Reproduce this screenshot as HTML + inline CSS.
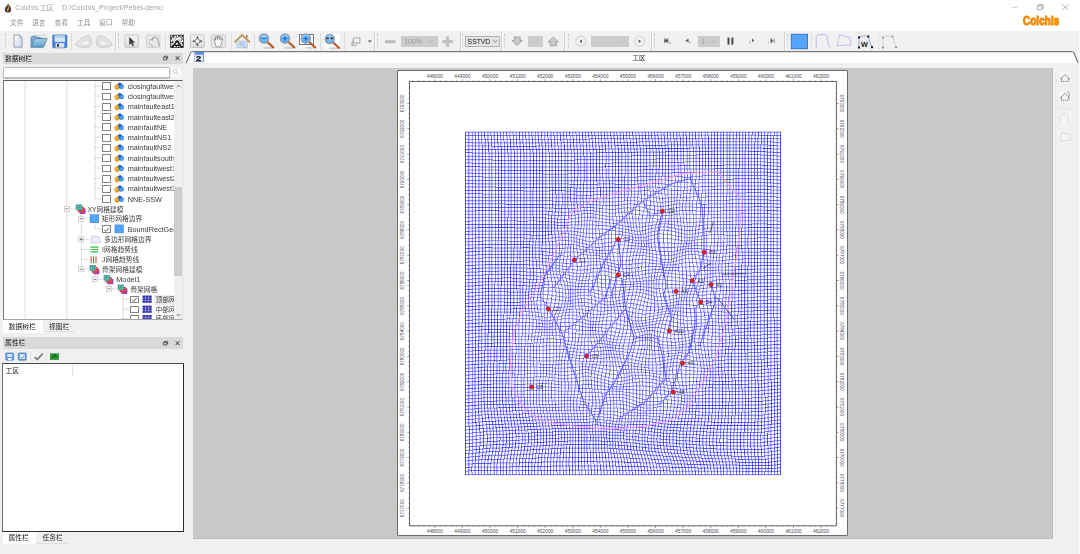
<!DOCTYPE html>
<html lang="zh"><head><meta charset="utf-8"><title>Colchis:工区</title>
<style>
*{box-sizing:border-box;margin:0;padding:0}
html,body{width:1080px;height:554px;overflow:hidden;background:#f0f0f0}
body{font-family:"Liberation Sans","Noto Sans CJK SC",sans-serif;font-size:6.75px;color:#333;position:relative}
.a{position:absolute}
.t{position:absolute;white-space:nowrap;line-height:10px;height:10px;transform:scaleY(.93);transform-origin:0 50%}
#titlebar{left:0;top:0;width:1080px;height:31px;background:#fff}
#toolbar{left:2.5px;top:31px;width:1077.5px;height:20px;background:#f1f1f1}
.sep{position:absolute;top:32.5px;width:1px;height:17px;background:#d4d4d4}
.hd{position:absolute;top:34px;width:1px;height:14px;border-left:1px dotted #c4c4c4}
.cb{position:absolute;top:35.5px;height:11.2px;background:#cccccc}
.ph{position:absolute;left:2.7px;width:180.8px;background:#d9d9d9}
.row{position:absolute;left:0;height:10.15px;width:170px}
.ck{position:absolute;width:9px;height:7.8px;border:.75px solid #848484;background:#fff}
.ex{position:absolute;width:5px;height:5px;border:.6px solid #9a9a9a;background:#fff}
.ex:before{content:"";position:absolute;left:.8px;right:.8px;top:1.6px;height:.6px;background:#444}
.ex.p:after{content:"";position:absolute;top:.8px;bottom:.8px;left:1.6px;width:.6px;background:#444}
</style></head><body>
<!--TITLE-->
<div class="a" id="titlebar"></div>
<svg class="a" style="left:4px;top:3px" width="8" height="10" viewBox="0 0 8 10"><path d="M4 .3C4.6 2.2 7.2 3.8 7.2 6.4A3.2 3.2 0 0 1 .8 6.4C.8 4.8 2 4 2.6 2.6C3.2 3.4 3.6 2 4 .3Z" fill="#4a4440"/><path d="M4.9 2.6C4.6 4.4 5.4 5.2 4.6 6.6C4 7.6 3.8 8.4 3.4 9C2.6 7.8 3 6.6 3.6 5.6C4.2 4.6 4.4 3.8 4.900 2.6Z" fill="#f09a3a"/></svg>
<div class="t" style="left:15.3px;top:3.4px;color:#a4a4a4;font-size:6.9px">Colchis:工区</div>
<div class="t" style="left:62px;top:3.4px;color:#a4a4a4;font-size:7.25px">D:/Colchis_Project/Petrel-demo</div>
<div class="t" style="left:10px;top:17.5px;color:#8e8e8e">文件</div>
<div class="t" style="left:32px;top:17.5px;color:#8e8e8e">语言</div>
<div class="t" style="left:54.5px;top:17.5px;color:#8e8e8e">查看</div>
<div class="t" style="left:77px;top:17.5px;color:#8e8e8e">工具</div>
<div class="t" style="left:99px;top:17.5px;color:#8e8e8e">窗口</div>
<div class="t" style="left:121.5px;top:17.5px;color:#8e8e8e">帮助</div>
<svg class="a" style="left:1005px;top:0" width="75" height="14" viewBox="0 0 75 14"><path d="M6.5 7.3h6" stroke="#c4c4c4" stroke-width=".8" fill="none"/><path d="M32.3 5.9h4.6v3.8h-4.6zM33.6 5.9v-1.3h4.6v3.8h-1.3" stroke="#8a8a8a" stroke-width=".7" fill="none"/><path d="M57.3 4.7l6 5.2M63.3 4.7l-6 5.2" stroke="#a0a0a0" stroke-width=".8" fill="none"/></svg>
<div class="a" id="logo" style="left:1022.6px;top:14.3px;height:15px;line-height:15px;font-weight:bold;font-size:12.4px;color:#f08c0a;-webkit-text-stroke:1.15px #f08c0a;transform-origin:0 50%;transform:scaleX(.79);white-space:nowrap;letter-spacing:.2px">Colchis</div>
<!--TOOLBAR-->
<div class="a" id="toolbar"></div>
<div class="sep" style="left:71px;background:#dcdcdc"></div><div class="sep" style="left:164.8px;background:#dcdcdc"></div><div class="sep" style="left:230.6px;background:#dcdcdc"></div><div class="sep" style="left:254.4px;background:#dcdcdc"></div><div class="sep" style="left:320px;background:#dcdcdc"></div><div class="sep" style="left:344.4px;background:#dcdcdc"></div><div class="sep" style="left:115.2px;top:31px;height:20px;background:#d2d2d2"></div><div class="sep" style="left:116.2px;top:31px;height:20px;background:#fafafa"></div><div class="sep" style="left:374.4px;top:31px;height:20px;background:#d2d2d2"></div><div class="sep" style="left:375.4px;top:31px;height:20px;background:#fafafa"></div><div class="sep" style="left:459.7px;top:31px;height:20px;background:#d2d2d2"></div><div class="sep" style="left:460.7px;top:31px;height:20px;background:#fafafa"></div><div class="sep" style="left:501.4px;top:31px;height:20px;background:#d2d2d2"></div><div class="sep" style="left:502.4px;top:31px;height:20px;background:#fafafa"></div><div class="sep" style="left:564.4px;top:31px;height:20px;background:#d2d2d2"></div><div class="sep" style="left:565.4px;top:31px;height:20px;background:#fafafa"></div><div class="sep" style="left:650.6px;top:31px;height:20px;background:#d2d2d2"></div><div class="sep" style="left:651.6px;top:31px;height:20px;background:#fafafa"></div><div class="sep" style="left:783.7px;top:31px;height:20px;background:#d2d2d2"></div><div class="sep" style="left:784.7px;top:31px;height:20px;background:#fafafa"></div><div class="hd" style="left:4.5px"></div><div class="hd" style="left:117.6px"></div><div class="hd" style="left:377.3px"></div><div class="hd" style="left:462.2px"></div><div class="hd" style="left:504.4px"></div><div class="hd" style="left:567.8px"></div><div class="hd" style="left:653.9px"></div><div class="hd" style="left:786.7px"></div><div class="sep" style="left:811.3px;background:#e2e2e2"></div><div class="sep" style="left:877.8px;background:#e2e2e2"></div><svg class="a" style="left:0;top:31px" width="1080" height="20" viewBox="0 31 1080 20"><defs><linearGradient id="gp" x1="0" y1="0" x2="1" y2="1"><stop offset="0" stop-color="#fff"/><stop offset="1" stop-color="#c6d4f4"/></linearGradient><linearGradient id="gf" x1="0" y1="0" x2="0" y2="1"><stop offset="0" stop-color="#a9d3ee"/><stop offset="1" stop-color="#5d9ccd"/></linearGradient><radialGradient id="gl" cx=".5" cy=".4" r=".6"><stop offset="0" stop-color="#bfe4ff"/><stop offset="1" stop-color="#3f9df0"/></radialGradient><linearGradient id="gb" x1="0" y1="0" x2="0" y2="1"><stop offset="0" stop-color="#f4f4f4"/><stop offset="1" stop-color="#dcdcdc"/></linearGradient></defs><path d="M14 35h5.6l2.4 2.4v9.8h-8z" fill="url(#gp)" stroke="#8d8d96" stroke-width=".8"/><path d="M19.6 35v2.4h2.4" fill="none" stroke="#8d8d96" stroke-width=".6"/><path d="M31 47.3V37.6l1.2-1.4h4l1 1.2h7.4v2" fill="#7fb0d8" stroke="#4c6f8f" stroke-width=".7"/><path d="M31 47.3l3.6-8.6h12.6l-3.8 8.6z" fill="url(#gf)" stroke="#4c6f8f" stroke-width=".7"/><path d="M36 36.3l8.6-1.6.6 3.6" fill="#fff" stroke="#8aa" stroke-width=".5"/><rect x="52.800" y="35" width="14" height="12.800" rx="1" fill="#4585e4" stroke="#2f5cae" stroke-width=".7"/><rect x="54.600" y="35.500" width="10.400" height="6.400" fill="#d6e6ee"/><rect x="54.600" y="35.500" width="10.400" height="2.200" fill="#b6d3e6"/><rect x="55.600" y="43.200" width="8.600" height="4.400" fill="#dde1e8"/><rect x="57" y="44" width="2" height="2.800" fill="#3a3f4a"/><path d="M75.500 45C78 40 84 35.500 89 35.800C92.500 38 92.500 44 90 46.500C85 48 79 47.500 75.500 45Z" fill="#e2e2e2" stroke="#c2c2c2" stroke-width=".8"/><path d="M80 44.200C82.500 41.700 86 40.200 88.500 40.700C89.500 42 89 44 88 45C85 45.600 82 45.200 80 44.200Z" fill="#f1f1f1" stroke="#cfcfcf" stroke-width=".5"/><path d="M112.500 45C110 40 104 35.500 99 35.800C95.500 38 95.500 44 98 46.500C103 48 109 47.500 112.500 45Z" fill="#e2e2e2" stroke="#c2c2c2" stroke-width=".8"/><path d="M108 44.200C105.500 41.700 102 40.200 99.500 40.700C98.500 42 99 44 100 45C103 45.600 106 45.200 108 44.200Z" fill="#f1f1f1" stroke="#cfcfcf" stroke-width=".5"/><rect x="125" y="35" width="13.4" height="12.4" rx="1" fill="url(#gb)" stroke="#b4b4b4" stroke-width=".7"/><path d="M129.200 36.8v8.200l2-1.800 1.500 3 1.300-.6-1.500-2.900h2.600z" fill="#3c3c3c"/><rect x="146.500" y="35" width="13.4" height="12.4" rx="1" fill="#e9e9e9" stroke="#c4c4c4" stroke-width=".7"/><path d="M149.500 40.500c1-1.600 2.400-1 2.800 0l.6-2.800 1.200.2.400-1 1.200.6 1 .2c1.600 2.600 2 5.600 2.600 8.600" fill="none" stroke="#777" stroke-width=".7"/><path d="M149 42.500c.8 1.600 2.400 3.400 4.400 4.400" fill="none" stroke="#888" stroke-width=".7"/><rect x="170.200" y="34.800" width="13.600" height="13" fill="#333"/><path d="M171.0 35.60h1.2v1.28h-1.2zM171.0 39.44h1.2v1.28h-1.2zM171.0 40.72h1.2v1.28h-1.2zM171.0 43.28h1.2v1.28h-1.2zM171.0 44.56h1.2v1.28h-1.2zM172.2 36.88h1.2v1.28h-1.2zM172.2 38.16h1.2v1.28h-1.2zM172.2 39.44h1.2v1.28h-1.2zM172.2 43.28h1.2v1.28h-1.2zM173.4 38.16h1.2v1.28h-1.2zM173.4 39.44h1.2v1.28h-1.2zM173.4 40.72h1.2v1.28h-1.2zM173.4 42.00h1.2v1.28h-1.2zM173.4 43.28h1.2v1.28h-1.2zM173.4 44.56h1.2v1.28h-1.2zM173.4 45.84h1.2v1.28h-1.2zM174.6 35.60h1.2v1.28h-1.2zM174.6 36.88h1.2v1.28h-1.2zM174.6 39.44h1.2v1.28h-1.2zM174.6 42.00h1.2v1.28h-1.2zM174.6 44.56h1.2v1.28h-1.2zM174.6 45.84h1.2v1.28h-1.2zM175.8 40.72h1.2v1.28h-1.2zM175.8 42.00h1.2v1.28h-1.2zM175.8 43.28h1.2v1.28h-1.2zM175.8 44.56h1.2v1.28h-1.2zM177.0 35.60h1.2v1.28h-1.2zM177.0 38.16h1.2v1.28h-1.2zM177.0 42.00h1.2v1.28h-1.2zM177.0 43.28h1.2v1.28h-1.2zM177.0 45.84h1.2v1.28h-1.2zM178.2 36.88h1.2v1.28h-1.2zM178.2 38.16h1.2v1.28h-1.2zM178.2 42.00h1.2v1.28h-1.2zM178.2 43.28h1.2v1.28h-1.2zM178.2 44.56h1.2v1.28h-1.2zM179.4 36.88h1.2v1.28h-1.2zM179.4 38.16h1.2v1.28h-1.2zM179.4 39.44h1.2v1.28h-1.2zM179.4 40.72h1.2v1.28h-1.2zM179.4 43.28h1.2v1.28h-1.2zM179.4 45.84h1.2v1.28h-1.2zM180.6 35.60h1.2v1.28h-1.2zM180.6 38.16h1.2v1.28h-1.2zM180.6 40.72h1.2v1.28h-1.2zM180.6 42.00h1.2v1.28h-1.2zM180.6 43.28h1.2v1.28h-1.2zM180.6 44.56h1.2v1.28h-1.2zM181.8 36.88h1.2v1.28h-1.2zM181.8 39.44h1.2v1.28h-1.2zM181.8 40.72h1.2v1.28h-1.2zM181.8 44.56h1.2v1.28h-1.2z" fill="#f2f2f2"/><path d="M174 36.600l6 5M180 36.600l-6 5M177 35.600v7M173.600 39h6.800" stroke="#f4f4f4" stroke-width=".9" fill="none"/><path d="M172 47.600l5-6.600 5 6.600M174.600 45.400h4.800" stroke="#111" stroke-width="1.300" fill="none"/><rect x="190.500" y="35" width="13.8" height="12.400" rx="1" fill="url(#gb)" stroke="#b4b4b4" stroke-width=".7"/><circle cx="197.400" cy="41.200" r="2.300" fill="#f8f8f8" stroke="#555" stroke-width=".7"/><path d="M197.400 36.200l1.400 2h-2.800zM197.400 46.200l1.400-2h-2.800zM192.400 41.200l2-1.400v2.800zM202.400 41.200l-2-1.400v2.800z" fill="#333"/><rect x="211.200" y="35" width="14.600" height="12.400" rx="1" fill="#e6e6e6" stroke="#c0c0c0" stroke-width=".7"/><path d="M215 42.500l-1.200-3.400 1-.4 1 1.800-.4-3.800 1.200-.2.800 3 .2-3.600h1.200l.4 3.600.8-3 1.100.3-.3 3.500 1.200-1.600.9.600-1.600 3.600-.6 3.800h-4.600z" fill="#fff" stroke="#666" stroke-width=".6"/><path d="M236.800 41h10.600v6.800h-10.600z" fill="#cfe0fc" stroke="#9ab" stroke-width=".4"/><path d="M234.200 41.600l8-7.600 8 7.600-1 .9-7-6.300-7 6.300z" fill="#d3a066" stroke="#a87a48" stroke-width=".5"/><rect x="246" y="35" width="1.500" height="3" fill="#b5793a"/><path d="M239.200 43h5.400M239.200 45h5.400" stroke="#8aa0c8" stroke-width=".6"/><path d="M243.500 46.500l3 2" stroke="#889" stroke-width=".6"/><ellipse cx="268" cy="47.7" rx="5" ry="1" fill="#cfcfcf"/><path d="M267.4 41.9l6 5.600" stroke="#b4561c" stroke-width="2" stroke-linecap="round"/><circle cx="264" cy="38.5" r="4.700" fill="url(#gl)" stroke="#9b9b9b" stroke-width="1.100"/><path d="M261.4 38.5h5.200" stroke="#1f6fd0" stroke-width="1.400"/><ellipse cx="289" cy="47.7" rx="5" ry="1" fill="#cfcfcf"/><path d="M288.4 41.9l6 5.600" stroke="#b4561c" stroke-width="2" stroke-linecap="round"/><circle cx="285" cy="38.5" r="4.700" fill="url(#gl)" stroke="#9b9b9b" stroke-width="1.100"/><path d="M282.4 38.5h5.200M285 35.9v5.200" stroke="#1f6fd0" stroke-width="1.400"/><rect x="299.200" y="33.800" width="15.400" height="14.600" fill="#fff"/><rect x="299.600" y="34.600" width="14" height="10" fill="none" stroke="#555" stroke-width=".8"/><ellipse cx="309.8" cy="47.7" rx="5" ry="1" fill="#cfcfcf"/><path d="M309.2 41.9l6 5.600" stroke="#b4561c" stroke-width="2" stroke-linecap="round"/><circle cx="305.8" cy="38.5" r="4.700" fill="url(#gl)" stroke="#9b9b9b" stroke-width="1.100"/><path d="M303.2 38.5h5.200M305.8 35.9v5.200" stroke="#1f6fd0" stroke-width="1.400"/><rect x="324" y="33.600" width="16" height="15" fill="#fff"/><ellipse cx="333.7" cy="48.2" rx="5" ry="1" fill="#cfcfcf"/><path d="M333.09999999999997 42.4l6 5.600" stroke="#b4561c" stroke-width="2" stroke-linecap="round"/><circle cx="329.7" cy="39" r="4.700" fill="url(#gl)" stroke="#9b9b9b" stroke-width="1.100"/><path d="M326.3 38.4h6.800" stroke="#222" stroke-width="1.500"/><path d="M328.7 38.4h2" stroke="#ddd" stroke-width="1"/><path d="M353.400 38h6.600v5h-6.600zM352 44.600l1.400-1.600M352 45.600h4l1.400-2.600M352 45.600v-3.600l1.400-1" fill="none" stroke="#8a8a8a" stroke-width=".7"/><path d="M367.800 40.400h4l-2 2z" fill="#555"/><rect x="385" y="40.300" width="10.600" height="3" rx=".8" fill="#b9b9b9"/><path d="M445.800 36.400h3.400v3.600h3.600v3.200h-3.600v3.600h-3.400v-3.600h-3.600v-3.200h3.600z" fill="#c2c2c2"/><path d="M514.200 37h6v3.600h2.200l-5.200 4.800-5.200-4.800h2.200z" fill="#c9c9c9" stroke="#8c8c8c" stroke-width=".7"/><path d="M550.300 45.800h6v-3.800h2.200l-5.200-4.800-5.200 4.800h2.200z" fill="#c9c9c9" stroke="#8c8c8c" stroke-width=".7"/><circle cx="580.800" cy="41.300" r="5" fill="#f2f2f2" stroke="#c2c2c2" stroke-width=".8"/><path d="M582 39.500v3.600l-2.600-1.800z" fill="#555"/><circle cx="639.700" cy="41.300" r="5" fill="#f2f2f2" stroke="#c2c2c2" stroke-width=".8"/><path d="M638.600 39.500v3.600l2.600-1.800z" fill="#555"/><path d="M664.600 38.200v5M668 38.200v5M664.600 40.700l1.700-1.500v3zM668 40.700l-1.700-1.500v3z" stroke="#555" stroke-width=".7" fill="#555"/><path d="M669.400 42.400l1.200.2-.6 1.600" stroke="#777" stroke-width=".5" fill="none"/><path d="M688.600 38.400v4.400l-3.400-2.200z" fill="#666"/><path d="M690.600 41.800c-1 .2-1.200 1.600 0 1.800" stroke="#777" stroke-width=".6" fill="none"/><rect x="727.500" y="37.600" width="2" height="7" fill="#484848"/><rect x="731.400" y="37.600" width="2" height="7" fill="#484848"/><path d="M752 38.200v4.400l2.300-2.200z" fill="#666"/><path d="M750.400 41c-1.400.4-1.400 2 0 2.400" stroke="#777" stroke-width=".6" fill="none"/><path d="M770.800 38.600v4.400l2.500-2.200zM774.400 38.400v4.800" fill="#666" stroke="#666" stroke-width=".6"/><path d="M769 42c-.8.300-.8 1.400 0 1.700" stroke="#888" stroke-width=".5" fill="none"/><rect x="791.200" y="34.200" width="16.400" height="14.600" fill="#55a5fc" stroke="#2a67b6" stroke-width=".8"/><path d="M816.200 48v-10.500c0-1.600 1.200-2.200 3-2.600l5.400-.6c1.600 0 2 1 2.400 2.600l1.600 8.400c.4 1.400 1 2.200 2 2.600" fill="none" stroke="#a9a9f0" stroke-width=".8"/><path d="M839.400 34.900l10.600 2.900 1 6.900-13.800 1.100z" fill="none" stroke="#b4b4f2" stroke-width=".8"/><path d="M859 47.500v-10c3-1.600 6.600-2.400 9.400-1 1 4 2 8 3.600 10.600" fill="none" stroke="#8f8fe8" stroke-width=".8"/><rect x="858.0" y="36.4" width="2" height="2" fill="#111"/><rect x="867.3" y="35.5" width="2" height="2" fill="#111"/><rect x="858.0" y="46.5" width="2" height="2" fill="#111"/><rect x="871.0" y="46.2" width="2" height="2" fill="#111"/><rect x="882.1" y="36.7" width="1.800" height="1.800" fill="#7a7a7a"/><rect x="891.6" y="35.7" width="1.800" height="1.800" fill="#7a7a7a"/><rect x="882.1" y="46.6" width="1.800" height="1.800" fill="#7a7a7a"/><rect x="895.1" y="46.3" width="1.800" height="1.800" fill="#7a7a7a"/><path d="M883 47.500v-10c3-1.800 7-2 9.500-1l3.500 10.700" fill="none" stroke="#bdbdbd" stroke-width=".6"/><text x="861" y="47.300" font-family="Liberation Sans,sans-serif" font-weight="bold" font-size="8.800" fill="#2a2a2a">w</text></svg><div class="cb" style="left:401.400px;width:36.500px"></div><div class="t" style="left:404px;top:36.800px;color:#9a9a9a;font-size:7px">100%</div><div class="cb" style="left:465.300px;width:35px;background:#e3e3e3;border:.7px solid #b4b4b4"></div><div class="t" style="left:467.600px;top:36.900px;color:#111;font-size:6.800px">SSTVD</div><div class="cb" style="left:527.800px;width:15.200px"></div><div class="cb" style="left:591.300px;width:38px"></div><div class="cb" style="left:698.300px;width:21.700px"></div><div class="t" style="left:701px;top:36.800px;color:#a0a0a0;font-size:7px">1</div><svg class="a" style="left:0;top:31px" width="1080" height="20" viewBox="0 31 1080 20"><path d="M428.8 40.3l2 2 2-2" fill="none" stroke="#aaa" stroke-width=".7"/><path d="M493.3 40.3l2 2 2-2" fill="none" stroke="#444" stroke-width=".7"/><path d="M534.5 40.3l2 2 2-2" fill="none" stroke="#b4b4b4" stroke-width=".7"/><path d="M621.3 40.3l2 2 2-2" fill="none" stroke="#b4b4b4" stroke-width=".7"/><path d="M712 40.3l2 2 2-2" fill="none" stroke="#b0b0b0" stroke-width=".7"/></svg>
<!--TABBAR-->
<div class="a" style="left:186px;top:51px;width:894px;height:12px;background:#fff"></div>
<svg class="a" style="left:182.3px;top:50px" width="897" height="14" viewBox="0 0 897 14"><path d="M0 0h10l-6 14h-4z" fill="#f0f0f0"/><path d="M890 0h7v14h-1z" fill="#f0f0f0"/><path d="M4.2 13.2L8.4 3.2Q9 1.7 10.6 1.7H890.6Q891.6 1.7 892 2.8L896 13" stroke="#5a5a5a" stroke-width="1" fill="none"/></svg>
<div class="a" style="left:194.2px;top:52px;width:9.8px;height:10.1px;background:linear-gradient(#4d84e6,#6a99ea 26%,#dfe7f6 34%,#eef2fa);border-right:.8px solid #6f9be8;border-bottom:.8px solid #86a9ea;border-left:.5px solid #a9c1ef"></div>
<div class="t" style="left:196.2px;top:53.6px;font-weight:bold;font-size:7.8px;color:#111;-webkit-text-stroke:.3px #111;transform:scaleX(1.2);transform-origin:0 0">2</div>
<div class="t" style="left:632.5px;top:52.8px;font-size:6.6px;color:#222">工区</div>
<!--CANVAS-->
<div class="a" style="left:192.8px;top:68px;width:859.8px;height:471.2px;background:#c8c8c8;border-right:1px solid #bbbdc3;border-bottom:1px solid #bbbdc3"></div>
<div class="a" style="left:1079px;top:31px;width:1px;height:523px;background:#fafafa"></div>
<div class="ph" style="top:52.600px;height:11px"></div><div class="t" style="left:5px;top:53.700px;color:#111">数据树栏</div><svg class="a" style="left:160px;top:52px" width="24" height="12" viewBox="160 52 24 12"><path d="M163.400 57.200h3.200v2.600h-3.200zM164.400 57.200v-1h3.200v2.600h-1" fill="none" stroke="#333" stroke-width=".7"/><path d="M175.700 56.200l3.600 3.800M179.300 56.200l-3.600 3.800" stroke="#222" stroke-width=".9"/></svg><div class="a" style="left:3.200px;top:66.500px;width:167px;height:11.600px;background:#fff;border:.8px solid #b9b9b9;border-radius:1.500px;box-shadow:0 .6px 0 #9a9a9a"></div><div class="a" style="left:171.300px;top:67.500px;width:9.400px;height:9.400px;background:#fbfbfb"></div><svg class="a" style="left:172px;top:68px" width="8" height="8" viewBox="0 0 8 8"><circle cx="3.300" cy="3.300" r="1.900" fill="none" stroke="#b4bcc8" stroke-width=".7"/><path d="M4.700 4.700l1.800 1.800" stroke="#b4bcc8" stroke-width=".8"/></svg><div class="a" id="tree" style="left:2.600px;top:80.4px;width:180.700px;height:239.9px;background:#fff;border:.8px solid #7a7a7a;border-top-color:#5c5c5c;border-bottom-color:#a8a8a8;border-right-color:#e4e4e4;overflow:hidden"><svg class="a" style="left:0;top:0" width="180" height="240" viewBox="3.4000000000000004 81.2 180 240"><path d="M24.500 81v240M66.200 81v240" stroke="#9c9c9c" stroke-width=".6" stroke-dasharray=".9 .7" fill="none"/><path d="M94.400 81v118.1" stroke="#9c9c9c" stroke-width=".6" stroke-dasharray=".9 .7" fill="none"/><path d="M94.400 86.10h6.600" stroke="#9c9c9c" stroke-width=".6" stroke-dasharray=".9 .7" fill="none"/><path d="M94.400 96.37h6.600" stroke="#9c9c9c" stroke-width=".6" stroke-dasharray=".9 .7" fill="none"/><path d="M94.400 106.64h6.600" stroke="#9c9c9c" stroke-width=".6" stroke-dasharray=".9 .7" fill="none"/><path d="M94.400 116.91h6.600" stroke="#9c9c9c" stroke-width=".6" stroke-dasharray=".9 .7" fill="none"/><path d="M94.400 127.18h6.600" stroke="#9c9c9c" stroke-width=".6" stroke-dasharray=".9 .7" fill="none"/><path d="M94.400 137.45h6.600" stroke="#9c9c9c" stroke-width=".6" stroke-dasharray=".9 .7" fill="none"/><path d="M94.400 147.72h6.600" stroke="#9c9c9c" stroke-width=".6" stroke-dasharray=".9 .7" fill="none"/><path d="M94.400 157.99h6.600" stroke="#9c9c9c" stroke-width=".6" stroke-dasharray=".9 .7" fill="none"/><path d="M94.400 168.26h6.600" stroke="#9c9c9c" stroke-width=".6" stroke-dasharray=".9 .7" fill="none"/><path d="M94.400 178.53h6.600" stroke="#9c9c9c" stroke-width=".6" stroke-dasharray=".9 .7" fill="none"/><path d="M94.400 188.80h6.600" stroke="#9c9c9c" stroke-width=".6" stroke-dasharray=".9 .7" fill="none"/><path d="M94.400 199.07h6.600" stroke="#9c9c9c" stroke-width=".6" stroke-dasharray=".9 .7" fill="none"/><path d="M69 209.10h6" stroke="#9c9c9c" stroke-width=".6" stroke-dasharray=".9 .7" fill="none"/><path d="M80.700 213.10V269.50" stroke="#9c9c9c" stroke-width=".6" stroke-dasharray=".9 .7" fill="none"/><path d="M83.600 218.90h5" stroke="#9c9c9c" stroke-width=".6" stroke-dasharray=".9 .7" fill="none"/><path d="M83.600 239.50h5" stroke="#9c9c9c" stroke-width=".6" stroke-dasharray=".9 .7" fill="none"/><path d="M83.600 249.70h5" stroke="#9c9c9c" stroke-width=".6" stroke-dasharray=".9 .7" fill="none"/><path d="M83.600 259.90h5" stroke="#9c9c9c" stroke-width=".6" stroke-dasharray=".9 .7" fill="none"/><path d="M83.600 269.50h5" stroke="#9c9c9c" stroke-width=".6" stroke-dasharray=".9 .7" fill="none"/><path d="M80.700 249.70h3M80.700 259.90h3" stroke="#9c9c9c" stroke-width=".6" stroke-dasharray=".9 .7" fill="none"/><path d="M94.400 222.90V229.10h6.600" stroke="#9c9c9c" stroke-width=".6" stroke-dasharray=".9 .7" fill="none"/><path d="M94.400 273.50V279.50M97.400 279.50h5" stroke="#9c9c9c" stroke-width=".6" stroke-dasharray=".9 .7" fill="none"/><path d="M108.400 283.50V289.10M111.400 289.10h5" stroke="#9c9c9c" stroke-width=".6" stroke-dasharray=".9 .7" fill="none"/><path d="M122.400 293.10V321M122.400 299.40h6.600M122.400 309.40h6.600M122.400 318.90h6.600" stroke="#9c9c9c" stroke-width=".6" stroke-dasharray=".9 .7" fill="none"/><path d="M118.00 83.10L118.70 82.20L119.40 83.10Z" fill="#b8661e"/><path d="M113.80 86.20L116.60 83.80L119.20 85.80L118.60 89.20L116.00 90.20L114.20 88.80Z" fill="#e89a10"/><path d="M114.60 86.50L116.60 84.80L117.20 87.50L115.40 88.50Z" fill="#f2b63c"/><path d="M117.20 84.20L119.60 83.00L123.20 85.40L123.00 88.60L120.40 89.30L118.60 88.40Z" fill="#2b80f0"/><path d="M117.20 84.20L119.60 83.00L121.20 84.10L118.80 85.50Z" fill="#1c52c4"/><path d="M119.80 86.30L122.20 85.70L122.20 88.10L120.20 88.50Z" fill="#58a8ff"/><path d="M118.00 93.37L118.70 92.47L119.40 93.37Z" fill="#b8661e"/><path d="M113.80 96.47L116.60 94.07L119.20 96.07L118.60 99.47L116.00 100.47L114.20 99.07Z" fill="#e89a10"/><path d="M114.60 96.77L116.60 95.07L117.20 97.77L115.40 98.77Z" fill="#f2b63c"/><path d="M117.20 94.47L119.60 93.27L123.20 95.67L123.00 98.87L120.40 99.57L118.60 98.67Z" fill="#2b80f0"/><path d="M117.20 94.47L119.60 93.27L121.20 94.37L118.80 95.77Z" fill="#1c52c4"/><path d="M119.80 96.57L122.20 95.97L122.20 98.37L120.20 98.77Z" fill="#58a8ff"/><path d="M118.00 103.64L118.70 102.74L119.40 103.64Z" fill="#b8661e"/><path d="M113.80 106.74L116.60 104.34L119.20 106.34L118.60 109.74L116.00 110.74L114.20 109.34Z" fill="#e89a10"/><path d="M114.60 107.04L116.60 105.34L117.20 108.04L115.40 109.04Z" fill="#f2b63c"/><path d="M117.20 104.74L119.60 103.54L123.20 105.94L123.00 109.14L120.40 109.84L118.60 108.94Z" fill="#2b80f0"/><path d="M117.20 104.74L119.60 103.54L121.20 104.64L118.80 106.04Z" fill="#1c52c4"/><path d="M119.80 106.84L122.20 106.24L122.20 108.64L120.20 109.04Z" fill="#58a8ff"/><path d="M118.00 113.91L118.70 113.01L119.40 113.91Z" fill="#b8661e"/><path d="M113.80 117.01L116.60 114.61L119.20 116.61L118.60 120.01L116.00 121.01L114.20 119.61Z" fill="#e89a10"/><path d="M114.60 117.31L116.60 115.61L117.20 118.31L115.40 119.31Z" fill="#f2b63c"/><path d="M117.20 115.01L119.60 113.81L123.20 116.21L123.00 119.41L120.40 120.11L118.60 119.21Z" fill="#2b80f0"/><path d="M117.20 115.01L119.60 113.81L121.20 114.91L118.80 116.31Z" fill="#1c52c4"/><path d="M119.80 117.11L122.20 116.51L122.20 118.91L120.20 119.31Z" fill="#58a8ff"/><path d="M118.00 124.18L118.70 123.28L119.40 124.18Z" fill="#b8661e"/><path d="M113.80 127.28L116.60 124.88L119.20 126.88L118.60 130.28L116.00 131.28L114.20 129.88Z" fill="#e89a10"/><path d="M114.60 127.58L116.60 125.88L117.20 128.58L115.40 129.58Z" fill="#f2b63c"/><path d="M117.20 125.28L119.60 124.08L123.20 126.48L123.00 129.68L120.40 130.38L118.60 129.48Z" fill="#2b80f0"/><path d="M117.20 125.28L119.60 124.08L121.20 125.18L118.80 126.58Z" fill="#1c52c4"/><path d="M119.80 127.38L122.20 126.78L122.20 129.18L120.20 129.58Z" fill="#58a8ff"/><path d="M118.00 134.45L118.70 133.55L119.40 134.45Z" fill="#b8661e"/><path d="M113.80 137.55L116.60 135.15L119.20 137.15L118.60 140.55L116.00 141.55L114.20 140.15Z" fill="#e89a10"/><path d="M114.60 137.85L116.60 136.15L117.20 138.85L115.40 139.85Z" fill="#f2b63c"/><path d="M117.20 135.55L119.60 134.35L123.20 136.75L123.00 139.95L120.40 140.65L118.60 139.75Z" fill="#2b80f0"/><path d="M117.20 135.55L119.60 134.35L121.20 135.45L118.80 136.85Z" fill="#1c52c4"/><path d="M119.80 137.65L122.20 137.05L122.20 139.45L120.20 139.85Z" fill="#58a8ff"/><path d="M118.00 144.72L118.70 143.82L119.40 144.72Z" fill="#b8661e"/><path d="M113.80 147.82L116.60 145.42L119.20 147.42L118.60 150.82L116.00 151.82L114.20 150.42Z" fill="#e89a10"/><path d="M114.60 148.12L116.60 146.42L117.20 149.12L115.40 150.12Z" fill="#f2b63c"/><path d="M117.20 145.82L119.60 144.62L123.20 147.02L123.00 150.22L120.40 150.92L118.60 150.02Z" fill="#2b80f0"/><path d="M117.20 145.82L119.60 144.62L121.20 145.72L118.80 147.12Z" fill="#1c52c4"/><path d="M119.80 147.92L122.20 147.32L122.20 149.72L120.20 150.12Z" fill="#58a8ff"/><path d="M118.00 154.99L118.70 154.09L119.40 154.99Z" fill="#b8661e"/><path d="M113.80 158.09L116.60 155.69L119.20 157.69L118.60 161.09L116.00 162.09L114.20 160.69Z" fill="#e89a10"/><path d="M114.60 158.39L116.60 156.69L117.20 159.39L115.40 160.39Z" fill="#f2b63c"/><path d="M117.20 156.09L119.60 154.89L123.20 157.29L123.00 160.49L120.40 161.19L118.60 160.29Z" fill="#2b80f0"/><path d="M117.20 156.09L119.60 154.89L121.20 155.99L118.80 157.39Z" fill="#1c52c4"/><path d="M119.80 158.19L122.20 157.59L122.20 159.99L120.20 160.39Z" fill="#58a8ff"/><path d="M118.00 165.26L118.70 164.36L119.40 165.26Z" fill="#b8661e"/><path d="M113.80 168.36L116.60 165.96L119.20 167.96L118.60 171.36L116.00 172.36L114.20 170.96Z" fill="#e89a10"/><path d="M114.60 168.66L116.60 166.96L117.20 169.66L115.40 170.66Z" fill="#f2b63c"/><path d="M117.20 166.36L119.60 165.16L123.20 167.56L123.00 170.76L120.40 171.46L118.60 170.56Z" fill="#2b80f0"/><path d="M117.20 166.36L119.60 165.16L121.20 166.26L118.80 167.66Z" fill="#1c52c4"/><path d="M119.80 168.46L122.20 167.86L122.20 170.26L120.20 170.66Z" fill="#58a8ff"/><path d="M118.00 175.53L118.70 174.63L119.40 175.53Z" fill="#b8661e"/><path d="M113.80 178.63L116.60 176.23L119.20 178.23L118.60 181.63L116.00 182.63L114.20 181.23Z" fill="#e89a10"/><path d="M114.60 178.93L116.60 177.23L117.20 179.93L115.40 180.93Z" fill="#f2b63c"/><path d="M117.20 176.63L119.60 175.43L123.20 177.83L123.00 181.03L120.40 181.73L118.60 180.83Z" fill="#2b80f0"/><path d="M117.20 176.63L119.60 175.43L121.20 176.53L118.80 177.93Z" fill="#1c52c4"/><path d="M119.80 178.73L122.20 178.13L122.20 180.53L120.20 180.93Z" fill="#58a8ff"/><path d="M118.00 185.80L118.70 184.90L119.40 185.80Z" fill="#b8661e"/><path d="M113.80 188.90L116.60 186.50L119.20 188.50L118.60 191.90L116.00 192.90L114.20 191.50Z" fill="#e89a10"/><path d="M114.60 189.20L116.60 187.50L117.20 190.20L115.40 191.20Z" fill="#f2b63c"/><path d="M117.20 186.90L119.60 185.70L123.20 188.10L123.00 191.30L120.40 192.00L118.60 191.10Z" fill="#2b80f0"/><path d="M117.20 186.90L119.60 185.70L121.20 186.80L118.80 188.20Z" fill="#1c52c4"/><path d="M119.80 189.00L122.20 188.40L122.20 190.80L120.20 191.20Z" fill="#58a8ff"/><path d="M118.00 196.07L118.70 195.17L119.40 196.07Z" fill="#b8661e"/><path d="M113.80 199.17L116.60 196.77L119.20 198.77L118.60 202.17L116.00 203.17L114.20 201.77Z" fill="#e89a10"/><path d="M114.60 199.47L116.60 197.77L117.20 200.47L115.40 201.47Z" fill="#f2b63c"/><path d="M117.20 197.17L119.60 195.97L123.20 198.37L123.00 201.57L120.40 202.27L118.60 201.37Z" fill="#2b80f0"/><path d="M117.20 197.17L119.60 195.97L121.20 197.07L118.80 198.47Z" fill="#1c52c4"/><path d="M119.80 199.27L122.20 198.67L122.20 201.07L120.20 201.47Z" fill="#58a8ff"/><rect x="78.80" y="208.50" width="6.200" height="5.600" rx=".8" fill="#a63fb4"/><rect x="77.20" y="206.90" width="6.200" height="5.600" rx=".8" fill="#e04848"/><rect x="75.20" y="204.70" width="6.400" height="5.800" rx=".8" fill="#3f9a94"/><path d="M75.20 206.70h6.400M75.20 208.60h6.400M77.30 204.70v5.800M79.50 204.70v5.800" stroke="#8fd0cc" stroke-width=".4"/><rect x="92.60" y="268.90" width="6.200" height="5.600" rx=".8" fill="#a63fb4"/><rect x="91.00" y="267.30" width="6.200" height="5.600" rx=".8" fill="#e04848"/><rect x="89.00" y="265.10" width="6.400" height="5.800" rx=".8" fill="#3f9a94"/><path d="M89.00 267.10h6.400M89.00 269.00h6.400M91.10 265.10v5.800M93.30 265.10v5.800" stroke="#8fd0cc" stroke-width=".4"/><rect x="106.60" y="278.90" width="6.200" height="5.600" rx=".8" fill="#a63fb4"/><rect x="105.00" y="277.30" width="6.200" height="5.600" rx=".8" fill="#e04848"/><rect x="103.00" y="275.10" width="6.400" height="5.800" rx=".8" fill="#3f9a94"/><path d="M103.00 277.10h6.400M103.00 279.00h6.400M105.10 275.10v5.800M107.30 275.10v5.800" stroke="#8fd0cc" stroke-width=".4"/><rect x="120.60" y="288.50" width="6.200" height="5.600" rx=".8" fill="#a63fb4"/><rect x="119.00" y="286.90" width="6.200" height="5.600" rx=".8" fill="#e04848"/><rect x="117.00" y="284.70" width="6.400" height="5.800" rx=".8" fill="#3f9a94"/><path d="M117.00 286.70h6.400M117.00 288.60h6.400M119.10 284.70v5.800M121.30 284.70v5.800" stroke="#8fd0cc" stroke-width=".4"/><rect x="89.400" y="214.90" width="8.800" height="8" fill="#55a5fc" stroke="#3b78c8" stroke-width=".5"/><rect x="114.300" y="225.10" width="8.600" height="8" fill="#55a5fc" stroke="#3b78c8" stroke-width=".5"/><path d="M91.400 235.90l7.600 1.600.9 5.400-10 .4z" fill="#ededf6" stroke="#b9b9ee" stroke-width=".6"/><path d="M89.800 247.30h8M89.800 249.70h8M89.800 252.10h8" stroke="#32c040" stroke-width="1.100"/><path d="M90.600 256.50v6.800M93 256.50v6.800M95.400 256.50v6.800" stroke="#d84a4a" stroke-width="1.100"/><rect x="142" y="295.80" width="9" height="7.200" fill="#2a2aa8"/><path d="M142 298.20h9M142 300.60h9M145 295.80v7.200M148 295.80v7.200" stroke="#c8c8f4" stroke-width=".5"/><rect x="142" y="305.80" width="9" height="7.200" fill="#2a2aa8"/><path d="M142 308.20h9M142 310.60h9M145 305.80v7.200M148 305.80v7.200" stroke="#c8c8f4" stroke-width=".5"/><rect x="142" y="315.30" width="9" height="7.200" fill="#2a2aa8"/><path d="M142 317.70h9M142 320.10h9M145 315.30v7.200M148 315.30v7.200" stroke="#c8c8f4" stroke-width=".5"/><rect x="63.80" y="206.60" width="5" height="5" fill="#fff" stroke="#b4b4b4" stroke-width=".6"/><path d="M64.90 209.10h2.800" stroke="#3a3a3a" stroke-width=".7"/><rect x="78.10" y="216.40" width="5" height="5" fill="#fff" stroke="#b4b4b4" stroke-width=".6"/><path d="M79.20 218.90h2.800" stroke="#3a3a3a" stroke-width=".7"/><rect x="78.10" y="237.00" width="5" height="5" fill="#fff" stroke="#b4b4b4" stroke-width=".6"/><path d="M79.20 239.50h2.800" stroke="#3a3a3a" stroke-width=".7"/><path d="M80.60 238.10v2.800" stroke="#3a3a3a" stroke-width=".7"/><rect x="78.10" y="267.00" width="5" height="5" fill="#fff" stroke="#b4b4b4" stroke-width=".6"/><path d="M79.20 269.50h2.800" stroke="#3a3a3a" stroke-width=".7"/><rect x="91.90" y="277.00" width="5" height="5" fill="#fff" stroke="#b4b4b4" stroke-width=".6"/><path d="M93.00 279.50h2.800" stroke="#3a3a3a" stroke-width=".7"/><rect x="105.90" y="286.60" width="5" height="5" fill="#fff" stroke="#b4b4b4" stroke-width=".6"/><path d="M107.00 289.10h2.800" stroke="#3a3a3a" stroke-width=".7"/></svg><div class="a" style="left:150.4px;top:213.20px;width:20px;height:10.200px;background:#ededed"></div><div class="ck" style="left:98.00px;top:1.00px"></div><div class="ck" style="left:98.00px;top:11.27px"></div><div class="ck" style="left:98.00px;top:21.54px"></div><div class="ck" style="left:98.00px;top:31.81px"></div><div class="ck" style="left:98.00px;top:42.08px"></div><div class="ck" style="left:98.00px;top:52.35px"></div><div class="ck" style="left:98.00px;top:62.62px"></div><div class="ck" style="left:98.00px;top:72.89px"></div><div class="ck" style="left:98.00px;top:83.16px"></div><div class="ck" style="left:98.00px;top:93.43px"></div><div class="ck" style="left:98.00px;top:103.70px"></div><div class="ck" style="left:98.00px;top:113.97px"></div><div class="ck" style="left:98.00px;top:144.00px"></div><svg class="a" style="left:98.00px;top:143.50px" width="9" height="9" viewBox="0 0 9 9"><path d="M2.200 4.800l1.600 1.600 3-3.600" fill="none" stroke="#333" stroke-width=".8"/></svg><div class="ck" style="left:126.20px;top:214.30px"></div><svg class="a" style="left:126.20px;top:213.80px" width="9" height="9" viewBox="0 0 9 9"><path d="M2.200 4.800l1.600 1.600 3-3.600" fill="none" stroke="#333" stroke-width=".8"/></svg><div class="ck" style="left:126.20px;top:224.30px"></div><div class="ck" style="left:126.20px;top:233.80px"></div><div class="t tt" style="left:124.10px;top:0.30px;font-size:7.25px;color:#3a3a3a">closingfaultwest1</div><div class="t tt" style="left:124.10px;top:10.57px;font-size:7.25px;color:#3a3a3a">closingfaultwest2</div><div class="t tt" style="left:124.10px;top:20.84px;font-size:7.25px;color:#3a3a3a">mainfaulteast1</div><div class="t tt" style="left:124.10px;top:31.11px;font-size:7.25px;color:#3a3a3a">mainfaulteast2</div><div class="t tt" style="left:124.10px;top:41.38px;font-size:7.25px;color:#3a3a3a">mainfaultNE</div><div class="t tt" style="left:124.10px;top:51.65px;font-size:7.25px;color:#3a3a3a">mainfaultNS1</div><div class="t tt" style="left:124.10px;top:61.92px;font-size:7.25px;color:#3a3a3a">mainfaultNS2</div><div class="t tt" style="left:124.10px;top:72.19px;font-size:7.25px;color:#3a3a3a">mainfaultsouth</div><div class="t tt" style="left:124.10px;top:82.46px;font-size:7.25px;color:#3a3a3a">mainfaultwest1</div><div class="t tt" style="left:124.10px;top:92.73px;font-size:7.25px;color:#3a3a3a">mainfaultwest2</div><div class="t tt" style="left:124.10px;top:103.00px;font-size:7.25px;color:#3a3a3a">mainfaultwest3</div><div class="t tt" style="left:124.10px;top:113.27px;font-size:7.25px;color:#3a3a3a">NNE-SSW</div><div class="t tt" style="left:84.00px;top:123.30px;color:#3a3a3a">XY网格建模</div><div class="t tt" style="left:98.20px;top:133.10px;color:#3a3a3a">矩形网格边界</div><div class="t tt" style="left:124.10px;top:143.30px;font-size:7.25px;color:#3a3a3a">BoundRectGeo</div><div class="t tt" style="left:100.60px;top:153.70px;color:#3a3a3a">多边形网格边界</div><div class="t tt" style="left:98.50px;top:163.90px;color:#3a3a3a">I网格趋势线</div><div class="t tt" style="left:98.50px;top:174.10px;color:#3a3a3a">J网格趋势线</div><div class="t tt" style="left:98.50px;top:183.70px;color:#3a3a3a">骨架网格建模</div><div class="t tt" style="left:112.60px;top:193.70px;font-size:7.4px;color:#3a3a3a">Model1</div><div class="t tt" style="left:126.60px;top:203.30px;color:#3a3a3a">骨架网格</div><div class="t tt" style="left:151.90px;top:213.60px;color:#3a3a3a">顶部网格</div><div class="t tt" style="left:151.90px;top:223.60px;color:#3a3a3a">中部网格</div><div class="t tt" style="left:151.90px;top:233.10px;color:#3a3a3a">底部网格</div><div class="a" style="left:170.2px;top:0;width:9.200px;height:240px;background:#f0f0f0"></div><div class="a" style="left:170.4px;top:105.60000000000001px;width:8.400px;height:88.600px;background:#cdcdcd"></div><svg class="a" style="left:170.2px;top:0" width="9.200" height="240" viewBox="0 81.2 9.200 240"><path d="M2.700 87.200l1.900-1.900 1.900 1.900" fill="none" stroke="#505050" stroke-width=".8"/><path d="M2.700 314.400l1.900 1.900 1.900-1.900" fill="none" stroke="#505050" stroke-width=".8"/></svg></div><div class="a" style="left:2.800px;top:320.300px;width:40.600px;height:12.800px;background:#fff"></div><div class="a" style="left:43.400px;top:331.200px;width:31.800px;height:.8px;background:#dedede"></div><div class="t" style="left:8.700px;top:322px;color:#111">数据树栏</div><div class="t" style="left:49px;top:321.500px;color:#222">视图栏</div><div class="ph" style="top:336.500px;height:12.400px"></div><div class="t" style="left:5px;top:338.200px;color:#111">属性栏</div><svg class="a" style="left:160px;top:337px" width="24" height="12" viewBox="160 337 24 12"><path d="M163.400 342.400h3.200v2.600h-3.200zM164.400 342.400v-1h3.200v2.600h-1" fill="none" stroke="#333" stroke-width=".7"/><path d="M175.700 341.200l3.600 3.800M179.300 341.200l-3.600 3.800" stroke="#222" stroke-width=".9"/></svg><svg class="a" style="left:0;top:350px" width="70" height="13" viewBox="0 350 70 13"><rect x="5.800" y="353" width="7.800" height="7.200" rx=".6" fill="#5b9ae8" stroke="#3466b0" stroke-width=".6"/><rect x="7.200" y="354" width="5" height="2.800" fill="#dbe8f6"/><rect x="7.800" y="358" width="3.800" height="2.200" fill="#eef"/><rect x="18.400" y="353" width="7.800" height="7.200" rx=".6" fill="#5b9ae8" stroke="#3466b0" stroke-width=".6"/><rect x="19.800" y="354.200" width="5" height="4.800" fill="#eef4fb"/><path d="M20.600 357l1.400 1.400 2.400-3" stroke="#2c8a3a" stroke-width=".8" fill="none"/><path d="M30.800 352.500v8.500M46.200 352.500v8.500" stroke="#d9d9d9" stroke-width=".7"/><path d="M34.600 357l2.600 2.600 5.600-6" stroke="#7c7c7c" stroke-width="1.700" fill="none"/><rect x="50" y="353.300" width="9" height="6.600" fill="#2f9a3a"/><path d="M51.500 358.500l1.500-3 1 2 1-3.400 1 3.400 1.400-2" stroke="#0c5a18" stroke-width=".7" fill="none"/></svg><div class="a" style="left:2.400px;top:363.300px;width:181.300px;height:168.600px;background:#fff;border:.9px solid #6e6e6e;border-right-color:#2a2a2a;border-bottom-color:#2a2a2a;border-top-color:#4a4a4a"></div><div class="a" style="left:72px;top:364.200px;width:.7px;height:12.200px;background:#e2e2e2"></div><div class="t" style="left:5.500px;top:365.600px;color:#111">工区</div><div class="a" style="left:3px;top:532.200px;width:32.600px;height:11.400px;background:#fff"></div><div class="a" style="left:35.600px;top:542.600px;width:33px;height:.8px;background:#dedede"></div><div class="t" style="left:8.600px;top:533.400px;color:#111">属性栏</div><div class="t" style="left:42.600px;top:533px;color:#222">任务栏</div>
<div class="a" style="left:397px;top:70px;width:451.400px;height:466.400px;background:#fff;border:1px solid #6c6c6c;border-radius:1px"></div><svg class="a" style="left:390px;top:64px" width="470" height="480" viewBox="390 64 470 480"><path d="M412.73 81.4v-1M412.73 525.8v1M418.25 81.4v-1M418.25 525.8v1M423.76 81.4v-1M423.76 525.8v1M429.28 81.4v-1M429.28 525.8v1M434.80 81.4v-2.2M434.80 525.8v2.2M440.32 81.4v-1M440.32 525.8v1M445.84 81.4v-1M445.84 525.8v1M451.35 81.4v-1M451.35 525.8v1M456.87 81.4v-1M456.87 525.8v1M462.39 81.4v-2.2M462.39 525.8v2.2M467.91 81.4v-1M467.91 525.8v1M473.43 81.4v-1M473.43 525.8v1M478.94 81.4v-1M478.94 525.8v1M484.46 81.4v-1M484.46 525.8v1M489.98 81.4v-2.2M489.98 525.8v2.2M495.50 81.4v-1M495.50 525.8v1M501.02 81.4v-1M501.02 525.8v1M506.53 81.4v-1M506.53 525.8v1M512.05 81.4v-1M512.05 525.8v1M517.57 81.4v-2.2M517.57 525.8v2.2M523.09 81.4v-1M523.09 525.8v1M528.61 81.4v-1M528.61 525.8v1M534.12 81.4v-1M534.12 525.8v1M539.64 81.4v-1M539.64 525.8v1M545.16 81.4v-2.2M545.16 525.8v2.2M550.68 81.4v-1M550.68 525.8v1M556.20 81.4v-1M556.20 525.8v1M561.71 81.4v-1M561.71 525.8v1M567.23 81.4v-1M567.23 525.8v1M572.75 81.4v-2.2M572.75 525.8v2.2M578.27 81.4v-1M578.27 525.8v1M583.79 81.4v-1M583.79 525.8v1M589.30 81.4v-1M589.30 525.8v1M594.82 81.4v-1M594.82 525.8v1M600.34 81.4v-2.2M600.34 525.8v2.2M605.86 81.4v-1M605.86 525.8v1M611.38 81.4v-1M611.38 525.8v1M616.89 81.4v-1M616.89 525.8v1M622.41 81.4v-1M622.41 525.8v1M627.93 81.4v-2.2M627.93 525.8v2.2M633.45 81.4v-1M633.45 525.8v1M638.97 81.4v-1M638.97 525.8v1M644.48 81.4v-1M644.48 525.8v1M650.00 81.4v-1M650.00 525.8v1M655.52 81.4v-2.2M655.52 525.8v2.2M661.04 81.4v-1M661.04 525.8v1M666.56 81.4v-1M666.56 525.8v1M672.07 81.4v-1M672.07 525.8v1M677.59 81.4v-1M677.59 525.8v1M683.11 81.4v-2.2M683.11 525.8v2.2M688.63 81.4v-1M688.63 525.8v1M694.15 81.4v-1M694.15 525.8v1M699.66 81.4v-1M699.66 525.8v1M705.18 81.4v-1M705.18 525.8v1M710.70 81.4v-2.2M710.70 525.8v2.2M716.22 81.4v-1M716.22 525.8v1M721.74 81.4v-1M721.74 525.8v1M727.25 81.4v-1M727.25 525.8v1M732.77 81.4v-1M732.77 525.8v1M738.29 81.4v-2.2M738.29 525.8v2.2M743.81 81.4v-1M743.81 525.8v1M749.33 81.4v-1M749.33 525.8v1M754.84 81.4v-1M754.84 525.8v1M760.36 81.4v-1M760.36 525.8v1M765.88 81.4v-2.2M765.88 525.8v2.2M771.40 81.4v-1M771.40 525.8v1M776.92 81.4v-1M776.92 525.8v1M782.43 81.4v-1M782.43 525.8v1M787.95 81.4v-1M787.95 525.8v1M793.47 81.4v-2.2M793.47 525.8v2.2M798.99 81.4v-1M798.99 525.8v1M804.51 81.4v-1M804.51 525.8v1M810.02 81.4v-1M810.02 525.8v1M815.54 81.4v-1M815.54 525.8v1M821.06 81.4v-2.2M821.06 525.8v2.2M826.58 81.4v-1M826.58 525.8v1M832.10 81.4v-1M832.10 525.8v1M409.5 83.16h-1M836.3 83.16h1M409.5 88.22h-1M836.3 88.22h1M409.5 93.28h-1M836.3 93.28h1M409.5 98.34h-1M836.3 98.34h1M409.5 103.40h-2.2M836.3 103.40h2.2M409.5 108.46h-1M836.3 108.46h1M409.5 113.52h-1M836.3 113.52h1M409.5 118.58h-1M836.3 118.58h1M409.5 123.64h-1M836.3 123.64h1M409.5 128.70h-2.2M836.3 128.70h2.2M409.5 133.76h-1M836.3 133.76h1M409.5 138.82h-1M836.3 138.82h1M409.5 143.88h-1M836.3 143.88h1M409.5 148.94h-1M836.3 148.94h1M409.5 154.00h-2.2M836.3 154.00h2.2M409.5 159.06h-1M836.3 159.06h1M409.5 164.12h-1M836.3 164.12h1M409.5 169.18h-1M836.3 169.18h1M409.5 174.24h-1M836.3 174.24h1M409.5 179.30h-2.2M836.3 179.30h2.2M409.5 184.36h-1M836.3 184.36h1M409.5 189.42h-1M836.3 189.42h1M409.5 194.48h-1M836.3 194.48h1M409.5 199.54h-1M836.3 199.54h1M409.5 204.60h-2.2M836.3 204.60h2.2M409.5 209.66h-1M836.3 209.66h1M409.5 214.72h-1M836.3 214.72h1M409.5 219.78h-1M836.3 219.78h1M409.5 224.84h-1M836.3 224.84h1M409.5 229.90h-2.2M836.3 229.90h2.2M409.5 234.96h-1M836.3 234.96h1M409.5 240.02h-1M836.3 240.02h1M409.5 245.08h-1M836.3 245.08h1M409.5 250.14h-1M836.3 250.14h1M409.5 255.20h-2.2M836.3 255.20h2.2M409.5 260.26h-1M836.3 260.26h1M409.5 265.32h-1M836.3 265.32h1M409.5 270.38h-1M836.3 270.38h1M409.5 275.44h-1M836.3 275.44h1M409.5 280.50h-2.2M836.3 280.50h2.2M409.5 285.56h-1M836.3 285.56h1M409.5 290.62h-1M836.3 290.62h1M409.5 295.68h-1M836.3 295.68h1M409.5 300.74h-1M836.3 300.74h1M409.5 305.80h-2.2M836.3 305.80h2.2M409.5 310.86h-1M836.3 310.86h1M409.5 315.92h-1M836.3 315.92h1M409.5 320.98h-1M836.3 320.98h1M409.5 326.04h-1M836.3 326.04h1M409.5 331.10h-2.2M836.3 331.10h2.2M409.5 336.16h-1M836.3 336.16h1M409.5 341.22h-1M836.3 341.22h1M409.5 346.28h-1M836.3 346.28h1M409.5 351.34h-1M836.3 351.34h1M409.5 356.40h-2.2M836.3 356.40h2.2M409.5 361.46h-1M836.3 361.46h1M409.5 366.52h-1M836.3 366.52h1M409.5 371.58h-1M836.3 371.58h1M409.5 376.64h-1M836.3 376.64h1M409.5 381.70h-2.2M836.3 381.70h2.2M409.5 386.76h-1M836.3 386.76h1M409.5 391.82h-1M836.3 391.82h1M409.5 396.88h-1M836.3 396.88h1M409.5 401.94h-1M836.3 401.94h1M409.5 407.00h-2.2M836.3 407.00h2.2M409.5 412.06h-1M836.3 412.06h1M409.5 417.12h-1M836.3 417.12h1M409.5 422.18h-1M836.3 422.18h1M409.5 427.24h-1M836.3 427.24h1M409.5 432.30h-2.2M836.3 432.30h2.2M409.5 437.36h-1M836.3 437.36h1M409.5 442.42h-1M836.3 442.42h1M409.5 447.48h-1M836.3 447.48h1M409.5 452.54h-1M836.3 452.54h1M409.5 457.60h-2.2M836.3 457.60h2.2M409.5 462.66h-1M836.3 462.66h1M409.5 467.72h-1M836.3 467.72h1M409.5 472.78h-1M836.3 472.78h1M409.5 477.84h-1M836.3 477.84h1M409.5 482.90h-2.2M836.3 482.90h2.2M409.5 487.96h-1M836.3 487.96h1M409.5 493.02h-1M836.3 493.02h1M409.5 498.08h-1M836.3 498.08h1M409.5 503.14h-1M836.3 503.14h1M409.5 508.20h-2.2M836.3 508.20h2.2M409.5 513.26h-1M836.3 513.26h1M409.5 518.32h-1M836.3 518.32h1M409.5 523.38h-1M836.3 523.38h1" stroke="#5a5a5a" stroke-width=".6" fill="none"/><rect x="409.5" y="81.4" width="426.79999999999995" height="444.4" fill="none" stroke="#4a4a4a" stroke-width=".85"/><g font-family="Liberation Sans,sans-serif" font-size="4.850" fill="#4a4a55" text-anchor="middle"><text x="434.8" y="78.100">448000</text><text x="434.8" y="533">448000</text><text x="462.4" y="78.100">449000</text><text x="462.4" y="533">449000</text><text x="490.0" y="78.100">450000</text><text x="490.0" y="533">450000</text><text x="517.6" y="78.100">451000</text><text x="517.6" y="533">451000</text><text x="545.2" y="78.100">452000</text><text x="545.2" y="533">452000</text><text x="572.8" y="78.100">453000</text><text x="572.8" y="533">453000</text><text x="600.3" y="78.100">454000</text><text x="600.3" y="533">454000</text><text x="627.9" y="78.100">455000</text><text x="627.9" y="533">455000</text><text x="655.5" y="78.100">456000</text><text x="655.5" y="533">456000</text><text x="683.1" y="78.100">457000</text><text x="683.1" y="533">457000</text><text x="710.7" y="78.100">458000</text><text x="710.7" y="533">458000</text><text x="738.3" y="78.100">459000</text><text x="738.3" y="533">459000</text><text x="765.9" y="78.100">460000</text><text x="765.9" y="533">460000</text><text x="793.5" y="78.100">461000</text><text x="793.5" y="533">461000</text><text x="821.1" y="78.100">462000</text><text x="821.1" y="533">462000</text><text font-size="4.600" transform="translate(404.400 103.4) rotate(-90)">6793000</text><text font-size="4.600" transform="translate(840.200 103.4) rotate(90)">6793000</text><text font-size="4.600" transform="translate(404.400 128.7) rotate(-90)">6792000</text><text font-size="4.600" transform="translate(840.200 128.7) rotate(90)">6792000</text><text font-size="4.600" transform="translate(404.400 154.0) rotate(-90)">6791000</text><text font-size="4.600" transform="translate(840.200 154.0) rotate(90)">6791000</text><text font-size="4.600" transform="translate(404.400 179.3) rotate(-90)">6790000</text><text font-size="4.600" transform="translate(840.200 179.3) rotate(90)">6790000</text><text font-size="4.600" transform="translate(404.400 204.6) rotate(-90)">6789000</text><text font-size="4.600" transform="translate(840.200 204.6) rotate(90)">6789000</text><text font-size="4.600" transform="translate(404.400 229.9) rotate(-90)">6788000</text><text font-size="4.600" transform="translate(840.200 229.9) rotate(90)">6788000</text><text font-size="4.600" transform="translate(404.400 255.2) rotate(-90)">6787000</text><text font-size="4.600" transform="translate(840.200 255.2) rotate(90)">6787000</text><text font-size="4.600" transform="translate(404.400 280.5) rotate(-90)">6786000</text><text font-size="4.600" transform="translate(840.200 280.5) rotate(90)">6786000</text><text font-size="4.600" transform="translate(404.400 305.8) rotate(-90)">6785000</text><text font-size="4.600" transform="translate(840.200 305.8) rotate(90)">6785000</text><text font-size="4.600" transform="translate(404.400 331.1) rotate(-90)">6784000</text><text font-size="4.600" transform="translate(840.200 331.1) rotate(90)">6784000</text><text font-size="4.600" transform="translate(404.400 356.4) rotate(-90)">6783000</text><text font-size="4.600" transform="translate(840.200 356.4) rotate(90)">6783000</text><text font-size="4.600" transform="translate(404.400 381.7) rotate(-90)">6782000</text><text font-size="4.600" transform="translate(840.200 381.7) rotate(90)">6782000</text><text font-size="4.600" transform="translate(404.400 407.0) rotate(-90)">6781000</text><text font-size="4.600" transform="translate(840.200 407.0) rotate(90)">6781000</text><text font-size="4.600" transform="translate(404.400 432.3) rotate(-90)">6780000</text><text font-size="4.600" transform="translate(840.200 432.3) rotate(90)">6780000</text><text font-size="4.600" transform="translate(404.400 457.6) rotate(-90)">6779000</text><text font-size="4.600" transform="translate(840.200 457.6) rotate(90)">6779000</text><text font-size="4.600" transform="translate(404.400 482.9) rotate(-90)">6778000</text><text font-size="4.600" transform="translate(840.200 482.9) rotate(90)">6778000</text><text font-size="4.600" transform="translate(404.400 508.2) rotate(-90)">6777000</text><text font-size="4.600" transform="translate(840.200 508.2) rotate(90)">6777000</text></g><rect x="465.7" y="132.2" width="314.8" height="342.3" fill="#fff"/><path d="M657.56 134.5h102.94M590.06 139.5h189.56M638.44 142.5h135M465.19 155.5h14.06M590.62 155.5h40.5M660.38 154.5h37.12M761.62 154.5h7.31M776.81 155.5h3.94M465.19 160.5h27.56M574.88 160.5h43.31M656.44 159.5h33.19M689.62 157.5h74.25M763.88 159.5h7.31M779.62 160.5h1.12M684 162.5h82.69M482.62 176.5h155.81M653.62 175.5h22.5M682.88 176.5h7.88M693 175.5h9M768.38 175.5h8.44M513.56 181.5h124.31M647.44 180.5h19.12M670.5 181.5h11.81M684 180.5h1.69M690.75 180.5h7.88M734.06 179.5h28.69M771.19 180.5h7.88M482.62 193.5h85.5M576.56 194.5h16.88M607.5 193.5h10.69M628.31 193.5h14.06M646.88 194.5h4.5M653.62 193.5h1.12M663.19 193.5h19.69M698.06 193.5h1.69M465.19 196.5h50.06M515.25 198.5h54.56M569.81 197.5h42.75M612.56 198.5h19.12M631.69 196.5h3.94M635.62 198.5h4.5M640.12 197.5h4.5M644.62 199.5h.56M645.19 197.5h2.25M647.44 198.5h1.69M649.12 196.5h5.62M654.75 198.5h3.38M658.12 197.5h9M667.12 198.5h9M676.12 196.5h16.31M697.5 196.5h8.44M736.88 195.5h29.25M775.69 196.5h5.06M465.19 201.5h88.31M623.25 201.5h13.5M644.06 201.5h2.25M647.44 201.5h2.25M673.88 201.5h6.19M700.31 201.5h6.75M729.56 200.5h39.38M778.5 201.5h2.25M465.19 213.5h77.62M549 214.5h5.06M572.06 214.5h3.38M579.38 213.5h3.38M592.88 213.5h3.38M599.06 214.5h2.81M605.25 215.5h5.06M623.81 215.5h1.69M626.62 214.5h.56M627.75 213.5h1.12M632.81 213.5h3.38M641.25 214.5h7.31M653.62 214.5h3.94M659.81 215.5h2.25M669.38 214.5h3.38M678.38 213.5h14.62M719.44 213.5h20.25M770.06 213.5h10.69M465.19 218.5h18.56M483.75 216.5h6.75M490.5 218.5h55.12M551.25 219.5h5.62M569.25 219.5h4.5M577.69 218.5h3.94M581.62 216.5h12.38M594 218.5h3.38M600.75 219.5h3.38M608.62 220.5h5.62M621 220.5h1.12M622.69 219.5h1.12M631.69 219.5h16.31M654.19 219.5h2.25M660.38 219.5h6.75M711 218.5h25.31M736.31 216.5h37.69M774 218.5h6.75M471.38 221.5h46.69M527.62 221.5h10.12M581.62 221.5h11.25M733.5 221.5h25.31M761.62 221.5h16.31M632.25 233.5h2.81M642.38 233.5h2.25M684 233.5h9.56M480.94 233.5h32.62M530.44 234.5h16.31M553.5 233.5h7.31M568.12 233.5h4.5M575.44 234.5h2.25M579.94 235.5h2.25M585.56 236.5h3.94M589.5 238.5h5.62M596.81 238.5h2.25M599.06 236.5h1.12M600.75 235.5h.56M602.44 234.5h1.69M606.94 233.5h7.31M622.69 234.5h2.81M628.31 235.5h2.25M632.81 236.5h2.25M635.06 238.5h9.56M644.62 236.5h2.25M648.56 235.5h1.12M651.94 234.5h3.38M657.56 233.5h1.12M662.06 233.5h6.19M671.62 234.5h2.81M676.69 235.5h2.25M681.75 236.5h2.81M684.56 238.5h7.31M691.88 236.5h3.38M698.06 235.5h3.38M704.25 234.5h5.06M725.06 234.5h15.19M474.75 238.5h49.5M538.31 239.5h3.94M551.25 238.5h5.62M556.88 236.5h14.62M571.5 238.5h2.81M576.56 239.5h1.69M580.5 240.5h2.25M585 241.5h2.25M595.12 241.5h1.12M597.38 240.5h2.25M603.56 239.5h5.06M617.06 239.5h2.25M626.06 239.5h2.81M631.12 240.5h2.81M637.31 241.5h8.44M648.56 240.5h1.69M653.06 239.5h2.81M668.25 239.5h4.5M676.12 240.5h3.38M682.88 241.5h7.88M694.69 240.5h3.94M703.12 239.5h6.19M729 239.5h1.69M757.69 238.5h10.69M483.19 241.5h24.75M556.31 241.5h6.75M568.69 241.5h3.94M652.5 253.5h3.94M660.38 254.5h.56M671.62 254.5h2.25M676.12 253.5h1.69M465.19 254.5h11.25M519.75 253.5h17.44M543.38 254.5h5.62M552.94 255.5h2.81M558.56 255.5h1.12M563.62 255.5h5.62M570.94 255.5h7.88M579.38 254.5h1.69M586.69 254.5h6.19M600.19 255.5h2.81M608.62 255.5h2.25M626.62 255.5h5.62M645.75 255.5h3.38M651.94 256.5h3.38M655.31 258.5h2.81M660.38 259.5h.56M671.06 259.5h2.25M675 258.5h1.69M676.69 256.5h1.69M680.06 255.5h1.69M684 254.5h2.81M697.5 254.5h3.38M703.69 255.5h2.81M709.31 256.5h13.5M727.88 255.5h5.06M751.5 254.5h29.25M465.19 259.5h7.31M482.62 258.5h57.94M546.19 259.5h3.94M552.38 260.5h3.94M563.06 260.5h7.31M574.88 260.5h.56M576 259.5h.56M598.5 259.5h3.38M604.69 260.5h1.12M608.62 260.5h2.81M615.38 261.5h11.25M631.69 260.5h4.5M647.44 260.5h3.94M655.31 261.5h3.94M675.56 261.5h2.25M679.5 260.5h2.25M684 259.5h3.38M697.5 259.5h3.38M704.25 260.5h2.81M709.88 261.5h11.25M726.75 260.5h5.62M742.5 259.5h38.25M523.12 261.5h7.88M617.06 273.5h2.81M621 274.5h1.69M636.19 274.5h3.94M642.94 273.5h3.38M674.44 273.5h5.06M686.25 274.5h4.5M695.25 274.5h1.69M698.62 273.5h1.69M705.94 273.5h3.94M474.75 274.5h9M519.75 274.5h6.19M535.5 275.5h6.19M544.5 274.5h.56M546.75 273.5h10.69M560.25 274.5h3.38M567 274.5h1.69M571.5 275.5h3.38M574.88 277.5h14.62M589.5 275.5h7.31M597.94 274.5h7.31M608.06 275.5h1.69M609.75 277.5h1.69M611.44 276.5h6.75M618.19 278.5h1.12M621 279.5h1.12M626.06 279.5h11.81M642.38 278.5h3.38M645.75 276.5h3.38M649.12 277.5h3.94M653.06 275.5h7.88M663.75 275.5h1.12M664.88 277.5h7.31M672.19 276.5h3.94M676.12 278.5h4.5M685.12 279.5h2.81M690.75 280.5h.56M693.56 279.5h1.69M698.06 279.5h4.5M705.38 278.5h3.38M708.75 276.5h3.38M712.12 277.5h6.19M718.31 275.5h10.12M728.44 277.5h21.38M749.81 275.5h15.75M471.94 279.5h8.44M502.31 278.5h9.56M520.88 279.5h6.19M546.19 278.5h12.38M560.81 278.5h1.12M561.94 276.5h1.69M563.62 278.5h2.25M568.12 279.5h2.25M573.75 280.5h4.5M587.81 280.5h2.81M593.44 280.5h2.81M597.38 279.5h2.25M605.81 280.5h5.62M655.31 280.5h10.12M716.06 280.5h18M747 280.5h14.06M658.12 292.5h5.62M465.19 292.5h3.94M563.06 292.5h12.38M593.44 292.5h2.25M597.94 293.5h2.25M603 294.5h6.75M611.44 294.5h1.12M617.06 293.5h3.94M623.25 292.5h2.25M641.81 292.5h2.25M646.31 293.5h1.69M649.69 294.5h1.69M653.06 295.5h2.81M655.88 297.5h11.81M667.69 295.5h2.81M673.88 294.5h3.38M681.19 293.5h15.75M697.5 294.5h8.44M720.56 293.5h21.38M761.06 292.5h19.69M465.19 297.5h.56M465.75 295.5h9M482.62 294.5h28.69M523.12 294.5h6.19M538.88 293.5h6.19M549 294.5h3.94M556.88 295.5h3.38M560.25 297.5h4.5M570.38 297.5h3.38M573.75 295.5h3.38M585.56 294.5h5.62M592.88 295.5h1.12M594 297.5h1.69M597.38 298.5h2.25M601.31 299.5h1.69M608.06 298.5h10.12M621 297.5h2.25M623.25 295.5h2.81M637.88 295.5h2.81M640.69 297.5h2.25M644.62 298.5h1.69M648 299.5h2.25M651.94 300.5h2.81M668.25 300.5h2.25M673.31 299.5h2.25M678.38 298.5h3.94M690.75 298.5h4.5M696.94 298.5h1.69M712.69 298.5h2.25M722.25 298.5h15.75M756 297.5h24.75M465.19 300.5h6.75M479.81 299.5h45M529.88 298.5h5.06M541.12 298.5h1.12M542.81 299.5h9M555.19 300.5h3.38M572.62 300.5h2.81M579.38 299.5h7.31M591.19 300.5h2.25M621.56 300.5h2.81M635.06 300.5h2.81M767.25 300.5h13.5M634.5 312.5h2.81M642.38 313.5h3.94M652.5 312.5h3.94M469.12 312.5h8.44M540.56 312.5h10.69M551.81 313.5h4.5M559.12 312.5h4.5M580.5 312.5h2.25M585.56 313.5h.56M586.69 312.5h3.38M592.31 313.5h2.81M600.75 313.5h5.62M610.88 312.5h5.62M621.56 312.5h3.38M627.19 314.5h1.12M628.88 315.5h2.25M631.12 317.5h3.38M639.56 318.5h2.81M648 317.5h3.38M651.38 315.5h2.81M657 314.5h2.81M662.06 313.5h2.81M668.25 312.5h1.12M671.06 313.5h1.69M677.25 314.5h2.81M682.88 315.5h4.5M687.38 317.5h8.44M695.81 315.5h7.31M709.88 314.5h1.69M714.94 314.5h25.31M750.38 313.5h14.62M466.31 317.5h9M475.31 315.5h7.88M512.44 314.5h17.44M535.5 315.5h4.5M540 317.5h3.94M549 317.5h4.5M556.31 317.5h2.81M559.12 315.5h2.81M567 314.5h7.88M577.69 315.5h2.25M579.94 317.5h3.94M583.88 315.5h2.81M586.69 317.5h1.69M590.06 318.5h13.5M608.62 317.5h4.5M618.19 317.5h1.69M619.88 315.5h2.25M622.12 317.5h2.25M626.62 318.5h1.12M628.31 319.5h.56M629.44 320.5h1.12M646.88 320.5h2.81M652.5 319.5h2.25M657.56 318.5h2.81M663.75 317.5h7.31M671.62 318.5h2.81M676.12 319.5h2.25M681.19 320.5h3.38M696.38 320.5h7.31M708.75 319.5h.56M715.5 319.5h20.81M747 318.5h15.19M472.5 320.5h7.88M505.69 319.5h25.31M536.06 320.5h4.5M551.81 320.5h7.31M561.94 319.5h6.19M569.25 319.5h5.06M581.06 319.5h1.69M584.44 320.5h1.69M616.5 320.5h2.81M620.44 332.5h15.19M663.75 332.5h5.62M671.06 333.5h2.25M684.56 333.5h3.94M692.44 332.5h.56M718.31 332.5h5.06M465.19 333.5h4.5M478.12 332.5h9.56M507.38 332.5h26.44M561.38 332.5h1.12M568.69 332.5h2.81M577.69 333.5h21.94M605.81 333.5h1.12M609.19 334.5h1.69M614.25 335.5h4.5M618.75 337.5h10.12M628.88 335.5h6.75M635.62 337.5h2.25M637.88 335.5h2.25M642.38 334.5h1.69M646.88 333.5h3.38M652.5 334.5h1.69M655.88 335.5h1.69M657.56 337.5h3.94M664.88 338.5h2.81M672.19 339.5h7.31M683.44 338.5h2.81M689.62 337.5h2.25M691.88 335.5h.56M693.56 334.5h5.06M703.12 334.5h2.81M710.44 335.5h20.81M740.25 334.5h21.38M770.62 333.5h10.12M465.19 338.5h1.69M475.88 337.5h7.31M483.19 335.5h57.38M560.81 335.5h2.25M563.06 337.5h1.12M572.06 338.5h18.56M595.69 338.5h6.75M605.25 338.5h2.25M609.19 339.5h2.81M615.38 340.5h18M634.5 339.5h1.12M636.19 338.5h18.56M656.44 339.5h1.12M658.12 340.5h.56M690.19 340.5h1.69M691.88 339.5h2.25M695.25 339.5h10.69M711 340.5h18M738 339.5h21.38M767.81 338.5h12.94M480.94 340.5h54.56M545.06 339.5h9.56M563.62 340.5h.56M600.75 340.5h1.12M644.62 340.5h3.94M583.31 352.5h5.62M635.06 352.5h5.06M645.19 353.5h20.81M671.06 352.5h6.75M682.31 352.5h6.75M691.31 352.5h2.81M699.19 353.5h11.81M720 352.5h28.12M470.25 353.5h9M498.94 352.5h28.69M550.69 352.5h16.88M568.69 353.5h.56M573.75 354.5h5.62M579.38 356.5h8.44M587.81 354.5h11.81M603.56 353.5h7.31M612 353.5h7.31M622.69 354.5h2.81M625.5 356.5h2.25M627.75 354.5h1.69M629.44 356.5h2.81M632.25 355.5h2.25M634.5 357.5h2.81M641.25 358.5h3.94M657 358.5h4.5M665.44 357.5h3.38M668.81 355.5h3.94M672.75 356.5h8.44M681.19 355.5h4.5M685.69 356.5h3.38M689.06 355.5h2.25M691.31 357.5h1.69M696.94 358.5h15.19M717.75 357.5h24.19M741.94 355.5h17.44M759.38 356.5h6.75M766.12 354.5h7.88M466.88 358.5h9.56M484.31 357.5h29.25M513.56 355.5h7.88M521.44 357.5h9M553.5 357.5h15.19M569.25 358.5h6.75M584.44 358.5h4.5M592.88 359.5h3.94M605.25 358.5h15.19M623.25 359.5h6.75M632.25 360.5h2.25M666 360.5h2.81M672.19 359.5h6.75M685.12 359.5h1.12M688.5 360.5h2.25M725.06 360.5h30.94M764.44 359.5h6.75M506.81 360.5h19.12M600.19 371.5h2.25M604.69 372.5h2.25M609.75 373.5h2.81M615.94 374.5h1.69M618.75 373.5h1.69M626.06 372.5h2.81M631.69 371.5h12.38M649.12 372.5h3.94M657.56 373.5h7.88M676.12 373.5h1.12M682.31 373.5h14.62M720 373.5h18.56M758.25 372.5h7.31M771.19 371.5h7.88M465.19 374.5h5.06M478.69 373.5h16.31M514.12 373.5h11.81M549 373.5h4.5M558 374.5h11.81M573.75 373.5h3.94M580.5 372.5h3.94M588.38 372.5h3.94M594.56 373.5h2.25M598.5 374.5h2.25M600.75 376.5h1.69M602.44 375.5h2.25M604.69 377.5h2.25M609.19 378.5h1.69M613.12 379.5h3.94M617.62 378.5h6.75M626.62 377.5h1.69M628.31 375.5h2.25M630.56 376.5h3.38M633.94 374.5h13.5M647.44 376.5h3.94M651.38 375.5h3.38M654.75 377.5h2.81M659.81 378.5h1.69M664.31 379.5h1.12M672.75 379.5h1.12M676.69 378.5h59.06M754.31 377.5h10.12M764.44 375.5h5.62M770.06 376.5h6.19M776.25 374.5h4.5M465.19 379.5h2.25M475.88 378.5h7.31M534.94 377.5h12.94M552.38 378.5h3.94M560.81 379.5h9M573.75 378.5h5.06M581.06 377.5h3.94M585 375.5h3.94M588.94 377.5h3.38M595.12 378.5h2.25M599.06 379.5h2.25M632.81 379.5h3.94M646.31 379.5h4.5M774.56 379.5h6.19M678.94 391.5h16.88M465.19 391.5h7.88M580.5 391.5h1.69M600.75 392.5h4.5M606.94 391.5h1.12M623.25 391.5h4.5M631.12 392.5h2.81M637.31 393.5h3.94M644.62 394.5h6.19M651.94 393.5h1.12M660.38 393.5h4.5M668.81 393.5h1.12M674.44 393.5h2.25M680.62 394.5h6.19M686.81 396.5h7.31M694.12 394.5h9.56M756 393.5h8.44M768.94 392.5h5.06M779.62 391.5h1.12M465.19 396.5h5.06M470.25 394.5h7.88M486 393.5h87.75M581.62 396.5h.56M591.75 397.5h5.62M604.12 396.5h1.12M605.25 394.5h.56M606.38 393.5h15.19M624.94 394.5h2.81M627.75 396.5h2.25M632.25 397.5h1.69M636.19 398.5h2.25M640.69 399.5h1.69M646.88 399.5h1.69M649.12 398.5h3.94M653.62 398.5h11.81M666 397.5h1.12M670.5 397.5h2.81M676.69 398.5h4.5M685.69 399.5h16.88M751.5 398.5h12.38M767.81 397.5h4.5M777.94 396.5h2.81M467.44 399.5h7.88M482.06 398.5h34.88M534.94 398.5h21.94M573.75 398.5h7.31M582.19 399.5h1.12M603.56 399.5h1.12M605.81 398.5h3.38M621.56 398.5h3.38M627.19 399.5h1.69M700.31 411.5h50.06M472.5 411.5h6.19M618.19 411.5h2.25M622.69 412.5h5.06M628.88 411.5h4.5M636.75 412.5h14.06M662.62 413.5h10.12M695.25 414.5h15.75M711 416.5h24.75M735.75 414.5h27.56M767.25 413.5h3.94M775.12 412.5h5.06M470.25 416.5h6.19M476.44 414.5h5.62M497.25 413.5h24.75M583.88 412.5h6.75M592.31 413.5h6.75M603.56 413.5h5.06M613.69 414.5h2.25M615.94 416.5h2.81M622.69 416.5h1.69M624.38 414.5h6.19M630.56 416.5h18M655.31 417.5h5.62M666 418.5h12.38M704.25 419.5h57.94M766.12 418.5h3.94M774 417.5h4.5M474.19 419.5h6.19M485.44 418.5h21.94M528.75 417.5h50.06M588.94 416.5h3.94M593.44 417.5h.56M594.56 417.5h4.5M600.75 417.5h3.38M608.62 418.5h3.94M626.06 419.5h13.5M644.62 419.5h7.31M589.5 419.5h5.06M706.5 431.5h25.31M758.81 431.5h6.19M465.19 432.5h6.75M477.56 431.5h5.06M652.5 431.5h4.5M662.06 432.5h6.19M677.81 433.5h11.25M700.31 434.5h15.75M716.06 436.5h47.81M763.88 434.5h3.94M771.75 433.5h3.94M780.19 432.5h.56M465.19 437.5h4.5M475.88 436.5h5.06M480.94 434.5h4.5M495.56 433.5h12.94M520.31 432.5h11.25M542.25 431.5h10.69M607.5 431.5h7.88M624.38 432.5h8.44M639.56 433.5h5.62M650.25 434.5h5.06M655.31 436.5h6.19M668.81 437.5h8.44M685.69 438.5h9.56M708.19 439.5h19.69M762.19 439.5h4.5M770.62 438.5h3.94M779.06 437.5h1.69M479.25 439.5h4.5M489.38 438.5h13.5M514.12 437.5h10.69M534.94 436.5h10.12M545.06 434.5h10.69M572.06 433.5h12.94M608.62 434.5h9.56M618.19 436.5h7.88M632.25 437.5h5.62M642.94 438.5h5.06M653.62 439.5h6.75M539.44 439.5h9.56M559.69 438.5h47.25M618.19 439.5h7.31M708.75 451.5h15.19M765.56 451.5h3.94M471.94 452.5h5.06M482.06 451.5h3.94M656.44 451.5h7.31M670.5 452.5h7.31M685.12 453.5h8.44M693.56 455.5h9.56M703.12 454.5h11.81M714.94 456.5h17.44M764.44 456.5h3.94M768.38 454.5h3.94M772.31 455.5h3.94M776.25 453.5h3.94M469.69 457.5h6.19M480.38 456.5h11.81M492.19 454.5h15.19M507.38 455.5h12.94M520.31 453.5h12.38M545.06 452.5h14.06M610.88 452.5h11.25M631.69 453.5h7.88M639.56 455.5h7.31M646.88 454.5h7.88M654.75 456.5h8.44M671.62 457.5h9M689.62 458.5h11.25M714.38 459.5h20.81M767.25 459.5h3.94M775.12 458.5h3.94M502.31 459.5h18M536.62 458.5h17.44M614.81 458.5h14.06M640.12 459.5h10.69M465.19 470.5h3.38M668.81 470.5h73.12M777.94 470.5h2.81M465.19 475.5h315.56M471.5 131.83v292.39M473.5 424.22v29.24M471.5 453.46v12.82M471.5 472.44v2.56M480.5 131.83v1.54M482.5 133.37v11.29M482.5 323.17v44.63M480.5 367.79v40.52M482.5 408.32v8.21M482.5 458.08v5.64M480.5 463.72v11.29M489.5 428.84v18.98M491.5 131.83v3.59M491.5 348.81v29.75M489.5 378.57v24.11M491.5 402.68v8.72M491.5 462.18v12.82M498.5 424.22v4.62M500.5 428.84v8.21M500.5 439.61v8.21M498.5 447.82v4.1M500.5 361.13v47.19M507.5 152.86v64.12M507.5 421.14v4.1M509.5 425.25v4.1M509.5 447.3v4.1M507.5 451.41v2.56M509.5 369.85v34.37M516.5 145.68v116.96M516.5 289.82v16.41M516.5 419.09v3.08M518.5 422.17v3.59M518.5 449.87v3.08M516.5 452.95v3.59M518.5 374.98v21.03M525.5 138.5v8.21M527.5 146.71v100.03M525.5 246.74v20.52M527.5 267.25v12.82M525.5 280.08v10.77M525.5 311.88v11.29M525.5 417.04v3.59M527.5 420.63v3.08M527.5 451.92v3.08M525.5 455v4.1M534.5 131.83v8.21M536.5 140.04v8.21M536.5 240.07v19.49M536.5 282.64v3.08M534.5 285.72v2.56M534.5 310.86v4.1M536.5 314.96v4.1M536.5 329.32v4.1M534.5 333.43v3.08M534.5 414.99v3.59M536.5 418.58v3.08M536.5 452.95v4.1M534.5 457.05v6.67M534.5 473.98v1.03M543.5 274.95v2.05M543.5 131.83v1.54M545.5 133.37v8.21M545.5 275.46v2.05M543.5 277.51v8.21M543.5 302.14v2.56M545.5 304.7v1.54M543.5 306.24v11.8M545.5 318.04v14.36M543.5 332.4v5.13M543.5 413.45v3.59M545.5 417.04v3.59M545.5 454.49v5.64M543.5 460.13v14.88M552.5 287.26v.51M554.5 131.83v3.59M554.5 263.15v.51M552.5 263.66v1.03M552.5 270.84v2.56M554.5 273.41v3.08M554.5 307.26v1.54M552.5 308.8v1.54M552.5 316.5v4.62M552.5 335.99v9.23M554.5 345.22v6.16M552.5 351.38v12.82M552.5 411.91v4.62M554.5 416.53v3.59M554.5 456.54v18.47M561.5 192.87v13.85M561.5 235.96v14.36M561.5 286.75v2.56M563.5 289.31v12.31M561.5 301.62v2.56M563.5 263.15v8.21M563.5 275.46v1.54M561.5 277v.51M563.5 277.51v2.05M563.5 311.37v1.54M561.5 312.91v2.56M561.5 333.43v2.05M563.5 335.48v1.54M563.5 351.89v2.56M561.5 354.46v4.1M561.5 411.91v5.64M563.5 417.55v4.1M563.5 460.13v8.72M570.5 149.79v37.45M570.5 201.08v12.31M572.5 213.39v14.36M570.5 227.76v17.44M572.5 328.81v.51M572.5 340.61v4.1M570.5 344.71v2.05M570.5 363.69v7.18M572.5 370.87v14.36M570.5 385.24v10.26M570.5 412.42v5.64M572.5 418.06v4.1M572.5 357.54v7.18M579.5 143.63v7.18M581.5 150.81v33.86M579.5 184.67v21.03M581.5 205.7v5.13M581.5 227.24v5.13M579.5 232.37v5.13M579.5 247.76v3.08M581.5 250.84v3.59M579.5 254.43v5.13M581.5 259.56v3.08M581.5 267.25v6.16M579.5 273.41v3.59M579.5 314.96v3.59M581.5 288.29v9.75M581.5 345.74v4.62M579.5 350.35v4.1M579.5 390.36v1.54M581.5 391.9v2.05M581.5 397.55v4.62M579.5 402.16v3.59M579.5 410.88v6.67M581.5 417.55v5.64M588.5 137.99v7.18M590.5 145.17v6.67M590.5 198.52v5.13M590.5 219.55v10.77M588.5 230.32v10.26M590.5 240.58v5.64M588.5 246.22v4.62M590.5 250.84v2.05M590.5 272.9v3.08M588.5 275.97v3.08M590.5 361.64v2.56M588.5 364.2v2.56M588.5 388.31v13.85M588.5 409.34v1.03M590.5 410.37v23.08M590.5 441.15v8.72M597.5 132.34v6.67M599.5 139.01v6.67M599.5 220.57v9.75M599.5 238.01v1.03M597.5 239.04v3.59M599.5 242.63v4.62M599.5 272.9v1.54M597.5 274.44v2.56M597.5 286.23v8.72M599.5 294.95v6.16M599.5 301.62v1.03M597.5 302.65v1.54M597.5 350.87v6.67M599.5 322.65v4.62M597.5 327.27v4.62M599.5 331.89v3.08M599.5 368.82v2.56M597.5 371.39v3.08M597.5 389.85v6.16M599.5 396.01v3.08M599.5 412.94v2.56M597.5 415.5v2.05M597.5 425.76v8.72M599.5 434.48v17.44M606.5 131.83v2.05M608.5 133.88v6.67M608.5 254.94v2.05M606.5 256.99v5.64M608.5 262.64v2.56M608.5 288.8v2.05M606.5 290.85v3.08M606.5 299.06v3.08M608.5 302.14v11.8M606.5 313.93v4.62M606.5 360.61v2.05M606.5 469.87v5.13M608.5 329.84v1.03M606.5 330.86v2.56M606.5 340.61v5.64M608.5 346.25v3.08M608.5 389.34v2.56M606.5 391.9v1.03M606.5 402.16v4.62M608.5 406.78v5.13M606.5 411.91v8.21M606.5 439.61v9.75M608.5 449.36v3.59M615.5 215.96v3.08M617.5 219.04v5.13M615.5 224.16v1.54M615.5 272.9v2.05M617.5 131.83v3.59M617.5 275.97v5.13M615.5 281.1v4.1M615.5 299.57v4.1M617.5 303.67v3.08M617.5 320.6v5.64M615.5 326.24v4.1M615.5 364.72v3.08M617.5 367.79v3.08M617.5 376v2.56M615.5 378.57v1.03M615.5 466.28v5.13M617.5 471.41v3.59M617.5 340.09v2.05M615.5 342.15v2.56M615.5 350.35v3.08M617.5 353.43v2.56M617.5 384.72v5.13M615.5 389.85v8.72M617.5 398.57v9.75M617.5 419.6v1.54M615.5 421.14v2.56M615.5 448.33v3.08M617.5 451.41v2.56M624.5 152.35v23.08M624.5 213.39v3.08M624.5 223.65v3.08M626.5 226.73v11.29M624.5 238.01v4.62M626.5 263.15v2.56M626.5 280.08v6.67M624.5 286.75v4.1M624.5 303.16v4.62M626.5 307.78v3.08M626.5 334.45v3.08M624.5 337.53v2.05M624.5 463.72v4.1M626.5 467.82v4.62M626.5 360.1v1.03M624.5 361.13v5.64M626.5 366.77v3.08M626.5 414.47v.51M624.5 414.99v8.21M624.5 449.87v2.05M626.5 451.92v2.56M633.5 148.25v27.7M635.5 175.95v20.52M633.5 196.46v9.75M633.5 228.78v3.08M635.5 231.86v3.08M635.5 247.25v2.56M633.5 249.81v2.56M635.5 267.25v1.54M635.5 298.03v2.56M633.5 300.6v2.56M633.5 328.81v2.05M635.5 330.86v2.05M635.5 343.69v3.08M633.5 346.76v2.56M633.5 462.18v3.59M635.5 465.77v3.59M635.5 362.15v4.1M633.5 366.26v3.08M635.5 369.33v5.13M635.5 408.83v2.05M633.5 410.88v4.62M635.5 415.5v.51M633.5 416.01v5.13M633.5 450.38v2.05M635.5 452.43v2.05M642.5 143.12v6.67M644.5 149.79v36.42M644.5 200.06v2.56M644.5 208.78v2.56M642.5 211.34v2.56M642.5 232.89v4.62M644.5 237.5v5.64M644.5 246.22v5.13M642.5 251.35v3.59M642.5 279.56v3.59M644.5 283.16v7.18M642.5 290.34v3.08M644.5 303.16v2.56M642.5 305.73v3.08M642.5 326.24v2.05M644.5 328.3v1.54M644.5 351.38v3.08M642.5 354.46v2.56M642.5 385.24v4.1M642.5 461.15v2.56M644.5 463.72v3.08M644.5 403.7v11.29M642.5 414.99v8.72M642.5 450.89v2.05M644.5 452.95v1.54M651.5 138.5v6.67M653.5 145.17v6.16M653.5 167.23v22.57M653.5 196.98v.51M653.5 217.5v5.13M651.5 222.63v3.08M651.5 248.27v4.62M653.5 252.89v14.36M651.5 267.25v6.67M653.5 320.6v4.1M651.5 324.71v8.21M651.5 350.35v13.34M653.5 363.69v8.72M653.5 378.05v13.85M651.5 391.9v1.54M651.5 460.13v2.05M653.5 462.18v2.56M660.5 208.78v7.69M653.5 418.06v5.64M651.5 423.71v4.1M651.5 450.89v2.05M653.5 452.95v1.54M660.5 132.86v7.18M662.5 140.04v7.18M662.5 175.95v9.75M662.5 188.26v1.54M660.5 189.8v1.03M662.5 190.82v5.13M662.5 219.04v2.05M660.5 221.09v2.05M660.5 253.4v6.67M662.5 260.07v3.59M662.5 270.33v2.05M660.5 272.38v1.54M660.5 297.52v4.1M662.5 301.62v4.62M662.5 310.34v4.1M660.5 314.45v2.56M662.5 324.19v2.05M660.5 326.24v3.08M660.5 349.84v2.56M662.5 352.41v3.08M662.5 382.67v.51M660.5 383.18v1.54M660.5 394.98v7.18M660.5 459.1v2.05M662.5 461.15v1.54M662.5 422.68v3.08M660.5 425.76v3.59M660.5 448.84v3.59M662.5 452.43v1.03M669.5 131.83v3.08M671.5 134.91v7.69M671.5 185.69v2.05M671.5 261.1v4.1M669.5 265.2v2.56M669.5 299.06v16.93M671.5 315.99v1.03M669.5 317.01v3.59M669.5 470.9v4.1M671.5 320.6v2.56M669.5 323.17v4.62M669.5 330.35v4.1M671.5 334.45v6.16M671.5 360.61v3.59M669.5 364.2v3.59M669.5 381.13v1.03M671.5 382.16v3.08M671.5 392.42v5.64M671.5 405.24v4.1M669.5 409.34v3.59M669.5 458.08v1.54M671.5 459.61v2.05M671.5 424.22v4.1M669.5 428.32v5.13M669.5 443.71v5.13M671.5 448.84v3.59M680.5 131.83v5.13M680.5 199.03v17.44M680.5 251.35v4.1M678.5 255.46v8.21M678.5 271.87v27.7M678.5 342.15v8.72M678.5 467.82v4.1M680.5 471.93v3.08M680.5 363.69v2.56M678.5 366.26v2.05M678.5 383.7v2.05M680.5 385.75v2.56M680.5 410.37v3.08M678.5 413.45v2.56M678.5 456.54v1.54M680.5 458.08v1.54M680.5 430.89v16.41M689.5 243.14v5.13M687.5 248.27v4.62M689.5 252.89v7.18M689.5 287.77v1.54M687.5 289.31v2.56M687.5 329.84v4.1M689.5 333.94v5.64M689.5 346.25v5.13M687.5 351.38v2.05M687.5 465.26v3.08M689.5 468.34v4.62M689.5 413.96v4.1M687.5 418.06v4.1M687.5 455v1.54M689.5 456.54v1.54M696.5 194.93v6.67M696.5 264.69v4.1M698.5 268.79v3.08M696.5 271.87v1.54M698.5 234.94v6.67M696.5 241.61v5.13M698.5 246.74v5.13M698.5 283.16v1.54M696.5 284.69v1.54M696.5 293.93v4.1M696.5 302.14v4.1M696.5 360.61v6.16M698.5 366.77v5.13M696.5 371.9v6.67M696.5 462.69v2.56M698.5 465.26v3.08M698.5 422.17v4.1M696.5 426.27v4.1M696.5 450.89v3.59M698.5 454.49v1.54M707.5 229.81v28.73M707.5 287.77v6.16M705.5 293.93v2.56M707.5 296.49v9.75M707.5 324.71v1.54M705.5 326.24v2.05M705.5 358.56v3.59M707.5 362.15v4.62M707.5 376v5.13M705.5 381.13v5.64M705.5 460.13v2.05M707.5 462.18v2.56M707.5 429.86v5.64M705.5 435.51v10.77M707.5 446.28v5.64M716.5 261.61v14.36M716.5 291.88v10.77M714.5 302.65v13.85M716.5 316.5v26.67M714.5 343.17v23.6M716.5 366.77v45.65M714.5 412.42v7.18M714.5 457.56v1.54M716.5 459.1v2.56M723.5 237.5v2.05M725.5 307.26v15.9M725.5 354.97v18.47M725.5 417.55v6.67M723.5 424.22v6.16M723.5 450.89v5.13M725.5 456.02v2.05M732.5 131.83v57.45M732.5 464.74v10.26M734.5 431.4v18.98M743.5 131.83v8.72M741.5 140.55v87.2M741.5 250.33v13.85M741.5 388.83v23.6M741.5 459.1v4.1M743.5 463.21v11.8M752.5 134.91v14.88M750.5 149.79v169.79M750.5 337.02v34.88M752.5 371.9v50.27M750.5 422.17v10.77M750.5 447.82v7.69M752.5 455.51v5.13M761.5 144.14v215.44M761.5 433.45v13.85" fill="none" stroke="#0000ff" stroke-width="1" stroke-opacity="0.083"/><path d="M465.19 131.5h315.56M472.5 143.5h89.44M465.19 146.5h27.56M537.19 146.5h77.62M666 145.5h102.38M776.81 146.5h3.94M471.94 152.5h125.44M636.19 151.5h29.81M711.56 150.5h36M766.12 151.5h7.88M465.19 163.5h6.75M611.44 163.5h41.62M774 163.5h6.75M648.56 166.5h30.38M723.94 165.5h37.69M768.94 166.5h7.88M465.19 169.5h35.44M586.12 169.5h57.38M779.62 169.5h1.12M465.19 172.5h7.31M542.25 173.5h25.31M640.12 172.5h32.06M707.62 171.5h58.5M774 172.5h6.75M474.75 184.5h94.5M597.94 184.5h16.88M636.75 184.5h8.44M662.06 184.5h3.38M669.94 184.5h2.81M674.44 183.5h1.69M687.94 183.5h3.94M698.62 183.5h24.75M765 183.5h8.44M668.25 186.5h5.62M715.5 186.5h51.75M523.12 190.5h27M565.31 190.5h9.56M595.69 190.5h46.69M649.12 190.5h5.06M657 190.5h2.81M660.94 189.5h1.69M666.56 189.5h3.94M688.5 189.5h6.75M699.75 189.5h11.25M770.06 189.5h9M693.56 192.5h1.69M708.19 192.5h37.69M763.31 192.5h9.56M573.75 202.5h6.75M597.94 202.5h18.56M640.12 202.5h2.25M651.94 202.5h4.5M663.75 202.5h5.62M465.19 204.5h40.5M554.06 205.5h27M594 205.5h7.31M618.19 205.5h4.5M626.62 204.5h6.19M638.44 204.5h1.12M640.12 204.5h4.5M645.19 205.5h1.12M669.94 205.5h2.81M676.69 204.5h21.38M700.31 204.5h1.12M707.62 204.5h18M771.75 204.5h9M654.19 209.5h2.81M663.19 209.5h1.69M465.19 210.5h10.12M498.38 210.5h48.94M553.5 211.5h7.88M566.44 211.5h6.75M577.12 210.5h4.5M594 210.5h3.38M600.19 211.5h3.38M608.06 212.5h9M621 211.5h8.44M631.12 210.5h.56M632.81 209.5h4.5M640.69 210.5h5.62M648.56 211.5h.56M649.69 212.5h2.81M656.44 212.5h6.19M668.25 211.5h2.81M673.88 210.5h4.5M695.81 210.5h26.44M745.31 209.5h20.81M778.5 210.5h2.25M548.44 222.5h6.75M570.38 222.5h6.19M597.94 222.5h5.06M608.62 223.5h3.38M617.62 223.5h1.12M621 222.5h1.69M627.19 223.5h19.12M651.38 222.5h9M675.56 222.5h6.75M697.5 222.5h7.88M542.25 225.5h14.06M569.25 225.5h26.44M615.94 225.5h3.94M653.06 225.5h5.06M659.81 224.5h9M673.31 225.5h3.38M703.69 225.5h6.75M752.06 224.5h15.19M627.75 229.5h2.81M633.94 230.5h7.31M644.06 229.5h2.81M681.75 229.5h2.81M693 229.5h3.94M469.69 230.5h55.12M551.25 230.5h21.94M577.12 231.5h3.38M583.88 232.5h5.62M602.44 232.5h2.25M606.38 231.5h.56M607.5 230.5h1.12M615.38 230.5h3.38M622.12 231.5h2.81M627.75 232.5h2.25M646.88 232.5h1.69M649.69 231.5h2.25M654.75 230.5h2.81M658.69 229.5h6.75M669.38 230.5h2.81M675 231.5h1.69M678.94 232.5h2.25M696.38 232.5h2.81M702.56 231.5h2.25M711 230.5h10.69M744.19 230.5h32.62M589.5 242.5h4.5M465.19 242.5h3.94M532.69 242.5h17.44M575.44 242.5h2.25M579.38 243.5h2.25M583.88 244.5h1.69M587.25 245.5h3.94M592.31 244.5h9M604.12 243.5h2.81M612 242.5h4.5M624.38 242.5h4.5M632.81 243.5h3.38M640.69 244.5h6.19M651.94 243.5h5.62M658.69 243.5h13.5M681.19 244.5h3.38M691.88 243.5h6.75M726.19 242.5h25.88M775.69 242.5h5.06M465.19 245.5h12.38M530.44 245.5h28.12M573.19 245.5h3.38M615.94 245.5h11.25M743.06 245.5h37.69M582.75 249.5h2.25M591.75 249.5h3.38M602.44 249.5h4.5M608.62 249.5h2.81M646.88 249.5h3.94M655.88 250.5h3.94M672.75 250.5h3.38M678.94 249.5h2.25M710.44 249.5h10.69M465.19 251.5h3.94M480.38 250.5h59.06M546.19 251.5h7.31M556.88 252.5h5.62M564.75 251.5h11.81M582.75 251.5h2.25M587.25 251.5h2.81M594 252.5h8.44M609.19 252.5h1.12M615.94 252.5h5.06M628.88 251.5h14.06M646.88 252.5h2.81M679.5 252.5h1.69M683.44 251.5h2.25M689.62 250.5h5.06M699.19 251.5h2.81M706.5 252.5h3.38M722.81 252.5h5.06M734.06 251.5h26.44M773.44 251.5h7.31M660.94 262.5h.56M671.06 262.5h2.81M468.56 262.5h10.12M542.81 262.5h4.5M550.69 263.5h3.38M559.69 263.5h3.94M569.25 264.5h1.69M572.06 263.5h1.12M586.12 262.5h5.06M599.06 262.5h3.38M603.56 262.5h3.38M609.19 263.5h1.69M613.69 264.5h2.25M619.31 265.5h1.69M625.5 265.5h.56M632.25 264.5h3.94M641.25 263.5h8.44M655.88 264.5h5.06M662.06 265.5h11.25M676.69 264.5h2.81M682.31 263.5h4.5M698.62 263.5h5.62M707.06 264.5h16.88M730.69 263.5h10.12M475.31 265.5h9.56M528.19 265.5h15.19M552.38 265.5h3.94M590.62 265.5h5.62M597.38 265.5h6.19M604.69 265.5h2.25M465.19 268.5h6.75M541.69 268.5h7.88M559.69 268.5h2.81M568.12 268.5h2.81M575.44 269.5h7.88M588.38 268.5h3.38M609.19 268.5h2.25M613.69 269.5h1.69M617.62 270.5h2.81M622.69 271.5h3.38M630.56 271.5h5.06M639 270.5h3.38M646.31 269.5h5.06M662.62 269.5h2.25M677.81 270.5h16.88M698.06 270.5h1.69M714.94 269.5h21.38M754.88 268.5h25.88M468.56 271.5h9.56M498.38 270.5h18.56M525.94 271.5h10.12M546.75 271.5h.56M547.88 270.5h1.69M551.25 270.5h5.62M560.81 271.5h2.25M563.62 271.5h6.19M572.06 272.5h5.06M584.44 272.5h4.5M592.88 271.5h6.75M600.75 270.5h2.81M607.5 271.5h2.81M612.56 272.5h2.25M649.69 272.5h4.5M664.31 272.5h3.38M715.5 272.5h36.56M614.81 281.5h1.12M617.06 281.5h4.5M623.25 282.5h11.81M642.94 281.5h5.62M672.75 281.5h5.06M682.31 282.5h9M693 283.5h5.06M702 282.5h3.94M712.12 281.5h1.69M465.19 283.5h3.38M477.56 282.5h9.56M514.69 282.5h7.88M531.56 283.5h2.25M543.38 282.5h.56M558.56 281.5h1.12M560.81 281.5h2.81M565.88 282.5h2.81M572.06 283.5h4.5M592.31 284.5h.56M594 283.5h6.19M605.25 284.5h4.5M610.31 284.5h3.38M615.38 284.5h2.81M633.94 284.5h32.62M680.06 285.5h5.62M703.69 285.5h4.5M712.69 284.5h3.38M757.69 283.5h23.06M482.62 285.5h33.75M542.25 285.5h1.69M549.56 285.5h6.19M556.88 284.5h2.25M561.94 285.5h2.81M661.5 288.5h3.38M695.81 288.5h5.06M471.94 288.5h8.44M519.19 288.5h11.81M561.94 288.5h4.5M587.81 289.5h3.38M594.56 289.5h2.81M600.19 290.5h3.38M609.75 291.5h2.25M613.69 290.5h6.75M623.81 289.5h3.38M632.81 288.5h5.62M643.5 289.5h2.25M648 290.5h2.25M651.94 291.5h2.81M664.31 291.5h9M678.94 290.5h16.31M697.5 291.5h3.94M708.19 290.5h10.69M749.25 289.5h15.19M477.56 291.5h7.31M507.38 291.5h21.94M539.44 290.5h14.06M556.31 291.5h2.81M585 291.5h6.75M630.56 291.5h7.31M563.06 301.5h6.19M595.69 301.5h1.69M600.75 301.5h4.5M608.62 302.5h2.81M615.38 301.5h2.81M640.12 301.5h2.25M644.06 302.5h2.25M648.56 303.5h2.25M654.75 304.5h7.31M668.81 303.5h2.25M673.31 302.5h2.81M679.5 301.5h19.69M701.44 302.5h13.5M737.44 301.5h13.5M469.12 303.5h8.44M484.88 302.5h20.25M519.19 302.5h7.31M534.94 301.5h7.31M543.94 302.5h1.12M546.19 303.5h7.31M558 304.5h12.38M573.19 303.5h3.94M587.25 303.5h2.81M592.31 304.5h2.25M596.25 304.5h6.75M614.81 304.5h3.38M622.12 303.5h6.19M633.38 304.5h2.25M747.56 304.5h15.19M636.19 308.5h2.25M641.81 309.5h7.31M650.81 309.5h7.88M662.62 308.5h2.25M693 308.5h1.12M465.19 309.5h7.31M480.38 308.5h32.62M537.75 308.5h10.12M549 309.5h.56M552.38 310.5h.56M560.81 309.5h5.62M572.06 308.5h9M583.88 309.5h1.69M590.06 309.5h5.06M597.38 310.5h7.88M610.88 309.5h10.12M625.5 309.5h.56M626.62 310.5h.56M629.44 311.5h2.81M659.25 311.5h3.38M664.88 310.5h2.81M669.38 310.5h9M681.19 311.5h4.5M701.44 311.5h10.12M712.12 310.5h.56M722.25 311.5h9.56M743.06 310.5h10.69M769.5 309.5h11.25M485.44 311.5h35.44M529.31 311.5h6.75M568.69 311.5h9M633.38 321.5h9.56M545.62 321.5h2.25M587.81 321.5h2.25M600.19 321.5h15.75M622.12 321.5h2.81M627.75 322.5h1.12M629.44 323.5h.56M630.56 324.5h10.69M644.62 323.5h2.81M650.25 322.5h2.81M655.88 321.5h3.38M666.56 321.5h3.38M672.19 322.5h2.25M676.69 323.5h2.81M682.88 324.5h11.81M699.19 323.5h7.88M708.19 322.5h9M730.69 322.5h12.38M759.38 321.5h12.94M465.19 324.5h4.5M478.12 323.5h9M532.12 323.5h5.62M543.38 324.5h6.75M552.94 323.5h3.38M558 323.5h2.81M564.75 322.5h.56M571.5 323.5h2.81M576.56 322.5h3.94M582.19 323.5h1.69M585.56 324.5h3.38M612 324.5h6.19M654.75 324.5h7.88M768.38 324.5h12.38M619.88 328.5h5.06M631.12 329.5h4.5M639 328.5h2.81M664.88 328.5h2.25M669.94 329.5h2.81M676.69 330.5h9.56M692.44 329.5h1.69M695.81 328.5h7.88M704.25 328.5h1.12M709.31 328.5h8.44M724.5 328.5h10.69M473.06 329.5h7.88M555.19 328.5h3.94M560.25 329.5h6.19M567 328.5h1.12M570.38 328.5h3.38M576.56 329.5h6.19M596.81 330.5h4.5M605.25 331.5h.56M606.38 330.5h3.94M613.12 331.5h2.25M638.44 331.5h2.25M642.94 330.5h2.81M654.75 330.5h2.25M659.25 331.5h2.25M694.69 331.5h6.75M703.69 331.5h6.19M732.94 331.5h10.69M763.31 330.5h10.69M558.56 331.5h1.12M564.75 331.5h.56M659.25 341.5h2.81M666 342.5h5.06M676.69 342.5h4.5M684 341.5h3.38M465.19 341.5h7.88M564.75 341.5h5.06M575.44 342.5h10.69M597.94 341.5h1.69M604.69 341.5h1.69M608.62 342.5h3.38M615.94 343.5h16.88M634.5 342.5h1.69M638.44 341.5h2.81M650.81 341.5h1.69M653.62 342.5h1.12M657 343.5h1.12M658.69 344.5h.56M684.56 344.5h3.38M690.19 343.5h1.12M692.44 342.5h2.81M705.94 343.5h6.19M725.06 343.5h10.69M756 342.5h9.56M775.69 341.5h5.06M470.25 344.5h8.44M493.88 343.5h18M533.25 343.5h9.56M561.38 343.5h2.81M564.75 344.5h1.69M596.81 344.5h.56M603 344.5h3.38M576 348.5h9.56M591.75 348.5h1.12M623.25 348.5h15.19M648.56 349.5h5.06M661.5 350.5h9M678.38 349.5h10.69M701.44 349.5h23.62M750.94 348.5h11.81M465.19 350.5h7.88M481.5 349.5h28.69M521.44 349.5h25.88M566.44 349.5h.56M567.56 350.5h1.69M574.88 351.5h4.5M589.5 351.5h.56M599.06 350.5h3.94M614.81 350.5h4.5M623.81 351.5h2.81M629.44 351.5h1.12M761.62 351.5h6.19M777.38 350.5h3.38M637.31 361.5h3.38M644.62 362.5h12.38M660.94 361.5h2.81M693 361.5h3.94M712.12 361.5h5.06M473.62 361.5h7.88M533.81 361.5h21.94M570.38 361.5h9.56M585.56 361.5h1.12M593.44 362.5h27.56M624.94 362.5h3.38M630.56 363.5h2.81M636.75 364.5h3.38M662.62 364.5h2.81M667.69 363.5h2.81M678.94 363.5h1.69M681.75 362.5h1.69M686.25 363.5h2.25M690.75 364.5h3.38M716.62 364.5h7.31M752.62 363.5h10.69M769.5 362.5h8.44M479.25 364.5h19.12M529.31 364.5h11.81M561.94 364.5h10.12M573.19 364.5h16.31M648 367.5h12.94M695.81 367.5h6.75M709.31 367.5h6.75M467.44 367.5h9M552.94 367.5h13.5M596.25 367.5h2.81M602.44 368.5h2.81M608.62 369.5h5.06M617.62 370.5h2.81M621 369.5h.56M629.44 368.5h7.88M643.5 369.5h5.06M654.75 370.5h11.25M671.06 369.5h9.56M681.19 369.5h5.06M693 370.5h7.31M713.25 370.5h9.56M741.94 369.5h19.69M766.69 368.5h6.19M473.62 370.5h7.88M550.12 370.5h5.62M568.69 370.5h6.19M578.25 369.5h3.38M589.5 369.5h3.38M595.69 370.5h2.25M603 380.5h2.25M607.5 381.5h1.69M611.44 382.5h2.81M622.69 381.5h3.38M627.75 380.5h2.25M654.19 380.5h2.81M658.69 381.5h1.69M663.19 381.5h3.38M668.81 382.5h2.25M673.88 382.5h13.5M700.31 381.5h12.94M732.38 381.5h18.56M763.31 380.5h5.06M465.19 382.5h7.88M480.94 381.5h50.06M551.25 381.5h4.5M559.69 382.5h14.06M579.94 381.5h2.81M591.19 381.5h3.38M597.38 382.5h2.25M601.88 383.5h2.81M606.38 384.5h2.25M613.69 384.5h4.5M622.12 384.5h3.94M628.88 383.5h3.94M638.44 382.5h6.75M651.38 383.5h2.81M656.44 384.5h2.25M659.81 384.5h5.06M748.12 384.5h14.62M767.25 383.5h5.62M779.62 382.5h1.12M491.62 384.5h21.94M525.38 384.5h12.38M547.88 384.5h6.75M666 387.5h2.81M672.75 387.5h.56M678.94 388.5h9M696.38 387.5h11.81M713.25 387.5h31.5M465.19 388.5h2.25M475.88 387.5h6.75M559.69 387.5h19.12M592.31 388.5h9M606.94 389.5h1.12M609.19 388.5h2.25M613.69 388.5h11.25M634.5 389.5h7.88M648.56 390.5h5.62M655.88 389.5h5.62M664.31 390.5h2.81M672.19 390.5h2.81M704.81 390.5h18M740.25 390.5h19.69M765.56 389.5h4.5M775.69 388.5h5.06M480.38 390.5h44.44M556.31 390.5h22.5M609.19 390.5h5.06M585 400.5h18M631.12 400.5h1.69M634.5 401.5h1.12M637.31 402.5h1.12M640.12 403.5h3.38M644.62 402.5h1.69M661.5 401.5h1.12M663.75 400.5h6.75M676.12 401.5h5.06M685.12 402.5h60.75M762.75 401.5h4.5M771.19 400.5h5.06M472.5 402.5h7.31M495 401.5h52.88M549 401.5h13.5M572.62 401.5h7.31M583.88 402.5h.56M585 403.5h2.81M590.06 403.5h12.94M603 402.5h.56M606.94 401.5h6.19M619.31 401.5h3.94M625.5 402.5h2.25M630 403.5h1.12M662.62 403.5h2.25M774.56 403.5h5.06M642.94 407.5h10.69M681.19 407.5h7.88M757.69 407.5h7.31M467.44 408.5h7.31M480.94 407.5h16.88M587.25 407.5h.56M589.5 408.5h3.94M600.75 407.5h20.25M624.38 408.5h1.69M627.75 409.5h5.06M637.31 409.5h2.25M643.5 410.5h3.38M672.75 410.5h11.81M763.88 410.5h3.94M772.31 409.5h4.5M484.31 410.5h27.56M565.31 409.5h11.81M585 409.5h2.81M590.06 410.5h1.12M599.06 410.5h1.12M602.44 410.5h9.56M465.19 420.5h2.25M656.44 420.5h3.38M663.75 421.5h5.62M698.62 422.5h13.5M755.44 422.5h9.56M768.94 421.5h3.94M776.81 420.5h3.94M465.19 423.5h6.75M478.12 422.5h5.06M496.12 421.5h18.56M533.25 420.5h24.75M601.88 420.5h3.38M609.19 421.5h3.94M618.19 421.5h2.25M622.69 422.5h11.25M647.44 422.5h5.06M655.88 423.5h3.38M780.19 423.5h.56M536.06 423.5h16.31M590.62 422.5h8.44M602.44 423.5h4.5M681.19 427.5h18M714.38 428.5h47.81M766.12 427.5h3.94M465.19 429.5h2.25M474.19 428.5h5.06M484.31 427.5h10.69M644.62 427.5h5.06M654.19 428.5h3.38M662.06 429.5h5.62M678.38 430.5h15.19M768.94 430.5h3.94M777.38 429.5h3.38M487.12 430.5h15.19M515.81 429.5h11.81M540 428.5h11.81M605.25 428.5h6.19M618.75 429.5h12.94M641.81 430.5h5.62M569.25 430.5h15.19M467.44 440.5h6.19M668.25 440.5h7.31M683.44 441.5h7.88M702 442.5h14.62M746.44 443.5h14.06M765 442.5h4.5M773.44 441.5h3.94M471.94 443.5h5.06M482.06 442.5h4.5M497.81 441.5h11.81M519.75 440.5h10.12M631.12 440.5h5.06M641.25 441.5h5.06M651.94 442.5h6.75M666.56 443.5h7.31M465.19 446.5h4.5M525.94 443.5h9M544.5 442.5h10.12M567.56 441.5h33.75M614.25 442.5h8.44M628.88 443.5h5.62M678.38 446.5h6.75M693 447.5h10.12M716.06 448.5h20.81M762.75 448.5h3.94M770.62 447.5h4.5M779.06 446.5h1.69M467.44 449.5h6.19M478.69 448.5h4.5M488.81 447.5h12.94M512.44 446.5h10.12M636.75 446.5h5.06M647.44 447.5h6.19M660.38 448.5h7.31M675 449.5h6.75M689.06 450.5h9M773.44 450.5h4.5M498.94 450.5h11.25M520.31 449.5h10.12M540 448.5h10.12M561.94 447.5h46.69M618.19 448.5h7.88M632.25 449.5h6.19M644.06 450.5h6.19M465.19 461.5h2.81M474.19 460.5h6.75M661.5 460.5h10.69M683.44 461.5h12.94M712.12 462.5h25.31M770.06 462.5h3.94M777.94 461.5h2.81M491.62 463.5h27M542.25 462.5h36M596.25 462.5h27.56M641.25 463.5h15.19M470.25 466.5h40.5M646.31 466.5h24.19M696.94 467.5h44.44M775.12 467.5h3.94M567 469.5h36M469.5 131.83v294.44M469.5 451.92v23.08M475.5 423.19v30.78M479.5 431.4v14.88M483.5 422.17v6.16M483.5 448.33v5.64M484.5 137.99v10.26M484.5 307.26v43.6M484.5 411.4v5.64M487.5 426.79v6.67M487.5 443.2v6.16M484.5 456.54v4.62M488.5 151.84v123.62M488.5 419.09v4.62M488.5 452.43v3.08M492.5 145.68v162.1M492.5 416.53v4.62M492.5 453.97v3.59M493.5 131.83v7.69M493.5 332.91v29.24M493.5 407.81v6.16M496.5 422.68v4.62M496.5 449.36v3.59M493.5 460.13v14.88M497.5 143.12v9.23M497.5 239.04v71.81M497.5 416.01v4.1M497.5 455v3.59M501.5 137.47v9.23M501.5 286.23v41.55M501.5 413.45v4.62M502.5 430.38v15.39M501.5 457.05v4.1M505.5 149.79v116.96M502.5 347.79v24.62M502.5 404.21v6.67M505.5 419.6v4.1M505.5 452.43v3.08M502.5 465.77v7.69M506.5 135.42v8.72M506.5 306.75v13.85M506.5 413.45v4.1M506.5 457.56v4.62M510.5 131.83v7.18M510.5 314.45v11.8M510.5 341.63v11.8M510.5 410.88v4.62M511.5 426.79v4.62M511.5 444.74v4.62M510.5 460.13v14.88M514.5 142.09v8.72M514.5 247.25v63.61M511.5 362.15v16.41M511.5 397.03v10.77M514.5 417.04v3.59M515.5 433.97v7.69M514.5 454.49v3.59M515.5 131.83v5.13M515.5 315.47v9.23M515.5 343.69v10.26M515.5 410.88v4.1M519.5 430.38v15.39M515.5 460.64v14.36M519.5 321.63v38.47M519.5 407.81v5.13M520.5 424.22v3.59M520.5 448.33v3.59M519.5 465.26v8.21M523.5 135.42v8.21M523.5 284.69v35.91M520.5 365.23v38.47M523.5 414.99v3.59M524.5 429.86v15.9M523.5 457.05v4.62M524.5 334.45v11.8M524.5 407.81v5.13M528.5 427.3v5.13M528.5 443.2v5.13M529.5 149.79v90.79M529.5 267.25v12.31M528.5 340.09v8.21M528.5 404.73v6.16M529.5 422.17v3.08M529.5 450.38v3.08M532.5 131.83v5.13M532.5 287.77v3.59M532.5 307.78v4.62M532.5 333.94v4.1M529.5 349.84v9.23M529.5 384.21v16.41M532.5 412.94v4.1M533.5 427.3v5.13M533.5 442.69v5.13M532.5 459.61v15.39M537.5 267.25v10.77M533.5 291.36v5.64M533.5 301.11v5.64M533.5 340.09v4.1M533.5 366.77v10.77M533.5 405.75v5.13M537.5 425.25v4.1M537.5 445.25v4.62M538.5 143.12v8.21M538.5 232.37v28.73M538.5 286.23v2.56M537.5 300.08v5.64M538.5 317.52v14.36M537.5 341.63v4.62M537.5 360.1v23.6M537.5 403.19v5.64M538.5 420.12v3.59M541.5 433.45v7.18M538.5 451.41v3.59M542.5 264.69v5.13M542.5 281.62v2.05M541.5 291.36v2.05M541.5 295.47v17.44M541.5 335.99v3.59M538.5 387.29v12.82M541.5 411.4v3.59M542.5 425.76v4.62M542.5 443.71v5.13M541.5 465.77v5.13M546.5 149.27v67.2M546.5 243.66v22.57M546.5 273.41v1.03M542.5 290.85v9.23M542.5 342.66v21.03M542.5 372.92v8.21M542.5 404.73v4.62M546.5 424.22v4.1M546.5 445.76v4.62M547.5 136.96v7.69M547.5 220.57v11.29M547.5 270.33v1.03M547.5 279.56v7.18M547.5 288.8v6.16M547.5 308.8v2.56M546.5 376v7.69M546.5 401.14v6.16M547.5 419.09v3.59M550.5 432.94v7.69M547.5 451.92v5.13M551.5 147.73v40.52M551.5 207.75v7.69M551.5 234.42v6.67M551.5 254.94v1.54M551.5 262.12v3.59M550.5 270.33v1.03M551.5 281.1v2.56M551.5 290.34v6.67M550.5 306.24v4.62M550.5 319.58v4.1M550.5 324.19v46.17M547.5 389.85v3.59M550.5 409.34v4.62M551.5 425.25v5.13M551.5 443.2v6.16M555.5 143.12v7.18M555.5 212.88v6.67M555.5 229.81v5.13M555.5 260.59v1.54M555.5 278.54v2.05M555.5 286.23v2.56M555.5 302.14v3.08M551.5 312.91v2.56M551.5 325.73v4.62M551.5 372.41v9.23M551.5 399.09v7.69M555.5 424.22v4.62M555.5 445.25v5.64M556.5 131.83v6.67M559.5 183.64v27.19M559.5 235.45v5.13M559.5 254.43v2.56M556.5 258.53v1.03M556.5 274.95v2.05M559.5 287.26v2.56M559.5 301.11v3.08M556.5 308.8v1.54M555.5 314.45v2.05M555.5 318.55v2.56M555.5 374.46v27.7M556.5 419.09v4.1M556.5 452.43v8.21M556.5 471.93v3.08M560.5 141.06v7.69M560.5 216.47v14.36M560.5 252.89v2.05M559.5 268.28v.51M560.5 282.64v2.05M560.5 306.24v2.05M559.5 313.42v1.54M556.5 318.55v3.08M556.5 323.68v1.03M559.5 327.78v2.05M559.5 359.59v7.18M559.5 407.29v6.67M560.5 426.79v7.18M560.5 440.64v7.69M564.5 136.96v7.18M564.5 253.92v4.1M564.5 281.62v1.54M565.5 295.47v2.05M564.5 307.26v2.05M560.5 318.55v3.08M560.5 330.86v1.03M564.5 339.07v9.23M560.5 367.79v12.31M564.5 425.76v6.16M564.5 442.69v7.69M565.5 131.83v.51M568.5 147.22v61.04M568.5 220.57v11.8M568.5 246.22v7.69M565.5 270.33v1.03M565.5 277.51v2.05M568.5 285.21v4.62M568.5 302.14v3.08M565.5 310.34v2.56M565.5 346.25v8.21M565.5 420.63v4.1M565.5 452.43v22.57M569.5 135.42v7.18M569.5 265.2v1.54M569.5 280.08v6.67M569.5 304.7v4.1M568.5 342.15v4.1M568.5 351.89v3.08M568.5 360.61v8.72M568.5 372.92v9.23M568.5 390.36v12.31M568.5 405.24v9.23M569.5 429.35v16.41M573.5 131.83v6.16M574.5 213.91v12.82M573.5 262.64v9.75M573.5 273.92v47.71M573.5 323.17v1.54M569.5 348.81v2.05M569.5 359.07v2.56M573.5 427.81v18.98M573.5 472.44v2.56M577.5 141.06v7.18M577.5 187.74v15.9M577.5 235.45v15.39M577.5 257.51v7.69M577.5 270.84v5.64M574.5 289.31v7.18M577.5 316.5v4.62M574.5 339.07v4.62M573.5 352.41v2.05M573.5 368.31v1.54M574.5 375.49v2.05M574.5 385.75v4.1M574.5 420.63v5.64M574.5 449.36v15.39M578.5 131.83v4.62M578.5 280.08v3.08M578.5 305.73v5.64M578.5 320.6v4.62M578.5 331.37v6.16M577.5 349.84v3.59M577.5 378.57v3.08M577.5 398.57v15.39M578.5 470.9v4.1M582.5 131.83v.51M583.5 155.94v26.16M583.5 207.75v7.18M583.5 221.09v7.18M583.5 249.81v.51M583.5 256.99v3.08M583.5 268.28v5.13M582.5 281.62v3.08M582.5 303.67v5.64M582.5 318.55v1.03M582.5 334.96v6.16M578.5 360.1v6.67M582.5 464.23v10.77M586.5 135.42v6.67M586.5 235.96v6.67M587.5 258.53v7.69M586.5 278.03v2.56M583.5 286.75v13.34M586.5 309.32v5.64M583.5 346.76v7.69M583.5 356v1.54M582.5 393.44v3.08M583.5 422.17v35.91M591.5 254.94v13.34M587.5 285.72v2.05M587.5 293.41v11.8M587.5 311.88v.51M587.5 318.55v29.24M587.5 353.43v1.03M586.5 363.18v5.13M586.5 377.54v18.98M586.5 403.7v1.54M587.5 464.23v8.72M592.5 147.73v25.14M592.5 200.57v20.01M592.5 239.55v3.08M592.5 249.81v3.08M592.5 268.79v10.77M591.5 290.34v1.54M591.5 292.9v3.59M591.5 309.32v3.08M591.5 315.47v4.62M591.5 335.48v6.16M591.5 350.87v.51M587.5 371.39v8.72M591.5 460.13v8.21M595.5 131.83v4.62M596.5 181.59v18.47M595.5 243.66v.51M596.5 266.23v7.18M595.5 281.62v1.54M595.5 294.95v4.1M595.5 305.21v1.54M592.5 319.58v5.64M592.5 331.37v5.13M595.5 341.12v2.56M595.5 345.74v1.03M595.5 354.46v2.05M592.5 362.66v2.05M591.5 375.49v3.59M592.5 416.01v7.18M592.5 433.45v23.08M595.5 471.93v3.08M600.5 172.87v13.85M600.5 197.49v10.26M600.5 259.05v4.1M600.5 268.28v3.08M596.5 306.75v1.54M596.5 311.88v4.62M596.5 338.04v2.05M596.5 342.66v5.13M596.5 361.13v2.05M595.5 370.36v3.08M595.5 386.26v6.16M595.5 410.37v2.05M595.5 418.06v1.03M596.5 460.64v7.18M601.5 141.58v6.67M601.5 220.57v5.64M601.5 234.42v1.03M601.5 241.61v13.85M601.5 265.71v1.54M601.5 289.31v10.26M600.5 315.99v3.08M600.5 337.53v2.05M600.5 344.2v2.05M600.5 364.2v2.56M600.5 403.7v3.59M596.5 419.6v3.08M600.5 458.08v6.16M605.5 151.32v12.31M605.5 168.25v18.98M605.5 198v30.78M605.5 229.81v3.08M605.5 256.48v1.03M605.5 287.26v6.67M604.5 300.6v.51M604.5 312.39v4.1M601.5 323.17v3.59M601.5 329.84v7.69M601.5 342.66v2.05M604.5 349.84v14.36M601.5 370.87v3.08M601.5 394.47v2.56M601.5 403.7v2.05M600.5 412.94v9.75M601.5 450.38v5.64M604.5 467.31v6.16M609.5 146.71v33.86M609.5 230.32v.51M609.5 272.38v6.16M609.5 282.64v3.59M605.5 322.65v7.18M604.5 335.48v1.54M604.5 337.53v4.1M605.5 349.33v3.59M605.5 369.85v3.59M604.5 399.09v2.05M604.5 403.7v33.86M605.5 459.1v5.13M610.5 136.45v6.16M613.5 212.88v8.21M613.5 227.24v.51M610.5 248.79v2.05M610.5 261.61v3.59M610.5 278.03v2.56M610.5 290.34v1.54M610.5 292.39v4.1M610.5 305.73v16.93M609.5 328.3v1.03M609.5 352.41v3.08M609.5 376v4.1M605.5 393.96v4.1M609.5 457.05v4.62M614.5 145.17v6.16M614.5 175.43v30.78M614.5 241.09v2.05M613.5 248.27v6.16M614.5 265.71v3.08M614.5 281.1v2.05M613.5 288.8v2.05M613.5 298.03v2.56M614.5 312.91v8.72M613.5 323.68v2.05M610.5 330.35v4.62M610.5 351.89v2.56M613.5 360.61v5.13M613.5 380.11v3.08M610.5 386.26v1.03M610.5 452.43v3.59M613.5 464.23v4.62M618.5 141.58v6.16M619.5 219.55v1.03M618.5 248.27v13.85M618.5 271.87v2.05M614.5 291.36v3.59M618.5 309.32v2.05M618.5 318.04v1.03M614.5 332.91v2.05M613.5 341.12v9.23M614.5 358.05v3.08M614.5 380.62v1.03M613.5 386.26v9.23M613.5 421.14v5.13M613.5 441.66v7.18M614.5 458.08v3.59M619.5 131.83v6.16M622.5 149.79v36.42M622.5 210.31v4.1M622.5 220.06v4.62M622.5 235.45v1.54M619.5 241.09v4.1M619.5 253.92v5.13M619.5 265.71v1.54M619.5 271.87v3.59M622.5 279.05v2.56M619.5 288.8v2.56M619.5 304.7v2.56M619.5 326.76v3.08M618.5 335.99v2.05M618.5 359.07v2.56M619.5 368.31v3.59M618.5 377.03v3.59M614.5 427.3v14.88M618.5 457.05v3.08M619.5 473.46v1.54M623.5 140.04v6.16M623.5 201.08v7.69M623.5 217.5v3.08M623.5 245.2v2.56M623.5 308.8v2.05M623.5 314.96v1.03M623.5 322.65v4.1M622.5 335.48v2.05M619.5 341.63v2.05M619.5 356v2.56M622.5 362.15v2.56M622.5 367.79v1.03M619.5 386.26v3.08M619.5 400.62v10.77M619.5 417.04v1.54M618.5 428.32v13.85M619.5 452.95v3.08M622.5 462.18v3.59M627.5 136.45v6.16M627.5 214.93v5.64M628.5 232.37v8.72M627.5 252.89v4.62M623.5 295.98v.51M627.5 312.91v3.59M627.5 329.32v2.56M623.5 342.15v2.05M623.5 358.56v3.08M623.5 363.18v1.03M623.5 373.95v10.26M623.5 412.42v1.03M622.5 418.06v7.69M622.5 446.79v3.59M623.5 457.56v3.08M628.5 131.83v1.03M631.5 145.17v6.67M631.5 196.98v5.64M631.5 206.21v5.64M628.5 212.88v4.1M631.5 224.16v4.1M631.5 249.81v3.08M628.5 260.59v14.36M628.5 290.85v2.05M627.5 300.6v12.82M628.5 320.09v2.05M631.5 327.27v6.16M628.5 340.61v3.08M627.5 354.46v3.59M627.5 372.92v14.36M627.5 406.78v7.18M623.5 426.79v4.62M623.5 439.61v6.16M627.5 456.54v3.08M628.5 469.87v5.13M632.5 135.42v6.16M632.5 208.78v1.03M632.5 219.55v5.13M636.5 238.53v5.13M632.5 254.94v3.08M632.5 278.03v3.59M632.5 289.82v3.08M631.5 301.11v3.08M628.5 310.86v6.67M631.5 325.22v2.05M632.5 332.91v2.05M632.5 340.09v2.05M631.5 348.3v1.54M628.5 353.43v1.03M628.5 369.33v8.21M628.5 411.4v1.03M627.5 427.81v16.93M628.5 453.46v2.56M631.5 461.15v3.08M636.5 131.83v6.16M637.5 182.61v13.34M637.5 199.54v2.05M636.5 206.72v2.05M636.5 216.98v7.69M637.5 234.94v3.08M637.5 246.74v2.56M636.5 256.48v3.59M636.5 275.46v3.08M636.5 293.41v2.56M632.5 306.24v4.1M632.5 324.19v2.56M636.5 334.45v1.54M636.5 339.07v2.05M632.5 351.38v2.56M632.5 382.16v26.67M631.5 420.63v4.1M631.5 448.33v2.56M632.5 457.56v2.05M636.5 473.98v1.03M640.5 140.55v6.67M640.5 203.13v1.54M640.5 228.27v4.1M640.5 252.89v2.56M637.5 263.66v7.69M640.5 279.05v3.08M640.5 291.36v2.56M637.5 298.03v2.56M636.5 307.78v3.59M636.5 321.63v3.08M637.5 329.32v1.54M640.5 335.48v7.18M637.5 349.33v2.05M636.5 357.54v2.05M636.5 378.57v4.62M636.5 406.27v1.54M632.5 426.27v8.72M632.5 438.07v8.72M636.5 456.54v2.05M637.5 466.8v4.1M641.5 131.83v5.13M645.5 196.46v2.56M641.5 218.52v7.18M641.5 258.53v6.67M641.5 269.31v6.67M641.5 295.98v2.56M640.5 305.21v2.56M637.5 314.96v6.16M640.5 325.73v1.54M641.5 331.89v2.56M641.5 345.22v3.08M640.5 355.48v2.05M637.5 362.15v3.59M637.5 370.36v4.1M640.5 384.21v12.82M640.5 400.11v3.08M637.5 406.27v.51M636.5 429.35v15.39M637.5 453.97v2.05M640.5 460.13v2.56M641.5 472.95v2.05M645.5 131.83v1.03M646.5 184.15v8.72M646.5 198v2.56M646.5 208.78v1.54M646.5 214.42v2.56M645.5 298.03v2.56M641.5 311.88v4.62M641.5 321.11v3.08M645.5 331.89v3.59M645.5 343.69v4.62M641.5 360.1v3.08M641.5 372.92v4.62M641.5 403.19v.51M640.5 419.6v6.67M640.5 448.84v2.56M641.5 457.05v2.05M645.5 470.39v4.62M649.5 135.42v6.67M649.5 223.14v4.62M649.5 240.58v6.67M649.5 263.66v23.08M649.5 287.77v8.72M646.5 304.19v3.59M646.5 329.84v4.62M646.5 345.22v5.64M645.5 365.74v2.56M645.5 400.62v1.54M641.5 429.86v17.44M645.5 456.02v2.05M646.5 465.26v3.08M654.5 200.57v4.62M654.5 214.42v1.03M650.5 228.78v15.39M650.5 298.54v7.69M649.5 357.02v12.82M649.5 396.01v1.03M646.5 400.11v1.03M646.5 407.29v2.05M645.5 432.94v12.82M646.5 453.97v1.54M649.5 459.1v2.05M650.5 469.36v4.62M655.5 147.73v26.67M655.5 188.26v4.1M655.5 195.44v3.08M658.5 206.72v3.59M658.5 210.83v2.56M658.5 218.52v1.54M655.5 223.65v1.54M655.5 251.35v3.59M655.5 264.18v3.08M654.5 279.05v17.44M654.5 312.39v4.62M650.5 394.98v1.03M649.5 425.25v4.62M649.5 448.84v3.08M650.5 456.54v1.54M654.5 467.31v3.59M658.5 131.83v5.13M659.5 200.57v4.1M659.5 219.55v2.56M658.5 230.83v3.08M658.5 236.99v4.62M659.5 252.89v2.56M659.5 265.2v2.56M658.5 271.87v2.05M655.5 282.13v8.21M658.5 301.11v4.62M658.5 312.91v3.59M655.5 321.11v2.56M654.5 337.02v1.54M655.5 362.66v6.16M655.5 377.03v11.29M654.5 392.42v1.03M650.5 431.91v15.39M654.5 455.51v2.05M655.5 463.21v2.56M658.5 472.95v2.05M663.5 200.06v5.64M663.5 206.72v8.21M659.5 225.19v2.56M659.5 246.22v3.59M659.5 275.46v2.05M659.5 291.88v2.56M659.5 319.06v2.05M658.5 327.27v3.08M658.5 339.07v7.69M659.5 361.13v14.88M659.5 380.11v1.54M658.5 387.29v1.54M658.5 402.16v3.08M655.5 416.53v5.64M654.5 433.97v11.29M655.5 453.46v1.54M658.5 458.08v2.05M659.5 466.8v3.59M664.5 143.63v7.18M664.5 170.3v17.95M664.5 193.39v5.64M664.5 221.09v2.56M664.5 256.48v5.13M663.5 277.51v4.62M663.5 287.77v4.1M664.5 299.57v2.56M664.5 313.42v1.54M663.5 320.09v2.05M659.5 332.4v2.05M659.5 346.25v2.05M663.5 358.56v3.59M663.5 377.03v4.62M659.5 403.19v12.31M658.5 427.81v3.59M658.5 447.3v3.59M659.5 456.02v1.54M663.5 465.26v3.08M668.5 209.29v9.75M667.5 266.74v1.54M664.5 271.36v2.05M664.5 278.03v3.08M664.5 289.82v1.03M664.5 293.93v3.08M667.5 302.65v2.05M668.5 309.83v3.08M667.5 318.55v1.54M664.5 325.22v3.08M663.5 337.53v12.31M664.5 371.39v6.67M664.5 378.57v1.03M664.5 393.96v4.1M663.5 414.47v4.62M659.5 433.45v11.29M663.5 455v1.54M664.5 461.67v2.05M667.5 469.36v4.62M672.5 151.32v32.83M668.5 269.82v2.05M668.5 292.9v2.56M668.5 323.68v3.08M667.5 337.02v4.1M667.5 365.74v4.1M667.5 382.16v3.08M667.5 397.55v2.56M667.5 409.34v4.62M664.5 421.14v3.08M664.5 452.95v1.54M667.5 457.05v2.05M668.5 464.74v2.56M673.5 137.99v8.72M673.5 193.39v11.29M673.5 208.78v10.26M673.5 252.38v6.16M672.5 271.36v17.95M672.5 311.88v6.16M672.5 346.76v9.23M668.5 371.39v5.64M668.5 378.57v1.03M668.5 416.53v3.08M667.5 429.35v6.16M667.5 441.66v6.16M668.5 455v1.54M672.5 463.21v2.56M677.5 161.07v18.47M677.5 181.08v1.03M677.5 185.69v2.05M677.5 223.65v6.16M677.5 241.09v6.16M676.5 262.12v6.67M676.5 282.64v10.26M676.5 305.21v4.62M673.5 314.45v2.05M673.5 329.84v4.62M676.5 346.76v4.1M673.5 357.54v2.56M673.5 392.93v1.54M673.5 405.24v3.59M672.5 418.06v3.08M672.5 453.97v1.54M673.5 460.13v2.05M676.5 466.8v3.59M681.5 146.71v26.67M681.5 181.59v12.31M681.5 221.6v4.62M681.5 243.66v3.59M677.5 305.73v5.64M677.5 331.89v5.13M677.5 353.94v2.05M676.5 373.95v5.13M676.5 385.75v2.05M677.5 393.44v11.29M676.5 414.47v2.56M673.5 423.19v4.1M673.5 449.87v3.59M676.5 456.02v1.54M677.5 462.69v2.56M682.5 131.83v9.75M682.5 196.98v6.16M682.5 211.85v6.67M685.5 232.37v4.62M682.5 246.74v3.59M682.5 278.03v7.18M681.5 301.62v6.16M681.5 325.22v5.64M681.5 358.56v2.56M677.5 370.36v2.05M677.5 379.59v2.56M681.5 390.88v4.1M681.5 402.16v4.62M677.5 419.6v3.08M677.5 453.97v1.03M681.5 461.67v2.05M682.5 473.98v1.03M686.5 146.71v27.7M686.5 178v15.9M686.5 221.09v20.01M685.5 292.39v3.08M682.5 305.73v11.8M685.5 330.86v5.64M685.5 355.48v1.54M682.5 359.59v1.03M681.5 368.82v2.05M682.5 385.24v4.1M682.5 408.32v3.59M681.5 422.17v4.1M681.5 451.41v3.08M682.5 458.59v2.05M685.5 464.23v3.08M690.5 140.55v30.26M690.5 192.36v8.21M690.5 212.88v25.65M690.5 266.23v6.67M690.5 284.18v2.05M686.5 294.44v3.59M686.5 317.01v7.18M686.5 354.46v1.03M686.5 392.42v12.82M685.5 418.58v3.59M682.5 430.89v17.44M685.5 455v1.03M686.5 461.15v2.05M691.5 131.83v2.05M691.5 176.97v5.13M694.5 186.21v9.75M691.5 235.45v5.64M691.5 254.43v4.62M694.5 268.79v4.1M694.5 277v1.54M691.5 288.29v1.03M690.5 294.44v4.1M690.5 305.73v3.59M691.5 325.22v9.75M690.5 346.76v4.1M690.5 356.51v21.03M690.5 387.29v20.52M686.5 426.27v4.62M686.5 449.36v3.59M690.5 459.61v2.05M691.5 469.87v5.13M695.5 139.53v39.5M695.5 190.82v1.54M695.5 209.29v18.47M695.5 259.05v2.56M695.5 275.46v2.05M694.5 292.9v2.05M694.5 305.73v2.56M694.5 329.32v2.56M691.5 337.02v5.64M691.5 348.81v4.62M694.5 359.59v15.39M691.5 412.42v5.64M690.5 430.89v6.16M690.5 444.74v5.13M691.5 457.05v1.54M694.5 462.18v2.05M699.5 131.83v14.88M699.5 180.05v7.69M699.5 197.49v1.54M699.5 227.76v3.59M699.5 253.92v2.56M699.5 272.38v7.18M695.5 288.8v1.54M695.5 307.26v6.16M695.5 327.27v3.08M695.5 345.74v.51M695.5 352.41v4.1M695.5 383.7v7.69M695.5 402.68v7.69M694.5 426.27v4.1M694.5 450.89v3.59M695.5 459.1v1.54M699.5 473.98v1.03M703.5 213.91v15.9M700.5 281.62v3.08M699.5 290.34v2.05M699.5 296.49v1.54M699.5 303.67v1.03M700.5 312.39v14.36M699.5 337.53v11.29M699.5 350.35v4.62M700.5 366.26v8.21M699.5 388.31v29.24M695.5 436.02v9.75M699.5 457.56v2.05M700.5 466.28v3.59M704.5 131.83v15.9M704.5 168.25v22.57M704.5 198.52v5.13M704.5 272.38v3.08M703.5 290.34v3.59M703.5 303.16v2.05M704.5 316.5v9.23M703.5 333.43v2.56M700.5 340.61v2.05M700.5 347.28v2.56M703.5 357.02v3.08M703.5 382.67v4.62M700.5 422.17v4.1M700.5 455v1.54M703.5 459.61v2.05M704.5 471.93v3.08M708.5 131.83v4.1M708.5 214.42v7.69M708.5 284.18v.51M708.5 309.32v3.08M708.5 320.09v2.56M704.5 329.84v1.54M704.5 350.87v4.1M704.5 416.01v5.64M703.5 435.51v10.77M704.5 456.54v2.05M708.5 468.34v6.67M712.5 150.3v6.67M709.5 258.53v23.6M709.5 315.47v1.54M708.5 333.43v16.93M709.5 366.77v11.8M708.5 421.14v4.1M708.5 455.51v1.54M709.5 462.69v3.08M713.5 206.72v22.06M713.5 244.68v8.72M713.5 293.41v3.59M713.5 300.6v5.13M712.5 310.86v8.21M712.5 336.5v22.57M712.5 413.45v6.67M709.5 429.86v6.16M709.5 446.28v5.64M712.5 457.05v2.05M713.5 466.8v7.18M717.5 250.84v5.13M713.5 424.73v5.13M713.5 451.92v3.59M717.5 464.23v3.59M721.5 131.83v67.2M721.5 227.24v20.52M718.5 258.53v6.16M718.5 271.36v6.67M718.5 297.01v3.59M718.5 324.19v23.08M718.5 375.49v34.88M717.5 429.86v7.69M717.5 444.74v6.67M718.5 459.61v2.05M721.5 470.39v4.62M722.5 213.91v4.1M722.5 250.84v5.64M722.5 280.08v18.98M721.5 424.22v6.16M721.5 451.41v4.62M722.5 462.69v3.59M726.5 254.43v7.18M726.5 275.46v9.23M726.5 293.93v7.18M726.5 329.32v18.47M726.5 384.21v22.06M726.5 460.13v3.08M730.5 132.86v117.98M727.5 304.7v20.52M727.5 353.94v21.54M727.5 416.53v7.69M727.5 456.02v2.05M730.5 464.23v6.67M731.5 260.07v41.04M731.5 328.3v24.11M731.5 377.03v38.99M731.5 458.08v3.08M735.5 287.77v48.22M735.5 347.79v31.8M735.5 414.99v8.72M735.5 455.51v3.08M739.5 167.74v103.62M739.5 383.18v30.78M736.5 431.91v17.95M739.5 458.59v3.59M740.5 308.8v30.78M740.5 423.19v8.72M740.5 449.36v6.16M744.5 432.43v16.41M745.5 464.74v9.75M748.5 236.99v10.77M748.5 266.23v96.44M748.5 422.68v10.26M748.5 448.33v7.18M754.5 131.83v10.77M754.5 378.05v43.09M754.5 456.02v5.64M754.5 472.44v2.56M758.5 465.26v1.03M762.5 387.8v30.78M762.5 456.54v17.95M763.5 138.5v223.14M763.5 434.99v9.75M767.5 131.83v2.05M767.5 367.79v65.15M767.5 445.76v14.36M767.5 467.82v7.18M771.5 131.83v8.21M771.5 183.64v197.49M771.5 425.25v25.14M771.5 472.95v2.05M775.5 461.15v9.23M776.5 131.83v231.86M776.5 474.49v.51" fill="none" stroke="#0000ff" stroke-width="1" stroke-opacity="0.167"/><path d="M465.19 145.5h27.56M537.19 145.5h77.62M776.81 145.5h3.94M603.56 148.5h41.62M603.56 149.5h41.62M689.62 147.5h73.12M689.62 148.5h73.12M771.19 148.5h8.44M771.19 149.5h8.44M480.38 166.5h123.75M480.38 167.5h123.75M648.56 165.5h30.38M768.94 165.5h7.88M465.19 170.5h35.44M586.12 170.5h57.38M675.56 168.5h38.81M675.56 169.5h38.81M763.88 168.5h7.31M763.88 169.5h7.31M779.62 170.5h1.12M465.19 186.5h30.38M465.19 187.5h30.38M573.19 187.5h23.62M573.19 188.5h23.62M621 187.5h13.5M621 188.5h13.5M644.06 186.5h12.94M644.06 187.5h12.94M661.5 187.5h1.69M661.5 188.5h1.69M666 186.5h.56M666 187.5h.56M668.25 185.5h5.62M679.5 186.5h9M679.5 187.5h9M694.12 186.5h5.62M694.12 187.5h5.62M715.5 185.5h51.75M776.25 186.5h4.5M776.25 187.5h4.5M660.94 190.5h1.69M666.56 190.5h3.94M688.5 190.5h6.75M699.75 190.5h11.25M770.06 190.5h9M653.06 205.5h5.62M653.06 206.5h5.62M663.75 205.5h2.81M663.75 206.5h2.81M543.94 207.5h10.12M543.94 208.5h10.12M575.44 207.5h5.62M575.44 208.5h5.62M594 207.5h4.5M594 208.5h4.5M602.44 208.5h5.06M602.44 209.5h5.06M615.38 208.5h3.94M615.38 209.5h3.94M622.69 207.5h3.94M622.69 208.5h3.94M628.88 207.5h5.06M628.88 208.5h5.06M635.62 206.5h2.81M635.62 207.5h2.81M639.56 206.5h3.38M639.56 207.5h3.38M645.19 207.5h1.12M645.19 208.5h1.12M647.44 208.5h2.25M647.44 209.5h2.25M654.19 210.5h2.81M663.19 210.5h1.69M667.12 208.5h2.25M667.12 209.5h2.25M672.19 207.5h2.81M672.19 208.5h2.81M679.5 206.5h14.62M679.5 207.5h14.62M723.94 206.5h29.25M723.94 207.5h29.25M762.75 206.5h12.38M762.75 207.5h12.38M632.81 210.5h4.5M745.31 210.5h20.81M606.38 225.5h3.38M606.38 226.5h3.38M614.25 225.5h1.12M614.25 226.5h1.12M622.69 225.5h2.81M622.69 226.5h2.81M630.56 226.5h12.38M630.56 227.5h12.38M646.31 225.5h3.38M646.31 226.5h3.38M679.5 225.5h3.94M679.5 226.5h3.94M695.25 225.5h4.5M695.25 226.5h4.5M465.19 227.5h11.81M465.19 228.5h11.81M514.69 227.5h60.19M514.69 228.5h60.19M582.75 228.5h21.38M582.75 229.5h21.38M610.31 228.5h.56M610.31 229.5h.56M612 227.5h1.12M612 228.5h1.12M616.5 227.5h2.81M616.5 228.5h2.81M621.56 228.5h3.38M621.56 229.5h3.38M648.56 228.5h2.25M648.56 229.5h2.25M653.06 227.5h3.94M653.06 228.5h3.94M659.25 226.5h9M659.25 227.5h9M671.62 227.5h2.81M671.62 228.5h2.81M676.69 228.5h2.25M676.69 229.5h2.25M699.75 228.5h3.38M699.75 229.5h3.38M706.5 227.5h41.06M706.5 228.5h41.06M772.31 227.5h8.44M772.31 228.5h8.44M587.25 244.5h3.94M465.19 244.5h12.38M530.44 244.5h28.12M573.19 244.5h3.38M579.38 245.5h1.69M579.38 246.5h1.69M583.31 246.5h1.69M583.31 247.5h1.69M588.38 246.5h6.75M588.38 247.5h6.75M600.75 246.5h3.94M600.75 247.5h3.94M612 245.5h1.12M612 246.5h1.12M615.94 244.5h11.25M633.94 245.5h5.62M633.94 246.5h5.62M646.88 246.5h12.38M646.88 247.5h12.38M675 246.5h6.75M675 247.5h6.75M686.25 245.5h6.75M686.25 246.5h6.75M702.56 245.5h24.75M702.56 246.5h24.75M743.06 244.5h37.69M473.06 247.5h12.38M473.06 248.5h12.38M491.62 247.5h30.94M491.62 248.5h30.94M528.75 247.5h11.81M528.75 248.5h11.81M564.75 247.5h8.44M564.75 248.5h8.44M577.69 248.5h2.81M577.69 249.5h2.81M588.38 248.5h1.12M588.38 249.5h1.12M612 248.5h12.94M612 249.5h12.94M634.5 248.5h8.44M634.5 249.5h8.44M684 248.5h2.81M684 249.5h2.81M700.88 248.5h3.94M700.88 249.5h3.94M727.88 248.5h8.44M727.88 249.5h8.44M619.31 264.5h1.69M625.5 264.5h.56M662.06 264.5h11.25M475.31 264.5h9.56M528.19 264.5h15.19M547.88 265.5h3.94M547.88 266.5h3.94M552.38 264.5h3.94M558.56 265.5h4.5M558.56 266.5h4.5M565.88 266.5h2.81M565.88 267.5h2.81M571.5 265.5h4.5M571.5 266.5h4.5M581.62 265.5h5.06M581.62 266.5h5.06M590.62 264.5h5.62M597.38 264.5h6.19M604.69 264.5h2.25M609.19 265.5h2.25M609.19 266.5h2.25M613.69 266.5h1.69M613.69 267.5h1.69M617.62 267.5h5.06M617.62 268.5h5.06M632.25 267.5h3.94M632.25 268.5h3.94M640.12 266.5h5.06M640.12 267.5h5.06M660.94 266.5h2.25M660.94 267.5h2.25M680.06 266.5h8.44M680.06 267.5h8.44M695.81 266.5h5.06M695.81 267.5h5.06M702.56 266.5h6.75M702.56 267.5h6.75M714.94 266.5h11.25M714.94 267.5h11.25M739.12 265.5h20.25M739.12 266.5h20.25M465.19 269.5h6.75M481.5 267.5h45M481.5 268.5h45M541.69 269.5h7.88M550.12 267.5h2.25M550.12 268.5h2.25M552.94 267.5h3.38M552.94 268.5h3.38M559.69 269.5h2.81M568.12 269.5h2.81M588.38 269.5h3.38M600.19 267.5h1.12M600.19 268.5h1.12M603.56 267.5h2.81M603.56 268.5h2.81M609.19 269.5h2.25M754.88 269.5h25.88M680.06 284.5h5.62M693.56 285.5h6.19M693.56 286.5h6.19M703.69 284.5h4.5M465.75 285.5h9M465.75 286.5h9M482.62 284.5h33.75M525.94 285.5h7.31M525.94 286.5h7.31M542.25 284.5h1.69M549.56 284.5h6.19M561.94 284.5h2.81M568.69 285.5h5.62M568.69 286.5h5.62M588.94 286.5h3.94M588.94 287.5h3.94M597.38 286.5h3.94M597.38 287.5h3.94M605.25 287.5h3.94M605.25 288.5h3.94M611.44 287.5h3.38M611.44 288.5h3.38M624.94 286.5h6.75M624.94 287.5h6.75M642.38 286.5h5.06M642.38 287.5h5.06M650.81 287.5h3.94M650.81 288.5h3.94M661.5 289.5h3.38M666.56 287.5h20.25M666.56 288.5h20.25M695.81 289.5h5.06M705.38 287.5h3.94M705.38 288.5h3.94M717.19 286.5h37.12M717.19 287.5h37.12M771.19 285.5h9M771.19 286.5h9M471.94 289.5h8.44M519.19 289.5h11.81M540.56 287.5h2.81M540.56 288.5h2.81M546.75 287.5h2.81M546.75 288.5h2.81M556.31 287.5h2.81M556.31 288.5h2.81M561.94 289.5h4.5M632.81 289.5h5.62M606.38 304.5h3.38M606.38 305.5h3.38M638.44 304.5h2.25M638.44 305.5h2.25M642.94 305.5h2.81M642.94 306.5h2.81M650.25 306.5h11.25M650.25 307.5h11.25M664.88 305.5h5.62M664.88 306.5h5.62M672.75 304.5h3.38M672.75 305.5h3.38M689.62 304.5h2.81M689.62 305.5h2.81M696.94 305.5h.56M696.94 306.5h.56M698.06 304.5h.56M698.06 305.5h.56M704.25 304.5h5.06M704.25 305.5h5.06M714.38 304.5h21.94M714.38 305.5h21.94M465.19 306.5h1.12M465.19 307.5h1.12M474.75 305.5h7.88M474.75 306.5h7.88M522.56 304.5h22.5M522.56 305.5h22.5M546.19 305.5h1.12M546.19 306.5h1.12M549 306.5h11.25M549 307.5h11.25M561.94 306.5h7.31M561.94 307.5h7.31M573.19 305.5h12.38M573.19 306.5h12.38M587.81 306.5h2.81M587.81 307.5h2.81M593.44 306.5h6.19M593.44 307.5h6.19M604.12 307.5h1.69M604.12 308.5h1.69M612.56 306.5h4.5M612.56 307.5h4.5M626.06 306.5h2.25M626.06 307.5h2.25M631.12 307.5h2.81M631.12 308.5h2.81M636.19 309.5h2.25M662.62 309.5h2.25M671.06 307.5h4.5M671.06 308.5h4.5M676.12 307.5h7.31M676.12 308.5h7.31M693 309.5h1.12M695.25 307.5h5.62M695.25 308.5h5.62M713.25 307.5h4.5M713.25 308.5h4.5M735.19 307.5h10.12M735.19 308.5h10.12M758.25 306.5h22.5M758.25 307.5h22.5M480.38 309.5h32.62M537.75 309.5h10.12M572.06 309.5h9M609.19 324.5h1.69M609.19 325.5h1.69M620.44 324.5h3.38M620.44 325.5h3.38M628.88 325.5h1.69M628.88 326.5h1.69M631.12 326.5h6.75M631.12 327.5h6.75M641.81 325.5h2.81M641.81 326.5h2.81M647.44 324.5h3.38M647.44 325.5h3.38M666.56 324.5h2.25M666.56 325.5h2.25M671.62 325.5h2.25M671.62 326.5h2.25M676.69 326.5h4.5M676.69 327.5h4.5M692.44 326.5h2.81M692.44 327.5h2.81M699.75 325.5h6.75M699.75 326.5h6.75M717.75 325.5h8.44M717.75 326.5h8.44M738.56 324.5h15.75M738.56 325.5h15.75M466.31 326.5h9M466.31 327.5h9M483.19 325.5h51.19M483.19 326.5h51.19M542.81 326.5h7.31M542.81 327.5h7.31M554.06 325.5h5.62M554.06 326.5h5.62M569.81 325.5h1.69M569.81 326.5h1.69M574.31 324.5h1.69M574.31 325.5h1.69M578.25 325.5h2.25M578.25 326.5h2.25M583.31 326.5h3.94M583.31 327.5h3.94M601.88 327.5h3.38M601.88 328.5h3.38M607.5 327.5h3.38M607.5 328.5h3.38M613.69 327.5h2.25M613.69 328.5h2.25M644.62 327.5h3.38M644.62 328.5h3.38M659.25 327.5h2.81M659.25 328.5h2.81M748.69 327.5h16.88M748.69 328.5h16.88M658.69 343.5h.56M662.06 344.5h6.19M662.06 345.5h6.19M676.69 344.5h4.5M676.69 345.5h4.5M684.56 343.5h3.38M470.25 343.5h8.44M564.75 343.5h1.69M570.38 344.5h4.5M570.38 345.5h4.5M595.69 344.5h.56M595.69 345.5h.56M596.81 343.5h.56M603 343.5h3.38M610.31 344.5h3.38M610.31 345.5h3.38M618.75 345.5h14.06M618.75 346.5h14.06M644.06 344.5h2.25M644.06 345.5h2.25M650.81 345.5h3.38M650.81 346.5h3.38M658.12 346.5h1.69M658.12 347.5h1.69M660.94 347.5h17.44M660.94 348.5h17.44M682.88 346.5h5.06M682.88 347.5h5.06M690.19 345.5h6.75M690.19 346.5h6.75M701.44 345.5h2.81M701.44 346.5h2.81M731.81 345.5h21.38M731.81 346.5h21.38M763.88 344.5h8.44M763.88 345.5h8.44M465.19 347.5h1.69M465.19 348.5h1.69M475.88 346.5h7.88M475.88 347.5h7.88M543.94 345.5h20.25M543.94 346.5h20.25M565.88 346.5h.56M565.88 347.5h.56M567.56 347.5h3.94M567.56 348.5h3.94M593.44 347.5h.56M593.44 348.5h.56M596.81 346.5h1.69M596.81 347.5h1.69M603.56 346.5h3.94M603.56 347.5h3.94M612.56 347.5h4.5M612.56 348.5h4.5M769.5 347.5h11.25M769.5 348.5h11.25M636.75 363.5h3.38M644.06 364.5h15.19M644.06 365.5h15.19M662.62 363.5h2.81M690.75 363.5h3.38M698.06 364.5h13.5M698.06 365.5h13.5M716.62 363.5h7.31M465.19 364.5h5.06M465.19 365.5h5.06M479.25 363.5h19.12M529.31 363.5h11.81M561.94 363.5h10.12M573.19 363.5h16.31M596.25 364.5h5.06M596.25 365.5h5.06M607.5 365.5h10.12M607.5 366.5h10.12M622.69 365.5h.56M622.69 366.5h.56M628.31 365.5h5.06M628.31 366.5h5.06M638.44 366.5h4.5M638.44 367.5h4.5M648 368.5h12.94M664.88 366.5h3.38M664.88 367.5h3.38M671.62 365.5h11.81M671.62 366.5h11.81M687.38 366.5h3.94M687.38 367.5h3.94M695.81 368.5h6.75M709.31 368.5h6.75M723.38 366.5h24.19M723.38 367.5h24.19M762.19 365.5h5.62M762.19 366.5h5.62M775.12 364.5h5.62M775.12 365.5h5.62M467.44 368.5h9M483.75 366.5h54.56M483.75 367.5h54.56M552.94 368.5h13.5M576 366.5h5.62M576 367.5h5.62M586.69 366.5h6.19M586.69 367.5h6.19M596.25 368.5h2.81M606.38 383.5h2.25M611.44 384.5h1.12M611.44 385.5h1.12M613.69 383.5h4.5M622.12 383.5h3.94M656.44 383.5h2.25M659.81 383.5h5.06M666.56 384.5h2.81M666.56 385.5h2.81M688.5 384.5h8.44M688.5 385.5h8.44M748.12 383.5h14.62M470.25 384.5h8.44M470.25 385.5h8.44M491.62 383.5h21.94M525.38 383.5h12.38M547.88 383.5h6.75M559.69 384.5h22.5M559.69 385.5h22.5M592.31 384.5h3.94M592.31 385.5h3.94M600.19 385.5h3.94M600.19 386.5h3.94M606.38 386.5h5.62M606.38 387.5h5.62M617.62 386.5h5.06M617.62 387.5h5.06M631.69 385.5h14.62M631.69 386.5h14.62M651.38 386.5h3.38M651.38 387.5h3.38M657 386.5h2.81M657 387.5h2.81M660.94 386.5h2.25M660.94 387.5h2.25M666 388.5h2.81M672.75 388.5h.56M696.38 388.5h11.81M713.25 388.5h31.5M762.19 386.5h4.5M762.19 387.5h4.5M771.19 385.5h6.19M771.19 386.5h6.19M475.88 388.5h6.75M534.94 386.5h15.75M534.94 387.5h15.75M559.69 388.5h19.12M632.81 403.5h1.12M632.81 404.5h1.12M635.06 404.5h1.69M635.06 405.5h1.69M639.56 404.5h1.12M639.56 405.5h1.12M644.62 404.5h9.56M644.62 405.5h9.56M658.12 403.5h2.81M658.12 404.5h2.81M671.62 403.5h7.31M671.62 404.5h7.31M684 404.5h6.75M684 405.5h6.75M734.06 404.5h28.12M734.06 405.5h28.12M766.12 403.5h3.94M766.12 404.5h3.94M465.19 405.5h5.06M465.19 406.5h5.06M477 404.5h6.19M477 405.5h6.19M515.25 403.5h23.06M515.25 404.5h23.06M557.44 403.5h22.5M557.44 404.5h22.5M585 404.5h1.12M585 405.5h1.12M587.25 405.5h14.06M587.25 406.5h14.06M602.44 404.5h1.69M602.44 405.5h1.69M612.56 403.5h5.62M612.56 404.5h5.62M622.69 404.5h3.38M622.69 405.5h3.38M627.75 405.5h1.69M627.75 406.5h1.69M630.56 406.5h1.69M630.56 407.5h1.69M637.31 406.5h2.25M637.31 407.5h2.25M642.94 408.5h10.69M656.44 406.5h2.25M656.44 407.5h2.25M662.62 406.5h10.69M662.62 407.5h10.69M681.19 408.5h7.88M757.69 408.5h7.31M768.94 406.5h4.5M768.94 407.5h4.5M777.94 405.5h2.81M777.94 406.5h2.81M480.94 408.5h16.88M561.38 406.5h16.31M561.38 407.5h16.31M587.25 408.5h.56M600.75 408.5h20.25M465.19 422.5h6.75M655.88 422.5h3.38M662.62 423.5h5.06M662.62 424.5h5.06M691.31 424.5h14.06M691.31 425.5h14.06M763.31 424.5h3.94M763.31 425.5h3.94M771.75 423.5h3.94M771.75 424.5h3.94M780.19 422.5h.56M469.69 425.5h6.19M469.69 426.5h6.19M481.5 424.5h4.5M481.5 425.5h4.5M504 423.5h16.31M504 424.5h16.31M536.06 422.5h16.31M602.44 422.5h4.5M610.88 423.5h3.94M610.88 424.5h3.94M621.56 424.5h7.31M621.56 425.5h7.31M646.88 424.5h4.5M646.88 425.5h4.5M655.31 425.5h3.38M655.31 426.5h3.38M662.62 426.5h4.5M662.62 427.5h4.5M774.56 426.5h3.94M774.56 427.5h3.94M510.19 426.5h14.06M510.19 427.5h14.06M537.75 425.5h13.5M537.75 426.5h13.5M591.19 424.5h3.38M591.19 425.5h3.38M597.94 424.5h1.69M597.94 425.5h1.69M603.56 425.5h5.06M603.56 426.5h5.06M613.69 426.5h6.19M613.69 427.5h6.19M746.44 442.5h14.06M471.94 442.5h5.06M666.56 442.5h7.31M681.19 443.5h7.31M681.19 444.5h7.31M696.94 444.5h11.81M696.94 445.5h11.81M725.62 445.5h38.25M725.62 446.5h38.25M767.81 444.5h4.5M767.81 445.5h4.5M776.25 443.5h3.94M776.25 444.5h3.94M465.19 447.5h4.5M475.31 445.5h5.06M475.31 446.5h5.06M484.88 444.5h8.44M484.88 445.5h8.44M505.12 443.5h10.69M505.12 444.5h10.69M525.94 442.5h9M628.88 442.5h5.62M639 443.5h5.06M639 444.5h5.06M649.69 444.5h6.75M649.69 445.5h6.75M663.75 445.5h7.31M663.75 446.5h7.31M678.38 447.5h6.75M779.06 447.5h1.69M512.44 447.5h10.12M532.12 445.5h9.56M532.12 446.5h9.56M551.25 444.5h11.81M551.25 445.5h11.81M606.94 444.5h10.69M606.94 445.5h10.69M624.94 445.5h6.19M624.94 446.5h6.19M636.75 447.5h5.06M465.19 463.5h7.31M465.19 464.5h7.31M491.62 462.5h27M641.25 462.5h15.19M671.62 463.5h15.75M671.62 464.5h15.75M707.62 464.5h31.5M707.62 465.5h31.5M772.88 464.5h3.94M772.88 465.5h3.94M470.25 467.5h40.5M551.25 465.5h65.25M551.25 466.5h65.25M646.31 467.5h24.19M474.5 131.83v4.1M474.5 362.66v48.22M474.5 462.18v12.82M479.5 140.55v200.06M479.5 414.47v8.21M479.5 453.97v6.16M483.5 382.16v19.49M488.5 131.83v10.26M488.5 333.94v30.78M488.5 407.81v6.67M488.5 459.1v6.67M488.5 472.95v2.05M492.5 425.25v5.13M492.5 445.76v5.13M497.5 432.94v10.77M497.5 131.83v1.54M497.5 347.28v28.21M497.5 403.7v7.69M497.5 463.72v11.29M501.5 422.17v3.59M501.5 450.38v3.08M506.5 427.3v5.64M506.5 443.2v5.64M506.5 362.15v22.57M506.5 396.01v12.31M510.5 147.73v117.47M510.5 419.09v3.59M510.5 452.95v3.08M515.5 424.22v4.1M515.5 447.82v3.59M515.5 367.79v36.42M519.5 140.55v8.21M519.5 249.3v62.07M519.5 417.04v3.59M519.5 455v3.59M524.5 151.84v88.23M524.5 422.17v3.59M524.5 450.38v3.08M524.5 377.03v20.01M528.5 133.37v8.21M528.5 286.23v5.13M528.5 308.29v8.21M528.5 327.27v7.18M528.5 414.99v3.59M528.5 457.05v5.13M533.5 145.17v7.69M533.5 188.77v27.7M533.5 234.94v9.75M533.5 258.02v8.72M533.5 279.56v4.62M533.5 317.52v11.8M533.5 420.12v3.59M533.5 451.41v3.59M537.5 131.83v3.59M537.5 291.88v4.62M537.5 309.83v3.59M537.5 334.96v3.08M537.5 412.94v4.1M537.5 460.13v14.88M542.5 138.5v7.69M542.5 245.71v4.62M542.5 286.23v2.56M542.5 317.01v6.16M542.5 327.27v5.64M542.5 418.58v3.59M542.5 452.43v4.62M546.5 298.54v3.08M546.5 304.19v3.08M546.5 317.01v24.62M546.5 411.4v4.1M551.5 131.83v8.21M551.5 266.74v.51M551.5 274.95v2.56M551.5 301.62v2.56M551.5 312.39v4.1M551.5 417.55v3.59M551.5 453.97v6.67M551.5 474.49v.51M555.5 193.9v10.26M555.5 240.58v18.47M555.5 291.36v6.16M555.5 261.61v3.59M555.5 265.71v6.67M555.5 311.88v1.03M555.5 331.37v7.18M555.5 359.07v7.18M555.5 410.37v4.62M560.5 131.83v2.05M560.5 256.99v4.1M560.5 272.9v2.05M560.5 280.08v1.03M560.5 309.83v2.05M560.5 332.91v5.64M560.5 344.71v8.21M560.5 418.58v4.1M560.5 455v20.01M564.5 151.32v65.15M564.5 230.83v8.72M564.5 245.71v5.64M564.5 285.21v3.59M564.5 302.65v2.56M564.5 273.92v1.03M564.5 315.99v9.75M564.5 331.37v2.05M564.5 338.56v5.64M564.5 357.54v2.56M564.5 381.64v11.8M564.5 409.86v6.16M569.5 267.77v7.69M569.5 313.42v10.77M569.5 326.76v1.03M569.5 335.48v2.56M569.5 419.6v4.1M569.5 457.56v9.23M573.5 145.68v6.67M573.5 181.08v26.16M573.5 233.91v10.26M573.5 251.86v4.1M573.5 260.59v1.03M578.5 164.15v11.8M578.5 209.29v5.64M578.5 224.68v6.16M578.5 254.94v1.54M573.5 347.28v3.08M573.5 371.9v1.54M573.5 392.93v6.16M573.5 409.86v6.16M578.5 287.77v11.8M578.5 342.15v4.1M578.5 383.7v2.56M578.5 392.42v3.08M578.5 419.09v5.64M582.5 139.53v7.18M582.5 193.9v6.67M582.5 233.91v6.67M582.5 243.66v3.59M582.5 276.49v2.56M582.5 311.88v5.64M587.5 149.27v44.63M587.5 201.59v10.26M587.5 220.57v8.21M587.5 246.74v1.54M587.5 253.4v2.05M587.5 271.36v3.59M582.5 359.59v2.56M582.5 374.98v9.75M582.5 398.57v2.05M582.5 409.34v6.16M587.5 355.48v3.59M587.5 406.78v6.67M587.5 421.14v31.8M591.5 133.88v6.67M591.5 243.66v4.1M591.5 287.77v1.03M591.5 303.16v5.13M591.5 344.2v5.64M596.5 143.12v7.18M596.5 211.34v16.93M596.5 230.32v6.67M596.5 238.53v2.05M596.5 246.74v3.59M596.5 278.03v2.56M591.5 366.77v3.08M591.5 387.8v6.67M591.5 405.24v2.56M591.5 413.96v1.03M596.5 320.09v4.62M596.5 332.91v3.08M596.5 365.74v2.05M596.5 399.6v9.23M596.5 421.14v2.56M596.5 433.97v19.49M600.5 131.83v3.08M600.5 270.33v6.16M600.5 301.11v11.29M600.5 348.81v11.8M600.5 470.39v4.62M605.5 137.99v6.16M605.5 233.91v17.95M605.5 260.59v1.03M605.5 268.79v6.16M605.5 296.49v1.03M600.5 339.58v1.03M600.5 377.54v13.85M600.5 407.29v2.05M600.5 425.25v10.77M609.5 224.16v5.64M605.5 332.4v1.54M605.5 343.17v3.08M605.5 377.03v3.08M605.5 390.36v6.67M605.5 449.87v4.1M614.5 225.7v1.03M609.5 251.86v3.59M609.5 256.48v3.08M609.5 282.64v6.16M609.5 325.73v1.54M609.5 360.1v11.8M609.5 466.8v5.64M614.5 132.34v6.67M614.5 244.68v2.05M614.5 258.02v5.13M614.5 285.21v1.54M614.5 304.19v4.1M614.5 322.14v1.03M609.5 338.04v5.13M609.5 344.71v4.1M609.5 388.31v.51M609.5 396.01v3.59M609.5 417.55v6.16M609.5 441.15v7.69M618.5 212.88v3.08M618.5 222.11v13.34M614.5 336.5v2.05M614.5 352.92v2.56M614.5 382.67v1.54M614.5 403.19v12.82M614.5 451.41v3.59M618.5 295.47v5.64M618.5 332.4v2.05M618.5 363.69v1.54M618.5 373.44v1.54M618.5 464.23v4.1M623.5 131.83v2.05M623.5 250.84v4.1M623.5 268.28v3.08M623.5 278.54v8.21M623.5 293.41v8.72M623.5 311.88v2.05M623.5 330.35v3.08M618.5 347.28v4.62M618.5 421.66v3.08M618.5 447.82v3.08M623.5 470.39v4.62M627.5 148.76v48.73M627.5 211.34v1.03M627.5 223.14v4.1M627.5 245.2v3.59M623.5 347.28v8.21M623.5 366.26v3.59M623.5 388.83v14.36M623.5 415.5v1.54M623.5 452.43v2.56M632.5 231.86v3.59M632.5 243.14v3.59M627.5 294.95v2.56M627.5 315.99v2.05M627.5 346.76v3.08M627.5 462.18v3.59M632.5 211.85v3.59M632.5 262.64v10.77M632.5 295.47v2.56M632.5 329.32v2.05M632.5 344.2v2.05M627.5 356.51v8.72M627.5 419.09v4.62M627.5 449.36v2.05M632.5 467.31v4.62M636.5 144.14v6.67M636.5 205.19v.51M636.5 228.78v3.08M636.5 251.35v2.56M636.5 281.62v9.23M632.5 314.96v6.16M632.5 357.02v5.64M632.5 371.39v5.13M632.5 410.37v1.03M632.5 452.95v2.05M641.5 174.92v20.01M641.5 202.11v.51M641.5 235.45v4.1M641.5 247.25v3.08M636.5 302.65v2.56M636.5 326.24v1.54M636.5 353.43v2.05M636.5 461.15v2.56M641.5 300.6v2.05M641.5 328.81v1.54M641.5 350.87v2.05M636.5 417.04v6.16M636.5 449.87v2.05M641.5 465.26v3.59M645.5 139.53v6.67M645.5 219.55v3.08M645.5 234.42v7.18M645.5 253.4v6.16M645.5 276.49v5.64M645.5 291.36v4.1M641.5 404.21v2.05M641.5 453.46v1.54M650.5 148.76v42.58M650.5 196.46v3.08M650.5 206.72v5.13M650.5 213.91v5.64M645.5 310.86v4.62M645.5 323.68v3.59M645.5 355.48v4.1M645.5 374.98v24.62M645.5 460.13v2.05M650.5 311.37v5.13M650.5 335.99v6.67M645.5 421.66v5.64M645.5 450.38v2.05M650.5 463.72v2.56M654.5 134.4v6.67M654.5 227.24v3.08M654.5 243.66v4.1M654.5 270.84v3.59M650.5 397.55v22.06M650.5 453.46v1.54M659.5 144.14v6.67M659.5 168.25v11.8M659.5 184.67v8.21M659.5 194.41v2.56M659.5 224.68v3.08M659.5 247.76v3.08M659.5 269.31v1.54M654.5 326.76v3.08M654.5 341.63v1.54M654.5 351.89v5.64M654.5 389.85v1.54M654.5 459.1v2.05M659.5 231.35v9.75M659.5 280.08v9.75M659.5 323.17v2.05M659.5 352.41v4.1M659.5 384.72v1.54M654.5 425.76v3.59M654.5 449.36v3.08M659.5 462.18v2.05M663.5 131.83v4.1M663.5 226.22v5.13M663.5 243.14v7.18M663.5 265.2v2.56M663.5 295.98v2.05M663.5 316.5v1.54M659.5 335.99v7.69M659.5 420.63v3.59M659.5 452.95v1.54M663.5 471.93v3.08M668.5 139.01v8.21M668.5 185.18v12.31M668.5 224.68v6.67M668.5 242.12v9.75M668.5 262.64v2.56M668.5 306.24v2.05M668.5 314.96v1.54M663.5 330.86v2.56M663.5 354.46v7.18M663.5 366.77v1.03M663.5 380.11v2.56M663.5 384.72v5.13M663.5 399.09v1.03M663.5 458.08v1.54M668.5 273.41v2.56M668.5 287.77v3.08M668.5 330.35v2.05M668.5 347.28v5.64M668.5 357.02v4.62M668.5 387.29v3.08M668.5 394.98v.51M663.5 427.3v4.1M663.5 446.28v4.1M668.5 460.64v2.05M672.5 263.15v4.1M672.5 292.9v4.62M672.5 307.78v2.05M668.5 422.68v3.08M668.5 451.41v2.05M672.5 468.85v4.1M677.5 133.37v8.72M677.5 196.46v7.69M677.5 211.34v6.67M677.5 252.38v4.62M672.5 363.18v4.62M672.5 373.44v5.64M672.5 386.26v4.62M672.5 412.42v3.08M672.5 457.05v1.54M677.5 318.04v2.56M677.5 359.59v5.13M677.5 389.34v1.54M677.5 408.32v3.08M672.5 431.91v13.34M677.5 459.1v2.05M681.5 255.46v10.26M681.5 292.39v4.62M681.5 335.48v5.13M681.5 349.33v5.13M677.5 426.27v5.13M677.5 446.28v4.62M681.5 466.28v3.08M686.5 131.83v4.1M686.5 202.11v10.77M686.5 245.2v3.59M686.5 262.64v7.69M686.5 285.21v3.59M686.5 342.15v9.23M681.5 361.13v2.05M681.5 376.51v4.62M681.5 415.5v3.08M681.5 455.51v1.54M686.5 470.9v4.1M690.5 180.05v8.72M690.5 278.03v4.1M686.5 357.02v28.73M686.5 410.37v4.1M686.5 457.56v1.54M690.5 290.85v1.54M690.5 314.45v4.62M690.5 341.63v2.56M686.5 437.56v5.13M690.5 463.72v2.56M695.5 185.18v2.56M695.5 234.42v5.13M695.5 250.84v4.62M695.5 280.08v4.1M695.5 286.75v4.1M695.5 312.91v12.31M690.5 422.17v4.1M690.5 453.97v1.54M695.5 467.31v3.59M699.5 200.57v2.56M699.5 216.98v6.67M699.5 258.53v4.1M699.5 267.25v2.56M695.5 333.43v4.1M695.5 342.66v1.54M695.5 418.06v4.62M695.5 456.02v1.54M699.5 286.75v1.54M699.5 299.57v3.08M699.5 307.78v2.05M699.5 329.84v3.08M699.5 358.56v3.08M699.5 379.08v4.1M699.5 461.15v2.05M704.5 217.5v36.93M704.5 259.05v6.16M704.5 281.1v4.62M704.5 307.78v4.1M704.5 328.81v2.56M704.5 363.69v5.64M704.5 372.41v6.16M699.5 430.38v5.13M699.5 446.28v5.13M704.5 464.23v3.08M704.5 334.45v3.59M704.5 344.2v3.59M704.5 425.76v4.1M704.5 451.41v3.59M708.5 319.06v6.16M708.5 356v5.13M708.5 386.26v28.73M708.5 458.59v2.05M713.5 259.56v23.08M713.5 288.29v3.08M713.5 307.78v1.54M713.5 366.77v17.95M713.5 461.15v2.56M717.5 233.91v8.21M713.5 436.53v9.23M717.5 418.58v6.16M717.5 455.51v2.05M722.5 262.64v11.29M722.5 304.7v6.67M722.5 319.58v7.69M722.5 348.3v7.69M722.5 370.36v10.26M722.5 408.83v9.23M722.5 457.56v2.56M726.5 131.83v63.61M726.5 231.35v14.36M726.5 467.82v7.18M726.5 430.89v20.01M731.5 424.22v6.67M731.5 450.38v5.13M735.5 138.5v87.72M735.5 247.25v5.64M735.5 461.67v5.13M744.5 150.3v125.68M744.5 351.38v43.6M744.5 409.34v13.85M744.5 455.51v3.59M749.5 131.83v9.75M749.5 460.13v14.88M753.5 271.87v72.33M753.5 433.45v13.85M758.5 136.96v12.82M758.5 178v44.11M758.5 351.89v31.29M758.5 420.12v13.34M758.5 447.3v8.72M767.5 145.17v1.03" fill="none" stroke="#0000ff" stroke-width="1" stroke-opacity="0.250"/><path d="M465.19 132.5h315.56M657.56 135.5h102.94M472.5 142.5h89.44M638.44 141.5h135M666 144.5h102.38M471.94 153.5h125.44M636.19 152.5h29.81M711.56 151.5h36M766.12 152.5h7.88M465.19 162.5h6.75M611.44 162.5h41.62M684 161.5h82.69M774 162.5h6.75M723.94 164.5h37.69M465.19 173.5h7.31M542.25 174.5h25.31M640.12 173.5h32.06M707.62 172.5h58.5M774 173.5h6.75M474.75 183.5h94.5M597.94 183.5h16.88M636.75 183.5h8.44M662.06 183.5h3.38M669.94 183.5h2.81M674.44 182.5h1.69M687.94 182.5h3.94M698.62 182.5h24.75M765 182.5h8.44M523.12 191.5h27M565.31 191.5h9.56M595.69 191.5h46.69M649.12 191.5h5.06M657 191.5h2.81M482.62 194.5h85.5M607.5 194.5h10.69M628.31 194.5h14.06M653.62 194.5h1.12M663.19 194.5h19.69M693.56 193.5h1.69M698.06 194.5h1.69M708.19 193.5h37.69M763.31 193.5h9.56M573.75 201.5h6.75M597.94 201.5h18.56M640.12 201.5h2.25M651.94 201.5h4.5M663.75 201.5h5.62M465.19 203.5h40.5M554.06 204.5h27M594 204.5h7.31M618.19 204.5h4.5M626.62 203.5h6.19M638.44 203.5h1.12M640.12 203.5h4.5M645.19 204.5h1.12M669.94 204.5h2.81M676.69 203.5h21.38M700.31 203.5h1.12M707.62 203.5h18M771.75 203.5h9M465.19 211.5h10.12M498.38 211.5h48.94M553.5 212.5h7.88M566.44 212.5h6.75M577.12 211.5h4.5M594 211.5h3.38M600.19 212.5h3.38M608.06 213.5h9M621 212.5h8.44M631.12 211.5h.56M640.69 211.5h5.62M648.56 212.5h.56M649.69 213.5h2.81M656.44 213.5h6.19M668.25 212.5h2.81M673.88 211.5h4.5M695.81 211.5h26.44M778.5 211.5h2.25M465.19 214.5h77.62M579.38 214.5h3.38M592.88 214.5h3.38M627.75 214.5h1.12M632.81 214.5h3.38M678.38 214.5h14.62M719.44 214.5h20.25M770.06 214.5h10.69M471.38 220.5h46.69M527.62 220.5h10.12M548.44 221.5h6.75M570.38 221.5h6.19M581.62 220.5h11.25M597.94 221.5h5.06M608.62 222.5h3.38M617.62 222.5h1.12M621 221.5h1.69M627.19 222.5h19.12M651.38 221.5h9M675.56 221.5h6.75M697.5 221.5h7.88M733.5 220.5h25.31M761.62 220.5h16.31M542.25 224.5h14.06M569.25 224.5h26.44M615.94 224.5h3.94M653.06 224.5h5.06M659.81 223.5h9M673.31 224.5h3.38M703.69 224.5h6.75M752.06 223.5h15.19M627.75 230.5h2.81M633.94 231.5h7.31M644.06 230.5h2.81M681.75 230.5h2.81M693 230.5h3.94M469.69 231.5h55.12M551.25 231.5h21.94M577.12 232.5h3.38M583.88 233.5h5.62M602.44 233.5h2.25M606.38 232.5h.56M607.5 231.5h1.12M615.38 231.5h3.38M622.12 232.5h2.81M627.75 233.5h2.25M632.25 234.5h2.81M642.38 234.5h2.25M646.88 233.5h1.69M649.69 232.5h2.25M654.75 231.5h2.81M658.69 230.5h6.75M669.38 231.5h2.81M675 232.5h1.69M678.94 233.5h2.25M684 234.5h9.56M696.38 233.5h2.81M702.56 232.5h2.25M711 231.5h10.69M744.19 231.5h32.62M480.94 234.5h32.62M553.5 234.5h7.31M568.12 234.5h4.5M606.94 234.5h7.31M657.56 234.5h1.12M662.06 234.5h6.19M585 240.5h2.25M589.5 241.5h4.5M595.12 240.5h1.12M637.31 240.5h8.44M682.88 240.5h7.88M465.19 241.5h3.94M483.19 240.5h24.75M532.69 241.5h17.44M556.31 240.5h6.75M568.69 240.5h3.94M575.44 241.5h2.25M579.38 242.5h2.25M583.88 243.5h1.69M592.31 243.5h9M604.12 242.5h2.81M612 241.5h4.5M624.38 241.5h4.5M632.81 242.5h3.38M640.69 243.5h6.19M651.94 242.5h5.62M658.69 242.5h13.5M681.19 243.5h3.38M691.88 242.5h6.75M726.19 241.5h25.88M775.69 241.5h5.06M582.75 250.5h2.25M591.75 250.5h3.38M602.44 250.5h4.5M608.62 250.5h2.81M646.88 250.5h3.94M655.88 251.5h3.94M672.75 251.5h3.38M678.94 250.5h2.25M710.44 250.5h10.69M465.19 252.5h3.94M480.38 251.5h59.06M546.19 252.5h7.31M556.88 253.5h5.62M564.75 252.5h11.81M582.75 252.5h2.25M587.25 252.5h2.81M594 253.5h8.44M609.19 253.5h1.12M615.94 253.5h5.06M628.88 252.5h14.06M646.88 253.5h2.81M679.5 253.5h1.69M683.44 252.5h2.25M689.62 251.5h5.06M699.19 252.5h2.81M706.5 253.5h3.38M722.81 253.5h5.06M734.06 252.5h26.44M773.44 252.5h7.31M615.38 260.5h11.25M655.31 260.5h3.94M660.94 261.5h.56M671.06 261.5h2.81M675.56 260.5h2.25M709.88 260.5h11.25M468.56 261.5h10.12M523.12 260.5h7.88M542.81 261.5h4.5M550.69 262.5h3.38M559.69 262.5h3.94M569.25 263.5h1.69M572.06 262.5h1.12M586.12 261.5h5.06M599.06 261.5h3.38M603.56 261.5h3.38M609.19 262.5h1.69M613.69 263.5h2.25M632.25 263.5h3.94M641.25 262.5h8.44M655.88 263.5h5.06M676.69 263.5h2.81M682.31 262.5h4.5M698.62 262.5h5.62M707.06 263.5h16.88M730.69 262.5h10.12M575.44 270.5h7.88M613.69 270.5h1.69M617.62 271.5h2.81M622.69 272.5h3.38M630.56 272.5h5.06M639 271.5h3.38M646.31 270.5h5.06M662.62 270.5h2.25M677.81 271.5h16.88M698.06 271.5h1.69M714.94 270.5h21.38M468.56 272.5h9.56M498.38 271.5h18.56M525.94 272.5h10.12M546.75 272.5h.56M547.88 271.5h1.69M551.25 271.5h5.62M560.81 272.5h2.25M563.62 272.5h6.19M572.06 273.5h5.06M584.44 273.5h4.5M592.88 272.5h6.75M600.75 271.5h2.81M607.5 272.5h2.81M612.56 273.5h2.25M649.69 273.5h4.5M664.31 273.5h3.38M715.5 273.5h36.56M614.81 280.5h1.12M617.06 280.5h4.5M623.25 281.5h11.81M642.94 280.5h5.62M672.75 280.5h5.06M682.31 281.5h9M693 282.5h5.06M702 281.5h3.94M712.12 280.5h1.69M465.19 282.5h3.38M477.56 281.5h9.56M514.69 281.5h7.88M531.56 282.5h2.25M543.38 281.5h.56M558.56 280.5h1.12M560.81 280.5h2.81M565.88 281.5h2.81M572.06 282.5h4.5M592.31 283.5h.56M594 282.5h6.19M605.25 283.5h4.5M610.31 283.5h3.38M615.38 283.5h2.81M633.94 283.5h32.62M712.69 283.5h3.38M757.69 282.5h23.06M556.88 283.5h2.25M587.81 290.5h3.38M594.56 290.5h2.81M600.19 291.5h3.38M609.75 292.5h2.25M613.69 291.5h6.75M623.81 290.5h3.38M643.5 290.5h2.25M648 291.5h2.25M651.94 292.5h2.81M658.12 293.5h5.62M664.31 292.5h9M678.94 291.5h16.31M697.5 292.5h3.94M708.19 291.5h10.69M749.25 290.5h15.19M465.19 293.5h3.94M477.56 292.5h7.31M507.38 292.5h21.94M539.44 291.5h14.06M556.31 292.5h2.81M563.06 293.5h12.38M585 292.5h6.75M593.44 293.5h2.25M623.25 293.5h2.25M630.56 292.5h7.31M641.81 293.5h2.25M761.06 293.5h19.69M563.06 300.5h6.19M595.69 300.5h1.69M600.75 300.5h4.5M608.62 301.5h2.81M615.38 300.5h2.81M640.12 300.5h2.25M644.06 301.5h2.25M648.56 302.5h2.25M654.75 303.5h7.31M668.81 302.5h2.25M673.31 301.5h2.81M679.5 300.5h19.69M701.44 301.5h13.5M737.44 300.5h13.5M469.12 302.5h8.44M484.88 301.5h20.25M519.19 301.5h7.31M534.94 300.5h7.31M543.94 301.5h1.12M546.19 302.5h7.31M558 303.5h12.38M573.19 302.5h3.94M587.25 302.5h2.81M592.31 303.5h2.25M596.25 303.5h6.75M614.81 303.5h3.38M622.12 302.5h6.19M633.38 303.5h2.25M747.56 303.5h15.19M641.81 310.5h7.31M650.81 310.5h7.88M465.19 310.5h7.31M549 310.5h.56M552.38 311.5h.56M560.81 310.5h5.62M583.88 310.5h1.69M590.06 310.5h5.06M597.38 311.5h7.88M610.88 310.5h10.12M625.5 310.5h.56M626.62 311.5h.56M629.44 312.5h2.81M634.5 313.5h2.81M652.5 313.5h3.94M659.25 312.5h3.38M664.88 311.5h2.81M669.38 311.5h9M681.19 312.5h4.5M701.44 312.5h10.12M712.12 311.5h.56M722.25 312.5h9.56M743.06 311.5h10.69M769.5 310.5h11.25M469.12 313.5h8.44M485.44 312.5h35.44M529.31 312.5h6.75M540.56 313.5h10.69M559.12 313.5h4.5M568.69 312.5h9M580.5 313.5h2.25M586.69 313.5h3.38M610.88 313.5h5.62M621.56 313.5h3.38M668.25 313.5h1.12M629.44 319.5h1.12M633.38 320.5h9.56M646.88 319.5h2.81M681.19 319.5h3.38M696.38 319.5h7.31M472.5 319.5h7.88M536.06 319.5h4.5M545.62 320.5h2.25M551.81 319.5h7.31M584.44 319.5h1.69M587.81 320.5h2.25M600.19 320.5h15.75M616.5 319.5h2.81M622.12 320.5h2.81M627.75 321.5h1.12M629.44 322.5h.56M630.56 323.5h10.69M644.62 322.5h2.81M650.25 321.5h2.81M655.88 320.5h3.38M666.56 320.5h3.38M672.19 321.5h2.25M676.69 322.5h2.81M682.88 323.5h11.81M699.19 322.5h7.88M708.19 321.5h9M730.69 321.5h12.38M759.38 320.5h12.94M465.19 323.5h4.5M478.12 322.5h9M532.12 322.5h5.62M543.38 323.5h6.75M552.94 322.5h3.38M558 322.5h2.81M564.75 321.5h.56M571.5 322.5h2.81M576.56 321.5h3.94M582.19 322.5h1.69M585.56 323.5h3.38M612 323.5h6.19M654.75 323.5h7.88M768.38 323.5h12.38M619.88 329.5h5.06M631.12 330.5h4.5M639 329.5h2.81M664.88 329.5h2.25M669.94 330.5h2.81M676.69 331.5h9.56M692.44 330.5h1.69M695.81 329.5h7.88M704.25 329.5h1.12M709.31 329.5h8.44M724.5 329.5h10.69M473.06 330.5h7.88M555.19 329.5h3.94M560.25 330.5h6.19M567 329.5h1.12M570.38 329.5h3.38M576.56 330.5h6.19M596.81 331.5h4.5M605.25 332.5h.56M606.38 331.5h3.94M613.12 332.5h2.25M620.44 333.5h15.19M638.44 332.5h2.25M642.94 331.5h2.81M654.75 331.5h2.25M659.25 332.5h2.25M663.75 333.5h5.62M692.44 333.5h.56M694.69 332.5h6.75M703.69 332.5h6.19M718.31 333.5h5.06M732.94 332.5h10.69M763.31 331.5h10.69M478.12 333.5h9.56M507.38 333.5h26.44M558.56 332.5h1.12M561.38 333.5h1.12M564.75 332.5h.56M568.69 333.5h2.81M615.38 339.5h18M658.12 339.5h.56M659.25 340.5h2.81M666 341.5h5.06M676.69 341.5h4.5M684 340.5h3.38M690.19 339.5h1.69M711 339.5h18M465.19 340.5h7.88M480.94 339.5h54.56M563.62 339.5h.56M564.75 340.5h5.06M575.44 341.5h10.69M597.94 340.5h1.69M600.75 339.5h1.12M604.69 340.5h1.69M608.62 341.5h3.38M615.94 342.5h16.88M634.5 341.5h1.69M638.44 340.5h2.81M644.62 339.5h3.94M650.81 340.5h1.69M653.62 341.5h1.12M657 342.5h1.12M690.19 342.5h1.12M692.44 341.5h2.81M705.94 342.5h6.19M725.06 342.5h10.69M756 341.5h9.56M775.69 340.5h5.06M493.88 342.5h18M533.25 342.5h9.56M561.38 342.5h2.81M576 349.5h9.56M591.75 349.5h1.12M623.25 349.5h15.19M648.56 350.5h5.06M661.5 351.5h9M678.38 350.5h10.69M701.44 350.5h23.62M750.94 349.5h11.81M465.19 351.5h7.88M481.5 350.5h28.69M521.44 350.5h25.88M566.44 350.5h.56M567.56 351.5h1.69M574.88 352.5h4.5M589.5 352.5h.56M599.06 351.5h3.94M614.81 351.5h4.5M623.81 352.5h2.81M629.44 352.5h1.12M761.62 352.5h6.19M777.38 351.5h3.38M632.25 359.5h2.25M637.31 360.5h3.38M644.62 361.5h12.38M660.94 360.5h2.81M666 359.5h2.81M688.5 359.5h2.25M693 360.5h3.94M712.12 360.5h5.06M725.06 359.5h30.94M473.62 360.5h7.88M506.81 359.5h19.12M533.81 360.5h21.94M570.38 360.5h9.56M585.56 360.5h1.12M593.44 361.5h27.56M624.94 361.5h3.38M630.56 362.5h2.81M667.69 362.5h2.81M678.94 362.5h1.69M681.75 361.5h1.69M686.25 362.5h2.25M752.62 362.5h10.69M769.5 361.5h8.44M602.44 369.5h2.81M608.62 370.5h5.06M617.62 371.5h2.81M621 370.5h.56M629.44 369.5h7.88M643.5 370.5h5.06M654.75 371.5h11.25M671.06 370.5h9.56M681.19 370.5h5.06M693 371.5h7.31M713.25 371.5h9.56M741.94 370.5h19.69M766.69 369.5h6.19M473.62 371.5h7.88M550.12 371.5h5.62M568.69 371.5h6.19M578.25 370.5h3.38M589.5 370.5h3.38M595.69 371.5h2.25M600.19 372.5h2.25M631.69 372.5h12.38M771.19 372.5h7.88M603 379.5h2.25M607.5 380.5h1.69M611.44 381.5h2.81M622.69 380.5h3.38M627.75 379.5h2.25M654.19 379.5h2.81M658.69 380.5h1.69M663.19 380.5h3.38M668.81 381.5h2.25M673.88 381.5h13.5M700.31 380.5h12.94M732.38 380.5h18.56M763.31 379.5h5.06M465.19 381.5h7.88M480.94 380.5h50.06M551.25 380.5h4.5M559.69 381.5h14.06M579.94 380.5h2.81M591.19 380.5h3.38M597.38 381.5h2.25M601.88 382.5h2.81M628.88 382.5h3.94M638.44 381.5h6.75M651.38 382.5h2.81M767.25 382.5h5.62M779.62 381.5h1.12M678.94 389.5h9M465.19 389.5h2.25M592.31 389.5h9M606.94 390.5h1.12M609.19 389.5h2.25M613.69 389.5h11.25M634.5 390.5h7.88M648.56 391.5h5.62M655.88 390.5h5.62M664.31 391.5h2.81M672.19 391.5h2.81M678.94 392.5h16.88M704.81 391.5h18M740.25 391.5h19.69M765.56 390.5h4.5M775.69 389.5h5.06M465.19 392.5h7.88M480.38 391.5h44.44M556.31 391.5h22.5M580.5 392.5h1.69M606.94 392.5h1.12M609.19 391.5h5.06M623.25 392.5h4.5M779.62 392.5h1.12M585 399.5h18M631.12 399.5h1.69M634.5 400.5h1.12M637.31 401.5h1.12M640.12 402.5h3.38M644.62 401.5h1.69M661.5 400.5h1.12M663.75 399.5h6.75M676.12 400.5h5.06M685.12 401.5h60.75M762.75 400.5h4.5M771.19 399.5h5.06M472.5 401.5h7.31M495 400.5h52.88M549 400.5h13.5M572.62 400.5h7.31M583.88 401.5h.56M585 402.5h2.81M590.06 402.5h12.94M603 401.5h.56M606.94 400.5h6.19M619.31 400.5h3.94M625.5 401.5h2.25M630 402.5h1.12M662.62 402.5h2.25M774.56 402.5h5.06M467.44 409.5h7.31M589.5 409.5h3.94M624.38 409.5h1.69M627.75 410.5h5.06M637.31 410.5h2.25M643.5 411.5h3.38M672.75 411.5h11.81M700.31 412.5h50.06M763.88 411.5h3.94M772.31 410.5h4.5M472.5 412.5h6.19M484.31 411.5h27.56M565.31 410.5h11.81M585 410.5h2.81M590.06 411.5h1.12M599.06 411.5h1.12M602.44 411.5h9.56M618.19 412.5h2.25M628.88 412.5h4.5M704.25 418.5h57.94M465.19 419.5h2.25M474.19 418.5h6.19M626.06 418.5h13.5M644.62 418.5h7.31M656.44 419.5h3.38M663.75 420.5h5.62M698.62 421.5h13.5M755.44 421.5h9.56M768.94 420.5h3.94M776.81 419.5h3.94M478.12 421.5h5.06M496.12 420.5h18.56M533.25 419.5h24.75M589.5 418.5h5.06M601.88 419.5h3.38M609.19 420.5h3.94M618.19 420.5h2.25M622.69 421.5h11.25M647.44 421.5h5.06M590.62 421.5h8.44M681.19 428.5h18M714.38 429.5h47.81M766.12 428.5h3.94M465.19 430.5h2.25M474.19 429.5h5.06M484.31 428.5h10.69M644.62 428.5h5.06M654.19 429.5h3.38M662.06 430.5h5.62M678.38 431.5h15.19M768.94 431.5h3.94M777.38 430.5h3.38M487.12 431.5h15.19M515.81 430.5h11.81M540 429.5h11.81M605.25 429.5h6.19M618.75 430.5h12.94M641.81 431.5h5.62M569.25 431.5h15.19M708.19 438.5h19.69M762.19 438.5h4.5M467.44 439.5h6.19M479.25 438.5h4.5M653.62 438.5h6.75M668.25 439.5h7.31M683.44 440.5h7.88M702 441.5h14.62M765 441.5h4.5M773.44 440.5h3.94M482.06 441.5h4.5M497.81 440.5h11.81M519.75 439.5h10.12M539.44 438.5h9.56M618.19 438.5h7.31M631.12 439.5h5.06M641.25 440.5h5.06M651.94 441.5h6.75M544.5 441.5h10.12M567.56 440.5h33.75M614.25 441.5h8.44M693 448.5h10.12M716.06 449.5h20.81M762.75 449.5h3.94M770.62 448.5h4.5M467.44 450.5h6.19M478.69 449.5h4.5M488.81 448.5h12.94M647.44 448.5h6.19M660.38 449.5h7.31M675 450.5h6.75M689.06 451.5h9M773.44 451.5h4.5M498.94 451.5h11.25M520.31 450.5h10.12M540 449.5h10.12M561.94 448.5h46.69M618.19 449.5h7.88M632.25 450.5h6.19M644.06 451.5h6.19M714.38 458.5h20.81M767.25 458.5h3.94M465.19 460.5h2.81M474.19 459.5h6.75M502.31 458.5h18M640.12 458.5h10.69M661.5 459.5h10.69M683.44 460.5h12.94M712.12 461.5h25.31M770.06 461.5h3.94M777.94 460.5h2.81M542.25 461.5h36M596.25 461.5h27.56M696.94 468.5h44.44M775.12 468.5h3.94M465.19 471.5h3.38M567 470.5h36M668.81 471.5h73.12M777.94 471.5h2.81M475.5 131.83v4.1M475.5 362.66v48.22M475.5 462.18v12.82M478.5 140.55v200.06M478.5 414.47v8.21M480.5 431.4v14.88M478.5 453.97v6.16M482.5 422.17v6.16M482.5 448.33v5.64M484.5 382.16v19.49M487.5 131.83v10.26M489.5 151.84v123.62M487.5 333.94v30.78M487.5 407.81v6.67M489.5 419.09v4.62M489.5 452.43v3.08M487.5 459.1v6.67M487.5 472.95v2.05M491.5 145.68v162.1M491.5 416.53v4.62M493.5 425.25v5.13M493.5 445.76v5.13M491.5 453.97v3.59M496.5 432.94v10.77M496.5 131.83v1.54M498.5 143.12v9.23M498.5 239.04v71.81M496.5 347.28v28.21M496.5 403.7v7.69M498.5 416.01v4.1M498.5 455v3.59M496.5 463.72v11.29M500.5 137.47v9.23M500.5 286.23v41.55M500.5 413.45v4.62M502.5 422.17v3.59M502.5 450.38v3.08M500.5 457.05v4.1M505.5 427.3v5.64M505.5 443.2v5.64M507.5 135.42v8.72M507.5 306.75v13.85M505.5 362.15v22.57M505.5 396.01v12.31M507.5 413.45v4.1M507.5 457.56v4.62M509.5 131.83v7.18M511.5 147.73v117.47M509.5 314.45v11.8M509.5 341.63v11.8M509.5 410.88v4.62M511.5 419.09v3.59M511.5 452.95v3.08M509.5 460.13v14.88M514.5 424.22v4.1M516.5 433.97v7.69M514.5 447.82v3.59M516.5 131.83v5.13M516.5 315.47v9.23M516.5 343.69v10.26M514.5 367.79v36.42M516.5 410.88v4.1M518.5 430.38v15.39M516.5 460.64v14.36M520.5 140.55v8.21M520.5 249.3v62.07M518.5 321.63v38.47M518.5 407.81v5.13M520.5 417.04v3.59M520.5 455v3.59M518.5 465.26v8.21M523.5 151.84v88.23M523.5 422.17v3.59M525.5 429.86v15.9M523.5 450.38v3.08M525.5 334.45v11.8M523.5 377.03v20.01M525.5 407.81v5.13M527.5 427.3v5.13M527.5 443.2v5.13M529.5 133.37v8.21M529.5 286.23v5.13M529.5 308.29v8.21M529.5 327.27v7.18M527.5 340.09v8.21M527.5 404.73v6.16M529.5 414.99v3.59M529.5 457.05v5.13M532.5 145.17v7.69M532.5 188.77v27.7M532.5 234.94v9.75M532.5 258.02v8.72M532.5 279.56v4.62M532.5 317.52v11.8M532.5 420.12v3.59M534.5 427.3v5.13M534.5 442.69v5.13M532.5 451.41v3.59M536.5 267.25v10.77M534.5 291.36v5.64M534.5 301.11v5.64M534.5 340.09v4.1M534.5 366.77v10.77M534.5 405.75v5.13M536.5 425.25v4.1M536.5 445.25v4.62M538.5 131.83v3.59M538.5 291.88v4.62M536.5 300.08v5.64M538.5 309.83v3.59M538.5 334.96v3.08M536.5 341.63v4.62M536.5 360.1v23.6M536.5 403.19v5.64M538.5 412.94v4.1M538.5 460.13v14.88M541.5 138.5v7.69M541.5 245.71v4.62M543.5 264.69v5.13M543.5 281.62v2.05M541.5 286.23v2.56M541.5 317.01v6.16M541.5 327.27v5.64M541.5 418.58v3.59M543.5 425.76v4.62M543.5 443.71v5.13M541.5 452.43v4.62M545.5 149.27v67.2M545.5 243.66v22.57M545.5 273.41v1.03M543.5 290.85v9.23M543.5 342.66v21.03M543.5 372.92v8.21M543.5 404.73v4.62M545.5 424.22v4.1M545.5 445.76v4.62M547.5 298.54v3.08M547.5 304.19v3.08M547.5 317.01v24.62M545.5 376v7.69M545.5 401.14v6.16M547.5 411.4v4.1M550.5 131.83v8.21M552.5 147.73v40.52M552.5 207.75v7.69M552.5 234.42v6.67M552.5 254.94v1.54M552.5 262.12v3.59M550.5 266.74v.51M550.5 274.95v2.56M552.5 281.1v2.56M552.5 290.34v6.67M550.5 301.62v2.56M550.5 312.39v4.1M550.5 417.55v3.59M552.5 425.25v5.13M552.5 443.2v6.16M550.5 453.97v6.67M550.5 474.49v.51M554.5 143.12v7.18M556.5 193.9v10.26M554.5 212.88v6.67M554.5 229.81v5.13M556.5 240.58v18.47M554.5 260.59v1.54M554.5 278.54v2.05M554.5 286.23v2.56M556.5 291.36v6.16M554.5 302.14v3.08M552.5 312.91v2.56M552.5 325.73v4.62M552.5 372.41v9.23M552.5 399.09v7.69M554.5 424.22v4.62M554.5 445.25v5.64M556.5 261.61v3.59M556.5 265.71v6.67M556.5 311.88v1.03M554.5 314.45v2.05M554.5 318.55v2.56M556.5 331.37v7.18M556.5 359.07v7.18M554.5 374.46v27.7M556.5 410.37v4.62M559.5 131.83v2.05M561.5 141.06v7.69M561.5 216.47v14.36M561.5 252.89v2.05M559.5 256.99v4.1M559.5 272.9v2.05M559.5 280.08v1.03M561.5 282.64v2.05M561.5 306.24v2.05M559.5 309.83v2.05M559.5 332.91v5.64M559.5 344.71v8.21M559.5 418.58v4.1M561.5 426.79v7.18M561.5 440.64v7.69M559.5 455v20.01M563.5 136.96v7.18M565.5 151.32v65.15M565.5 230.83v8.72M565.5 245.71v5.64M563.5 253.92v4.1M563.5 281.62v1.54M565.5 285.21v3.59M565.5 302.65v2.56M563.5 307.26v2.05M561.5 318.55v3.08M561.5 330.86v1.03M563.5 339.07v9.23M561.5 367.79v12.31M563.5 425.76v6.16M563.5 442.69v7.69M565.5 273.92v1.03M565.5 315.99v9.75M565.5 331.37v2.05M565.5 338.56v5.64M565.5 357.54v2.56M565.5 381.64v11.8M565.5 409.86v6.16M570.5 135.42v7.18M570.5 265.2v1.54M568.5 267.77v7.69M570.5 280.08v6.67M570.5 304.7v4.1M568.5 313.42v10.77M568.5 326.76v1.03M568.5 335.48v2.56M568.5 419.6v4.1M570.5 429.35v16.41M568.5 457.56v9.23M572.5 131.83v6.16M574.5 145.68v6.67M574.5 181.08v26.16M574.5 233.91v10.26M574.5 251.86v4.1M574.5 260.59v1.03M572.5 262.64v9.75M572.5 273.92v47.71M572.5 323.17v1.54M570.5 348.81v2.05M570.5 359.07v2.56M572.5 427.81v18.98M572.5 472.44v2.56M577.5 164.15v11.8M577.5 209.29v5.64M577.5 224.68v6.16M577.5 254.94v1.54M574.5 347.28v3.08M572.5 352.41v2.05M572.5 368.31v1.54M574.5 371.9v1.54M574.5 392.93v6.16M574.5 409.86v6.16M579.5 131.83v4.62M579.5 280.08v3.08M577.5 287.77v11.8M579.5 305.73v5.64M579.5 320.6v4.62M579.5 331.37v6.16M577.5 342.15v4.1M577.5 383.7v2.56M577.5 392.42v3.08M577.5 419.09v5.64M579.5 470.9v4.1M581.5 131.83v.51M583.5 139.53v7.18M583.5 193.9v6.67M583.5 233.91v6.67M583.5 243.66v3.59M583.5 276.49v2.56M581.5 281.62v3.08M581.5 303.67v5.64M583.5 311.88v5.64M581.5 318.55v1.03M581.5 334.96v6.16M579.5 360.1v6.67M581.5 464.23v10.77M586.5 149.27v44.63M586.5 201.59v10.26M586.5 220.57v8.21M586.5 246.74v1.54M586.5 253.4v2.05M588.5 258.53v7.69M586.5 271.36v3.59M583.5 359.59v2.56M583.5 374.98v9.75M581.5 393.44v3.08M583.5 398.57v2.05M583.5 409.34v6.16M590.5 254.94v13.34M588.5 285.72v2.05M588.5 293.41v11.8M588.5 311.88v.51M588.5 318.55v29.24M588.5 353.43v1.03M586.5 355.48v3.59M586.5 406.78v6.67M586.5 421.14v31.8M588.5 464.23v8.72M592.5 133.88v6.67M592.5 243.66v4.1M592.5 287.77v1.03M590.5 290.34v1.54M590.5 292.9v3.59M592.5 303.16v5.13M590.5 309.32v3.08M590.5 315.47v4.62M590.5 335.48v6.16M592.5 344.2v5.64M590.5 350.87v.51M588.5 371.39v8.72M590.5 460.13v8.21M595.5 143.12v7.18M597.5 181.59v18.47M595.5 211.34v16.93M595.5 230.32v6.67M595.5 238.53v2.05M595.5 246.74v3.59M597.5 266.23v7.18M595.5 278.03v2.56M592.5 366.77v3.08M590.5 375.49v3.59M592.5 387.8v6.67M592.5 405.24v2.56M592.5 413.96v1.03M599.5 172.87v13.85M599.5 197.49v10.26M599.5 259.05v4.1M599.5 268.28v3.08M597.5 306.75v1.54M597.5 311.88v4.62M595.5 320.09v4.62M595.5 332.91v3.08M597.5 338.04v2.05M597.5 342.66v5.13M597.5 361.13v2.05M595.5 365.74v2.05M595.5 399.6v9.23M595.5 421.14v2.56M595.5 433.97v19.49M597.5 460.64v7.18M601.5 131.83v3.08M601.5 270.33v6.16M601.5 301.11v11.29M599.5 315.99v3.08M599.5 337.53v2.05M599.5 344.2v2.05M601.5 348.81v11.8M599.5 364.2v2.56M599.5 403.7v3.59M597.5 419.6v3.08M599.5 458.08v6.16M601.5 470.39v4.62M604.5 137.99v6.16M606.5 151.32v12.31M606.5 168.25v18.98M606.5 198v30.78M606.5 229.81v3.08M604.5 233.91v17.95M606.5 256.48v1.03M604.5 260.59v1.03M604.5 268.79v6.16M606.5 287.26v6.67M604.5 296.49v1.03M601.5 339.58v1.03M601.5 377.54v13.85M601.5 407.29v2.05M599.5 412.94v9.75M601.5 425.25v10.77M608.5 146.71v33.86M610.5 224.16v5.64M608.5 230.32v.51M608.5 272.38v6.16M608.5 282.64v3.59M606.5 322.65v7.18M604.5 332.4v1.54M604.5 343.17v3.08M606.5 349.33v3.59M606.5 369.85v3.59M604.5 377.03v3.08M604.5 390.36v6.67M604.5 449.87v4.1M606.5 459.1v5.13M613.5 225.7v1.03M610.5 251.86v3.59M610.5 256.48v3.08M610.5 282.64v6.16M610.5 325.73v1.54M608.5 328.3v1.03M608.5 352.41v3.08M610.5 360.1v11.8M608.5 376v4.1M606.5 393.96v4.1M608.5 457.05v4.62M610.5 466.8v5.64M613.5 132.34v6.67M615.5 145.17v6.16M615.5 175.43v30.78M615.5 241.09v2.05M613.5 244.68v2.05M613.5 258.02v5.13M615.5 265.71v3.08M615.5 281.1v2.05M613.5 285.21v1.54M613.5 304.19v4.1M615.5 312.91v8.72M613.5 322.14v1.03M610.5 338.04v5.13M610.5 344.71v4.1M610.5 388.31v.51M610.5 396.01v3.59M610.5 417.55v6.16M610.5 441.15v7.69M617.5 141.58v6.16M619.5 212.88v3.08M619.5 222.11v13.34M617.5 248.27v13.85M617.5 271.87v2.05M615.5 291.36v3.59M617.5 309.32v2.05M617.5 318.04v1.03M615.5 332.91v2.05M613.5 336.5v2.05M613.5 352.92v2.56M615.5 358.05v3.08M615.5 380.62v1.03M613.5 382.67v1.54M613.5 403.19v12.82M613.5 451.41v3.59M615.5 458.08v3.59M619.5 295.47v5.64M619.5 332.4v2.05M617.5 335.99v2.05M617.5 359.07v2.56M619.5 363.69v1.54M619.5 373.44v1.54M617.5 377.03v3.59M615.5 427.3v14.88M617.5 457.05v3.08M619.5 464.23v4.1M622.5 131.83v2.05M624.5 140.04v6.16M624.5 201.08v7.69M624.5 217.5v3.08M624.5 245.2v2.56M622.5 250.84v4.1M622.5 268.28v3.08M622.5 278.54v8.21M622.5 293.41v8.72M624.5 308.8v2.05M622.5 311.88v2.05M624.5 314.96v1.03M624.5 322.65v4.1M622.5 330.35v3.08M619.5 347.28v4.62M619.5 421.66v3.08M617.5 428.32v13.85M619.5 447.82v3.08M622.5 470.39v4.62M626.5 136.45v6.16M628.5 148.76v48.73M628.5 211.34v1.03M626.5 214.93v5.64M628.5 223.14v4.1M628.5 245.2v3.59M626.5 252.89v4.62M624.5 295.98v.51M626.5 312.91v3.59M626.5 329.32v2.56M624.5 342.15v2.05M622.5 347.28v8.21M624.5 358.56v3.08M624.5 363.18v1.03M622.5 366.26v3.59M624.5 373.95v10.26M622.5 388.83v14.36M624.5 412.42v1.03M622.5 415.5v1.54M622.5 452.43v2.56M624.5 457.56v3.08M631.5 231.86v3.59M631.5 243.14v3.59M628.5 294.95v2.56M626.5 300.6v12.82M628.5 315.99v2.05M628.5 346.76v3.08M626.5 354.46v3.59M626.5 372.92v14.36M626.5 406.78v7.18M624.5 426.79v4.62M624.5 439.61v6.16M626.5 456.54v3.08M628.5 462.18v3.59M633.5 135.42v6.16M633.5 208.78v1.03M631.5 211.85v3.59M633.5 219.55v5.13M635.5 238.53v5.13M633.5 254.94v3.08M631.5 262.64v10.77M633.5 278.03v3.59M633.5 289.82v3.08M631.5 295.47v2.56M631.5 329.32v2.05M633.5 332.91v2.05M633.5 340.09v2.05M631.5 344.2v2.05M628.5 356.51v8.72M628.5 419.09v4.62M626.5 427.81v16.93M628.5 449.36v2.05M631.5 467.31v4.62M635.5 131.83v6.16M637.5 144.14v6.67M637.5 205.19v.51M635.5 206.72v2.05M635.5 216.98v7.69M637.5 228.78v3.08M637.5 251.35v2.56M635.5 256.48v3.59M635.5 275.46v3.08M637.5 281.62v9.23M635.5 293.41v2.56M633.5 306.24v4.1M631.5 314.96v6.16M633.5 324.19v2.56M635.5 334.45v1.54M635.5 339.07v2.05M633.5 351.38v2.56M631.5 357.02v5.64M631.5 371.39v5.13M633.5 382.16v26.67M631.5 410.37v1.03M631.5 452.95v2.05M633.5 457.56v2.05M635.5 473.98v1.03M640.5 174.92v20.01M640.5 202.11v.51M640.5 235.45v4.1M640.5 247.25v3.08M637.5 302.65v2.56M635.5 307.78v3.59M635.5 321.63v3.08M637.5 326.24v1.54M637.5 353.43v2.05M635.5 357.54v2.05M635.5 378.57v4.62M635.5 406.27v1.54M633.5 426.27v8.72M633.5 438.07v8.72M635.5 456.54v2.05M637.5 461.15v2.56M642.5 131.83v5.13M644.5 196.46v2.56M642.5 218.52v7.18M642.5 258.53v6.67M642.5 269.31v6.67M642.5 295.98v2.56M640.5 300.6v2.05M640.5 328.81v1.54M642.5 331.89v2.56M642.5 345.22v3.08M640.5 350.87v2.05M637.5 417.04v6.16M635.5 429.35v15.39M637.5 449.87v2.05M640.5 465.26v3.59M642.5 472.95v2.05M644.5 131.83v1.03M646.5 139.53v6.67M646.5 219.55v3.08M646.5 234.42v7.18M646.5 253.4v6.16M646.5 276.49v5.64M646.5 291.36v4.1M644.5 298.03v2.56M642.5 311.88v4.62M642.5 321.11v3.08M644.5 331.89v3.59M644.5 343.69v4.62M642.5 360.1v3.08M642.5 372.92v4.62M642.5 403.19v.51M640.5 404.21v2.05M640.5 453.46v1.54M642.5 457.05v2.05M644.5 470.39v4.62M649.5 148.76v42.58M649.5 196.46v3.08M649.5 206.72v5.13M649.5 213.91v5.64M646.5 310.86v4.62M646.5 323.68v3.59M646.5 355.48v4.1M644.5 365.74v2.56M646.5 374.98v24.62M644.5 400.62v1.54M642.5 429.86v17.44M644.5 456.02v2.05M646.5 460.13v2.05M653.5 200.57v4.62M653.5 214.42v1.03M651.5 228.78v15.39M651.5 298.54v7.69M649.5 311.37v5.13M649.5 335.99v6.67M646.5 421.66v5.64M644.5 432.94v12.82M646.5 450.38v2.05M649.5 463.72v2.56M651.5 469.36v4.62M655.5 134.4v6.67M655.5 227.24v3.08M655.5 243.66v4.1M655.5 270.84v3.59M653.5 279.05v17.44M653.5 312.39v4.62M651.5 394.98v1.03M649.5 397.55v22.06M649.5 453.46v1.54M651.5 456.54v1.54M653.5 467.31v3.59M658.5 144.14v6.67M658.5 168.25v11.8M658.5 184.67v8.21M658.5 194.41v2.56M660.5 200.57v4.1M660.5 219.55v2.56M658.5 224.68v3.08M658.5 247.76v3.08M660.5 252.89v2.56M660.5 265.2v2.56M658.5 269.31v1.54M655.5 326.76v3.08M653.5 337.02v1.54M655.5 341.63v1.54M655.5 351.89v5.64M655.5 389.85v1.54M653.5 392.42v1.03M651.5 431.91v15.39M653.5 455.51v2.05M655.5 459.1v2.05M662.5 200.06v5.64M662.5 206.72v8.21M660.5 225.19v2.56M658.5 231.35v9.75M660.5 246.22v3.59M660.5 275.46v2.05M658.5 280.08v9.75M660.5 291.88v2.56M660.5 319.06v2.05M658.5 323.17v2.05M658.5 352.41v4.1M660.5 361.13v14.88M660.5 380.11v1.54M658.5 384.72v1.54M655.5 425.76v3.59M653.5 433.97v11.29M655.5 449.36v3.08M658.5 462.18v2.05M660.5 466.8v3.59M664.5 131.83v4.1M664.5 226.22v5.13M664.5 243.14v7.18M664.5 265.2v2.56M662.5 277.51v4.62M662.5 287.77v4.1M664.5 295.98v2.05M664.5 316.5v1.54M662.5 320.09v2.05M660.5 332.4v2.05M658.5 335.99v7.69M660.5 346.25v2.05M662.5 358.56v3.59M662.5 377.03v4.62M660.5 403.19v12.31M658.5 420.63v3.59M658.5 452.95v1.54M660.5 456.02v1.54M662.5 465.26v3.08M664.5 471.93v3.08M667.5 139.01v8.21M667.5 185.18v12.31M669.5 209.29v9.75M667.5 224.68v6.67M667.5 242.12v9.75M667.5 262.64v2.56M667.5 306.24v2.05M669.5 309.83v3.08M667.5 314.96v1.54M664.5 330.86v2.56M662.5 337.53v12.31M664.5 354.46v7.18M664.5 366.77v1.03M664.5 380.11v2.56M664.5 384.72v5.13M664.5 399.09v1.03M662.5 414.47v4.62M660.5 433.45v11.29M662.5 455v1.54M664.5 458.08v1.54M671.5 151.32v32.83M669.5 269.82v2.05M667.5 273.41v2.56M667.5 287.77v3.08M669.5 292.9v2.56M669.5 323.68v3.08M667.5 330.35v2.05M667.5 347.28v5.64M667.5 357.02v4.62M667.5 387.29v3.08M667.5 394.98v.51M664.5 427.3v4.1M664.5 446.28v4.1M667.5 460.64v2.05M669.5 464.74v2.56M673.5 263.15v4.1M671.5 271.36v17.95M673.5 292.9v4.62M673.5 307.78v2.05M671.5 311.88v6.16M671.5 346.76v9.23M669.5 371.39v5.64M669.5 378.57v1.03M669.5 416.53v3.08M667.5 422.68v3.08M667.5 451.41v2.05M669.5 455v1.54M671.5 463.21v2.56M673.5 468.85v4.1M676.5 133.37v8.72M678.5 161.07v18.47M678.5 181.08v1.03M678.5 185.69v2.05M676.5 196.46v7.69M676.5 211.34v6.67M678.5 223.65v6.16M678.5 241.09v6.16M676.5 252.38v4.62M673.5 363.18v4.62M673.5 373.44v5.64M673.5 386.26v4.62M673.5 412.42v3.08M671.5 418.06v3.08M671.5 453.97v1.54M673.5 457.05v1.54M680.5 146.71v26.67M680.5 181.59v12.31M680.5 221.6v4.62M680.5 243.66v3.59M678.5 305.73v5.64M676.5 318.04v2.56M678.5 331.89v5.13M678.5 353.94v2.05M676.5 359.59v5.13M676.5 389.34v1.54M678.5 393.44v11.29M676.5 408.32v3.08M673.5 431.91v13.34M676.5 459.1v2.05M678.5 462.69v2.56M682.5 255.46v10.26M682.5 292.39v4.62M680.5 301.62v6.16M680.5 325.22v5.64M682.5 335.48v5.13M682.5 349.33v5.13M680.5 358.56v2.56M678.5 370.36v2.05M678.5 379.59v2.56M680.5 390.88v4.1M680.5 402.16v4.62M678.5 419.6v3.08M676.5 426.27v5.13M676.5 446.28v4.62M678.5 453.97v1.03M680.5 461.67v2.05M682.5 466.28v3.08M685.5 131.83v4.1M687.5 146.71v27.7M687.5 178v15.9M685.5 202.11v10.77M687.5 221.09v20.01M685.5 245.2v3.59M685.5 262.64v7.69M685.5 285.21v3.59M685.5 342.15v9.23M682.5 361.13v2.05M680.5 368.82v2.05M682.5 376.51v4.62M682.5 415.5v3.08M680.5 422.17v4.1M680.5 451.41v3.08M682.5 455.51v1.54M685.5 470.9v4.1M689.5 140.55v30.26M691.5 180.05v8.72M689.5 192.36v8.21M689.5 212.88v25.65M689.5 266.23v6.67M691.5 278.03v4.1M689.5 284.18v2.05M687.5 294.44v3.59M687.5 317.01v7.18M687.5 354.46v1.03M685.5 357.02v28.73M687.5 392.42v12.82M685.5 410.37v4.1M685.5 457.56v1.54M687.5 461.15v2.05M691.5 290.85v1.54M689.5 294.44v4.1M689.5 305.73v3.59M691.5 314.45v4.62M691.5 341.63v2.56M689.5 346.76v4.1M689.5 356.51v21.03M689.5 387.29v20.52M687.5 426.27v4.62M685.5 437.56v5.13M687.5 449.36v3.59M689.5 459.61v2.05M691.5 463.72v2.56M696.5 139.53v39.5M694.5 185.18v2.56M696.5 190.82v1.54M696.5 209.29v18.47M694.5 234.42v5.13M694.5 250.84v4.62M696.5 259.05v2.56M696.5 275.46v2.05M694.5 280.08v4.1M694.5 286.75v4.1M694.5 312.91v12.31M691.5 422.17v4.1M689.5 430.89v6.16M689.5 444.74v5.13M691.5 453.97v1.54M694.5 467.31v3.59M698.5 131.83v14.88M698.5 180.05v7.69M698.5 197.49v1.54M700.5 200.57v2.56M700.5 216.98v6.67M698.5 227.76v3.59M698.5 253.92v2.56M700.5 258.53v4.1M700.5 267.25v2.56M698.5 272.38v7.18M696.5 288.8v1.54M696.5 307.26v6.16M696.5 327.27v3.08M694.5 333.43v4.1M694.5 342.66v1.54M696.5 345.74v.51M696.5 352.41v4.1M696.5 383.7v7.69M696.5 402.68v7.69M694.5 418.06v4.62M694.5 456.02v1.54M696.5 459.1v1.54M698.5 473.98v1.03M700.5 286.75v1.54M698.5 290.34v2.05M698.5 296.49v1.54M700.5 299.57v3.08M698.5 303.67v1.03M700.5 307.78v2.05M700.5 329.84v3.08M698.5 337.53v11.29M698.5 350.35v4.62M700.5 358.56v3.08M700.5 379.08v4.1M698.5 388.31v29.24M696.5 436.02v9.75M698.5 457.56v2.05M700.5 461.15v2.05M705.5 131.83v15.9M705.5 168.25v22.57M705.5 198.52v5.13M703.5 217.5v36.93M703.5 259.05v6.16M705.5 272.38v3.08M703.5 281.1v4.62M703.5 307.78v4.1M705.5 316.5v9.23M703.5 328.81v2.56M703.5 363.69v5.64M703.5 372.41v6.16M700.5 430.38v5.13M700.5 446.28v5.13M703.5 464.23v3.08M705.5 471.93v3.08M707.5 131.83v4.1M707.5 214.42v7.69M707.5 284.18v.51M707.5 309.32v3.08M707.5 320.09v2.56M705.5 329.84v1.54M703.5 334.45v3.59M703.5 344.2v3.59M705.5 350.87v4.1M705.5 416.01v5.64M703.5 425.76v4.1M703.5 451.41v3.59M705.5 456.54v2.05M707.5 468.34v6.67M709.5 319.06v6.16M707.5 333.43v16.93M709.5 356v5.13M709.5 386.26v28.73M707.5 421.14v4.1M707.5 455.51v1.54M709.5 458.59v2.05M714.5 206.72v22.06M714.5 244.68v8.72M712.5 259.56v23.08M712.5 288.29v3.08M714.5 293.41v3.59M714.5 300.6v5.13M712.5 307.78v1.54M712.5 366.77v17.95M712.5 461.15v2.56M714.5 466.8v7.18M718.5 233.91v8.21M716.5 250.84v5.13M714.5 424.73v5.13M712.5 436.53v9.23M714.5 451.92v3.59M716.5 464.23v3.59M718.5 418.58v6.16M716.5 429.86v7.69M716.5 444.74v6.67M718.5 455.51v2.05M723.5 213.91v4.1M723.5 250.84v5.64M721.5 262.64v11.29M723.5 280.08v18.98M721.5 304.7v6.67M721.5 319.58v7.69M721.5 348.3v7.69M721.5 370.36v10.26M721.5 408.83v9.23M721.5 457.56v2.56M723.5 462.69v3.59M727.5 131.83v63.61M727.5 231.35v14.36M725.5 254.43v7.18M725.5 275.46v9.23M725.5 293.93v7.18M725.5 329.32v18.47M725.5 384.21v22.06M725.5 460.13v3.08M727.5 467.82v7.18M727.5 430.89v20.01M732.5 260.07v41.04M732.5 328.3v24.11M732.5 377.03v38.99M730.5 424.22v6.67M730.5 450.38v5.13M732.5 458.08v3.08M736.5 138.5v87.72M736.5 247.25v5.64M734.5 287.77v48.22M734.5 347.79v31.8M734.5 414.99v8.72M734.5 455.51v3.08M736.5 461.67v5.13M741.5 308.8v30.78M741.5 423.19v8.72M741.5 449.36v6.16M745.5 150.3v125.68M745.5 351.38v43.6M745.5 409.34v13.85M743.5 432.43v16.41M745.5 455.51v3.59M748.5 131.83v9.75M748.5 460.13v14.88M754.5 271.87v72.33M754.5 433.45v13.85M757.5 136.96v12.82M757.5 178v44.11M757.5 351.89v31.29M757.5 420.12v13.34M757.5 447.3v8.72M759.5 465.26v1.03M761.5 387.8v30.78M761.5 456.54v17.95M768.5 131.83v2.05M766.5 145.17v1.03M768.5 367.79v65.15M768.5 445.76v14.36M768.5 467.82v7.18M770.5 131.83v8.21M770.5 183.64v197.49M770.5 425.25v25.14M770.5 472.95v2.05M777.5 131.83v231.86M777.5 474.49v.51" fill="none" stroke="#0000ff" stroke-width="1" stroke-opacity="0.333"/><path d="M465.19 139.5h124.88M590.06 138.5h189.56M779.62 139.5h1.12M465.19 156.5h14.06M590.62 156.5h40.5M660.38 155.5h37.12M761.62 155.5h7.31M776.81 156.5h3.94M465.19 159.5h27.56M574.88 159.5h43.31M618.19 159.5h38.25M656.44 158.5h33.19M689.62 158.5h74.25M763.88 158.5h7.31M771.19 159.5h8.44M779.62 159.5h1.12M482.62 177.5h155.81M653.62 176.5h22.5M682.88 177.5h7.88M693 176.5h9M768.38 176.5h8.44M513.56 180.5h124.31M647.44 179.5h19.12M670.5 180.5h11.81M684 179.5h1.69M690.75 179.5h7.88M734.06 178.5h28.69M771.19 179.5h7.88M576.56 195.5h16.88M646.88 195.5h4.5M465.19 197.5h50.06M515.25 197.5h54.56M569.81 198.5h42.75M612.56 197.5h19.12M631.69 197.5h3.94M635.62 197.5h4.5M640.12 198.5h4.5M644.62 198.5h.56M645.19 198.5h2.25M647.44 197.5h1.69M649.12 197.5h5.62M654.75 197.5h3.38M658.12 198.5h9M667.12 197.5h9M676.12 197.5h16.31M697.5 197.5h8.44M736.88 196.5h29.25M775.69 197.5h5.06M465.19 200.5h88.31M623.25 200.5h13.5M644.06 200.5h2.25M647.44 200.5h2.25M673.88 200.5h6.19M700.31 200.5h6.75M729.56 199.5h39.38M778.5 200.5h2.25M549 215.5h5.06M572.06 215.5h3.38M599.06 215.5h2.81M605.25 216.5h5.06M610.31 216.5h13.5M623.81 216.5h1.69M626.62 215.5h.56M641.25 215.5h7.31M653.62 215.5h3.94M659.81 216.5h2.25M669.38 215.5h3.38M465.19 217.5h18.56M483.75 217.5h6.75M490.5 217.5h55.12M545.62 218.5h5.62M551.25 218.5h5.62M569.25 218.5h4.5M573.75 218.5h3.94M577.69 217.5h3.94M581.62 217.5h12.38M594 217.5h3.38M597.38 218.5h3.38M600.75 218.5h3.38M608.62 219.5h5.62M621 219.5h1.12M622.69 218.5h1.12M623.81 218.5h7.88M631.69 218.5h16.31M648 218.5h6.19M654.19 218.5h2.25M660.38 218.5h6.75M667.12 218.5h43.88M711 217.5h25.31M736.31 217.5h37.69M774 217.5h6.75M530.44 235.5h16.31M575.44 235.5h2.25M579.94 236.5h2.25M582.19 236.5h3.38M585.56 237.5h3.94M589.5 237.5h5.62M595.12 238.5h1.69M596.81 237.5h2.25M599.06 237.5h1.12M600.19 236.5h.56M600.75 236.5h.56M602.44 235.5h1.69M622.69 235.5h2.81M628.31 236.5h2.25M630.56 236.5h2.25M632.81 237.5h2.25M635.06 237.5h9.56M644.62 237.5h2.25M646.88 236.5h1.69M648.56 236.5h1.12M651.94 235.5h3.38M671.62 235.5h2.81M676.69 236.5h2.25M678.94 236.5h2.81M681.75 237.5h2.81M684.56 237.5h7.31M691.88 237.5h3.38M695.25 236.5h2.81M698.06 236.5h3.38M704.25 235.5h5.06M725.06 235.5h15.19M465.19 238.5h9.56M474.75 237.5h49.5M524.25 238.5h14.06M538.31 238.5h3.94M542.25 238.5h9M551.25 237.5h5.62M556.88 237.5h14.62M571.5 237.5h2.81M574.31 238.5h2.25M576.56 238.5h1.69M580.5 239.5h2.25M597.38 239.5h2.25M603.56 238.5h5.06M608.62 238.5h8.44M617.06 238.5h2.25M619.31 238.5h6.75M626.06 238.5h2.81M631.12 239.5h2.81M648.56 239.5h1.69M653.06 238.5h2.81M655.88 238.5h12.38M668.25 238.5h4.5M676.12 239.5h3.38M694.69 239.5h3.94M703.12 238.5h6.19M709.31 238.5h19.69M729 238.5h1.69M730.69 238.5h27M757.69 237.5h10.69M768.38 238.5h12.38M652.5 254.5h3.94M660.38 255.5h.56M671.62 255.5h2.25M676.12 254.5h1.69M465.19 255.5h11.25M519.75 254.5h17.44M543.38 255.5h5.62M552.94 256.5h2.81M555.75 256.5h2.81M558.56 256.5h1.12M563.62 256.5h5.62M570.94 256.5h7.88M579.38 255.5h1.69M586.69 255.5h6.19M600.19 256.5h2.81M603 256.5h5.62M608.62 256.5h2.25M610.88 256.5h15.75M626.62 256.5h5.62M645.75 256.5h3.38M649.12 256.5h2.81M651.94 257.5h3.38M655.31 257.5h2.81M658.12 258.5h2.25M660.38 258.5h.56M671.06 258.5h2.25M673.31 258.5h1.69M675 257.5h1.69M676.69 257.5h1.69M678.38 256.5h1.69M680.06 256.5h1.69M684 255.5h2.81M697.5 255.5h3.38M703.69 256.5h2.81M706.5 256.5h2.81M709.31 257.5h13.5M722.81 256.5h5.06M727.88 256.5h5.06M751.5 255.5h29.25M465.19 258.5h7.31M472.5 258.5h10.12M482.62 257.5h57.94M540.56 258.5h5.62M546.19 258.5h3.94M552.38 259.5h3.94M563.06 259.5h7.31M574.88 259.5h.56M576 258.5h.56M576.56 258.5h21.94M598.5 258.5h3.38M604.69 259.5h1.12M608.62 259.5h2.81M631.69 259.5h4.5M647.44 259.5h3.94M679.5 259.5h2.25M684 258.5h3.38M687.38 258.5h10.12M697.5 258.5h3.38M704.25 259.5h2.81M726.75 259.5h5.62M742.5 258.5h38.25M617.06 274.5h2.81M621 275.5h1.69M636.19 275.5h3.94M642.94 274.5h3.38M674.44 274.5h5.06M686.25 275.5h4.5M695.25 275.5h1.69M698.62 274.5h1.69M705.94 274.5h3.94M474.75 275.5h9M519.75 275.5h6.19M535.5 276.5h6.19M544.5 275.5h.56M546.75 274.5h10.69M560.25 275.5h3.38M567 275.5h1.69M571.5 276.5h3.38M574.88 276.5h14.62M589.5 276.5h7.31M597.94 275.5h7.31M608.06 276.5h1.69M609.75 276.5h1.69M611.44 277.5h6.75M618.19 277.5h1.12M621 278.5h1.12M626.06 278.5h11.81M642.38 277.5h3.38M645.75 277.5h3.38M649.12 276.5h3.94M653.06 276.5h7.88M663.75 276.5h1.12M664.88 276.5h7.31M672.19 277.5h3.94M676.12 277.5h4.5M685.12 278.5h2.81M690.75 279.5h.56M693.56 278.5h1.69M698.06 278.5h4.5M705.38 277.5h3.38M708.75 277.5h3.38M712.12 276.5h6.19M718.31 276.5h10.12M728.44 276.5h21.38M749.81 276.5h15.75M471.94 278.5h8.44M502.31 277.5h9.56M520.88 278.5h6.19M546.19 277.5h12.38M560.81 277.5h1.12M561.94 277.5h1.69M563.62 277.5h2.25M568.12 278.5h2.25M573.75 279.5h4.5M587.81 279.5h2.81M593.44 279.5h2.81M597.38 278.5h2.25M605.81 279.5h5.62M655.31 279.5h10.12M716.06 279.5h18M747 279.5h14.06M597.94 294.5h2.25M603 295.5h6.75M609.75 295.5h1.69M611.44 295.5h1.12M617.06 294.5h3.94M646.31 294.5h1.69M649.69 295.5h1.69M651.38 295.5h1.69M653.06 296.5h2.81M655.88 296.5h11.81M667.69 296.5h2.81M670.5 295.5h3.38M673.88 295.5h3.38M681.19 294.5h15.75M697.5 295.5h8.44M720.56 294.5h21.38M465.19 296.5h.56M465.75 296.5h9M474.75 295.5h7.88M482.62 295.5h28.69M511.31 295.5h11.81M523.12 295.5h6.19M538.88 294.5h6.19M549 295.5h3.94M552.94 295.5h3.94M556.88 296.5h3.38M560.25 296.5h4.5M564.75 297.5h5.62M570.38 296.5h3.38M573.75 296.5h3.38M577.12 295.5h8.44M585.56 295.5h5.62M591.19 295.5h1.69M592.88 296.5h1.12M594 296.5h1.69M595.69 297.5h1.69M597.38 297.5h2.25M601.31 298.5h1.69M608.06 297.5h10.12M618.19 297.5h2.81M621 296.5h2.25M623.25 296.5h2.81M626.06 295.5h11.81M637.88 296.5h2.81M640.69 296.5h2.25M642.94 297.5h1.69M644.62 297.5h1.69M648 298.5h2.25M651.94 299.5h2.81M668.25 299.5h2.25M673.31 298.5h2.25M678.38 297.5h3.94M682.31 297.5h8.44M690.75 297.5h4.5M695.25 297.5h1.69M696.94 297.5h1.69M712.69 297.5h2.25M722.25 297.5h15.75M738 297.5h18M756 296.5h24.75M465.19 299.5h6.75M479.81 298.5h45M529.88 297.5h5.06M534.94 297.5h6.19M541.12 297.5h1.12M542.81 298.5h9M555.19 299.5h3.38M572.62 299.5h2.81M579.38 298.5h7.31M591.19 299.5h2.25M621.56 299.5h2.81M635.06 299.5h2.81M767.25 299.5h13.5M642.38 314.5h3.94M551.81 314.5h4.5M585.56 314.5h.56M592.31 314.5h2.81M600.75 314.5h5.62M627.19 315.5h1.12M628.31 315.5h.56M628.88 316.5h2.25M631.12 316.5h3.38M634.5 317.5h5.06M639.56 317.5h2.81M642.38 317.5h5.62M648 316.5h3.38M651.38 316.5h2.81M654.19 315.5h2.81M657 315.5h2.81M662.06 314.5h2.81M671.06 314.5h1.69M677.25 315.5h2.81M680.06 315.5h2.81M682.88 316.5h4.5M687.38 316.5h8.44M695.81 316.5h7.31M703.12 315.5h6.75M709.88 315.5h1.69M714.94 315.5h25.31M750.38 314.5h14.62M465.19 317.5h1.12M466.31 316.5h9M475.31 316.5h7.88M483.19 315.5h29.25M512.44 315.5h17.44M529.88 315.5h5.62M535.5 316.5h4.5M540 316.5h3.94M543.94 317.5h5.06M549 316.5h4.5M553.5 317.5h2.81M556.31 316.5h2.81M559.12 316.5h2.81M561.94 315.5h5.06M567 315.5h7.88M574.88 315.5h2.81M577.69 316.5h2.25M579.94 316.5h3.94M583.88 316.5h2.81M586.69 316.5h1.69M588.38 317.5h1.69M590.06 317.5h13.5M603.56 317.5h5.06M608.62 316.5h4.5M613.12 317.5h5.06M618.19 316.5h1.69M619.88 316.5h2.25M622.12 316.5h2.25M624.38 317.5h2.25M626.62 317.5h1.12M628.31 318.5h.56M652.5 318.5h2.25M657.56 317.5h2.81M660.38 317.5h3.38M663.75 316.5h7.31M671.06 317.5h.56M671.62 317.5h2.81M676.12 318.5h2.25M708.75 318.5h.56M715.5 318.5h20.81M747 317.5h15.19M762.19 317.5h18.56M505.69 318.5h25.31M561.94 318.5h6.19M569.25 318.5h5.06M581.06 318.5h1.69M671.06 334.5h2.25M684.56 334.5h3.94M465.19 334.5h4.5M577.69 334.5h21.94M605.81 334.5h1.12M609.19 335.5h1.69M610.88 335.5h3.38M614.25 336.5h4.5M618.75 336.5h10.12M628.88 336.5h6.75M635.62 336.5h2.25M637.88 336.5h2.25M640.12 335.5h2.25M642.38 335.5h1.69M646.88 334.5h3.38M652.5 335.5h1.69M654.19 335.5h1.69M655.88 336.5h1.69M657.56 336.5h3.94M661.5 337.5h3.38M664.88 337.5h2.81M672.19 338.5h7.31M683.44 337.5h2.81M686.25 337.5h3.38M689.62 336.5h2.25M691.88 336.5h.56M692.44 335.5h1.12M693.56 335.5h5.06M698.62 335.5h4.5M703.12 335.5h2.81M705.94 335.5h4.5M710.44 336.5h20.81M731.25 335.5h9M740.25 335.5h21.38M770.62 334.5h10.12M465.19 337.5h1.69M466.88 337.5h9M475.88 336.5h7.31M483.19 336.5h57.38M540.56 335.5h20.25M560.81 336.5h2.25M563.06 336.5h1.12M564.19 337.5h7.88M572.06 337.5h18.56M590.62 337.5h5.06M595.69 337.5h6.75M602.44 337.5h2.81M605.25 337.5h2.25M609.19 338.5h2.81M634.5 338.5h1.12M636.19 337.5h18.56M656.44 338.5h1.12M691.88 338.5h2.25M695.25 338.5h10.69M738 338.5h21.38M767.81 337.5h12.94M545.06 338.5h9.56M583.31 353.5h5.62M635.06 353.5h5.06M645.19 354.5h20.81M671.06 353.5h6.75M682.31 353.5h6.75M691.31 353.5h2.81M699.19 354.5h11.81M720 353.5h28.12M470.25 354.5h9M498.94 353.5h28.69M550.69 353.5h16.88M568.69 354.5h.56M573.75 355.5h5.62M579.38 355.5h8.44M587.81 355.5h11.81M603.56 354.5h7.31M612 354.5h7.31M622.69 355.5h2.81M625.5 355.5h2.25M627.75 355.5h1.69M629.44 355.5h2.81M632.25 356.5h2.25M634.5 356.5h2.81M641.25 357.5h3.94M657 357.5h4.5M665.44 356.5h3.38M668.81 356.5h3.94M672.75 355.5h8.44M681.19 356.5h4.5M685.69 355.5h3.38M689.06 356.5h2.25M691.31 356.5h1.69M696.94 357.5h15.19M717.75 356.5h24.19M741.94 356.5h17.44M759.38 355.5h6.75M766.12 355.5h7.88M466.88 357.5h9.56M484.31 356.5h29.25M513.56 356.5h7.88M521.44 356.5h9M553.5 356.5h15.19M569.25 357.5h6.75M584.44 357.5h4.5M592.88 358.5h3.94M605.25 357.5h15.19M623.25 358.5h6.75M672.19 358.5h6.75M685.12 358.5h1.12M764.44 358.5h6.75M604.69 373.5h2.25M609.75 374.5h2.81M615.94 375.5h1.69M618.75 374.5h1.69M626.06 373.5h2.81M649.12 373.5h3.94M657.56 374.5h7.88M676.12 374.5h1.12M682.31 374.5h14.62M720 374.5h18.56M758.25 373.5h7.31M465.19 375.5h5.06M478.69 374.5h16.31M514.12 374.5h11.81M549 374.5h4.5M558 375.5h11.81M573.75 374.5h3.94M580.5 373.5h3.94M588.38 373.5h3.94M594.56 374.5h2.25M598.5 375.5h2.25M600.75 375.5h1.69M602.44 376.5h2.25M604.69 376.5h2.25M609.19 377.5h1.69M613.12 378.5h3.94M617.62 377.5h6.75M626.62 376.5h1.69M628.31 376.5h2.25M630.56 375.5h3.38M633.94 375.5h13.5M647.44 375.5h3.94M651.38 376.5h3.38M654.75 376.5h2.81M659.81 377.5h1.69M664.31 378.5h1.12M672.75 378.5h1.12M676.69 377.5h59.06M754.31 376.5h10.12M764.44 376.5h5.62M770.06 375.5h6.19M776.25 375.5h4.5M465.19 378.5h2.25M475.88 377.5h7.31M534.94 376.5h12.94M552.38 377.5h3.94M560.81 378.5h9M573.75 377.5h5.06M581.06 376.5h3.94M585 376.5h3.94M588.94 376.5h3.38M595.12 377.5h2.25M599.06 378.5h2.25M632.81 378.5h3.94M646.31 378.5h4.5M774.56 378.5h6.19M600.75 393.5h4.5M631.12 393.5h2.81M637.31 394.5h3.94M641.25 394.5h3.38M644.62 395.5h6.19M650.81 394.5h1.12M651.94 394.5h1.12M660.38 394.5h4.5M664.88 394.5h3.94M668.81 394.5h1.12M674.44 394.5h2.25M676.69 394.5h3.94M680.62 395.5h6.19M686.81 395.5h7.31M694.12 395.5h9.56M703.69 394.5h52.31M756 394.5h8.44M768.94 393.5h5.06M465.19 395.5h5.06M470.25 395.5h7.88M478.12 394.5h7.88M486 394.5h87.75M573.75 394.5h7.88M581.62 395.5h.56M582.19 396.5h9.56M591.75 396.5h5.62M597.38 396.5h6.75M604.12 395.5h1.12M605.25 395.5h.56M605.81 394.5h.56M606.38 394.5h15.19M621.56 394.5h3.38M624.94 395.5h2.81M627.75 395.5h2.25M630 396.5h2.25M632.25 396.5h1.69M636.19 397.5h2.25M640.69 398.5h1.69M646.88 398.5h1.69M649.12 397.5h3.94M653.62 397.5h11.81M666 396.5h1.12M667.12 396.5h3.38M670.5 396.5h2.81M676.69 397.5h4.5M685.69 398.5h16.88M751.5 397.5h12.38M767.81 396.5h4.5M772.31 396.5h5.62M777.94 395.5h2.81M467.44 398.5h7.88M482.06 397.5h34.88M534.94 397.5h21.94M573.75 397.5h7.31M582.19 398.5h1.12M603.56 398.5h1.12M605.81 397.5h3.38M621.56 397.5h3.38M627.19 398.5h1.69M622.69 413.5h5.06M636.75 413.5h14.06M662.62 414.5h10.12M672.75 414.5h22.5M695.25 415.5h15.75M711 415.5h24.75M735.75 415.5h27.56M763.31 414.5h3.94M767.25 414.5h3.94M775.12 413.5h5.06M465.19 416.5h5.06M470.25 415.5h6.19M476.44 415.5h5.62M482.06 414.5h15.19M497.25 414.5h24.75M583.88 413.5h6.75M592.31 414.5h6.75M603.56 414.5h5.06M608.62 414.5h5.06M613.69 415.5h2.25M615.94 415.5h2.81M618.75 416.5h3.94M622.69 415.5h1.69M624.38 415.5h6.19M630.56 415.5h18M648.56 416.5h6.75M655.31 416.5h5.62M666 417.5h12.38M766.12 417.5h3.94M774 416.5h4.5M778.5 416.5h2.25M485.44 417.5h21.94M528.75 416.5h50.06M578.81 416.5h10.12M588.94 415.5h3.94M592.88 416.5h.56M593.44 416.5h.56M594.56 416.5h4.5M599.06 416.5h1.69M600.75 416.5h3.38M608.62 417.5h3.94M706.5 432.5h25.31M758.81 432.5h6.19M465.19 433.5h6.75M477.56 432.5h5.06M652.5 432.5h4.5M662.06 433.5h6.19M677.81 434.5h11.25M689.06 434.5h11.25M700.31 435.5h15.75M716.06 435.5h47.81M763.88 435.5h3.94M767.81 434.5h3.94M771.75 434.5h3.94M780.19 433.5h.56M465.19 436.5h4.5M469.69 436.5h6.19M475.88 435.5h5.06M480.94 435.5h4.5M485.44 434.5h10.12M495.56 434.5h12.94M520.31 433.5h11.25M542.25 432.5h10.69M607.5 432.5h7.88M624.38 433.5h8.44M639.56 434.5h5.62M645.19 434.5h5.06M650.25 435.5h5.06M655.31 435.5h6.19M661.5 436.5h7.31M668.81 436.5h8.44M685.69 437.5h9.56M770.62 437.5h3.94M779.06 436.5h1.69M489.38 437.5h13.5M514.12 436.5h10.69M524.81 436.5h10.12M534.94 435.5h10.12M545.06 435.5h10.69M555.75 434.5h16.31M572.06 434.5h12.94M585 434.5h23.62M608.62 435.5h9.56M618.19 435.5h7.88M626.06 436.5h6.19M632.25 436.5h5.62M642.94 437.5h5.06M559.69 437.5h47.25M708.75 452.5h15.19M765.56 452.5h3.94M471.94 453.5h5.06M482.06 452.5h3.94M656.44 452.5h7.31M670.5 453.5h7.31M685.12 454.5h8.44M693.56 454.5h9.56M703.12 455.5h11.81M714.94 455.5h17.44M764.44 455.5h3.94M768.38 455.5h3.94M772.31 454.5h3.94M776.25 454.5h3.94M469.69 456.5h6.19M480.38 455.5h11.81M492.19 455.5h15.19M507.38 454.5h12.94M520.31 454.5h12.38M545.06 453.5h14.06M610.88 453.5h11.25M631.69 454.5h7.88M639.56 454.5h7.31M646.88 455.5h7.88M654.75 455.5h8.44M671.62 456.5h9M689.62 457.5h11.25M775.12 457.5h3.94M536.62 457.5h17.44M614.81 457.5h14.06M465.19 474.5h315.56M468.5 131.83v294.44M468.5 451.92v23.08M472.5 131.83v292.39M472.5 424.22v29.24M472.5 453.46v12.82M472.5 472.44v2.56M476.5 423.19v30.78M481.5 131.83v1.54M481.5 133.37v11.29M481.5 323.17v44.63M481.5 367.79v40.52M481.5 408.32v8.21M481.5 458.08v5.64M481.5 463.72v11.29M485.5 137.99v10.26M485.5 307.26v43.6M485.5 411.4v5.64M486.5 426.79v6.67M486.5 443.2v6.16M485.5 456.54v4.62M490.5 428.84v18.98M490.5 131.83v3.59M490.5 348.81v29.75M490.5 378.57v24.11M490.5 402.68v8.72M490.5 462.18v12.82M494.5 131.83v7.69M494.5 332.91v29.24M494.5 407.81v6.16M495.5 422.68v4.62M495.5 449.36v3.59M494.5 460.13v14.88M499.5 424.22v4.62M499.5 428.84v8.21M499.5 439.61v8.21M499.5 447.82v4.1M499.5 361.13v47.19M503.5 430.38v15.39M504.5 149.79v116.96M503.5 347.79v24.62M503.5 404.21v6.67M504.5 419.6v4.1M504.5 452.43v3.08M503.5 465.77v7.69M508.5 152.86v64.12M508.5 421.14v4.1M508.5 425.25v4.1M508.5 447.3v4.1M508.5 451.41v2.56M508.5 369.85v34.37M512.5 426.79v4.62M512.5 444.74v4.62M513.5 142.09v8.72M513.5 247.25v63.61M512.5 362.15v16.41M512.5 397.03v10.77M513.5 417.04v3.59M513.5 454.49v3.59M517.5 145.68v116.96M517.5 289.82v16.41M517.5 419.09v3.08M517.5 422.17v3.59M517.5 449.87v3.08M517.5 452.95v3.59M517.5 374.98v21.03M521.5 424.22v3.59M521.5 448.33v3.59M522.5 135.42v8.21M522.5 284.69v35.91M521.5 365.23v38.47M522.5 414.99v3.59M522.5 457.05v4.62M526.5 138.5v8.21M526.5 146.71v100.03M526.5 246.74v20.52M526.5 267.25v12.82M526.5 280.08v10.77M526.5 311.88v11.29M526.5 417.04v3.59M526.5 420.63v3.08M526.5 451.92v3.08M526.5 455v4.1M530.5 149.79v90.79M530.5 267.25v12.31M530.5 422.17v3.08M530.5 450.38v3.08M531.5 131.83v5.13M531.5 287.77v3.59M531.5 307.78v4.62M531.5 333.94v4.1M530.5 349.84v9.23M530.5 384.21v16.41M531.5 412.94v4.1M531.5 459.61v15.39M535.5 131.83v8.21M535.5 140.04v8.21M535.5 240.07v19.49M535.5 282.64v3.08M535.5 285.72v2.56M535.5 310.86v4.1M535.5 314.96v4.1M535.5 329.32v4.1M535.5 333.43v3.08M535.5 414.99v3.59M535.5 418.58v3.08M535.5 452.95v4.1M535.5 457.05v6.67M535.5 473.98v1.03M539.5 143.12v8.21M539.5 232.37v28.73M539.5 286.23v2.56M539.5 317.52v14.36M539.5 420.12v3.59M540.5 433.45v7.18M539.5 451.41v3.59M544.5 274.95v2.05M540.5 291.36v2.05M540.5 295.47v17.44M540.5 335.99v3.59M539.5 387.29v12.82M540.5 411.4v3.59M540.5 465.77v5.13M544.5 131.83v1.54M544.5 133.37v8.21M544.5 275.46v2.05M544.5 277.51v8.21M544.5 302.14v2.56M544.5 304.7v1.54M544.5 306.24v11.8M544.5 318.04v14.36M544.5 332.4v5.13M544.5 413.45v3.59M544.5 417.04v3.59M544.5 454.49v5.64M544.5 460.13v14.88M548.5 136.96v7.69M548.5 220.57v11.29M548.5 270.33v1.03M548.5 279.56v7.18M548.5 288.8v6.16M548.5 308.8v2.56M548.5 419.09v3.59M549.5 432.94v7.69M548.5 451.92v5.13M549.5 270.33v1.03M553.5 287.26v.51M549.5 306.24v4.62M549.5 319.58v4.1M549.5 324.19v46.17M548.5 389.85v3.59M549.5 409.34v4.62M553.5 131.83v3.59M553.5 263.15v.51M553.5 263.66v1.03M553.5 270.84v2.56M553.5 273.41v3.08M553.5 307.26v1.54M553.5 308.8v1.54M553.5 316.5v4.62M553.5 335.99v9.23M553.5 345.22v6.16M553.5 351.38v12.82M553.5 411.91v4.62M553.5 416.53v3.59M553.5 456.54v18.47M557.5 131.83v6.67M558.5 183.64v27.19M558.5 235.45v5.13M558.5 254.43v2.56M557.5 258.53v1.03M557.5 274.95v2.05M558.5 287.26v2.56M558.5 301.11v3.08M557.5 308.8v1.54M557.5 419.09v4.1M557.5 452.43v8.21M557.5 471.93v3.08M562.5 192.87v13.85M562.5 235.96v14.36M558.5 268.28v.51M562.5 286.75v2.56M562.5 289.31v12.31M562.5 301.62v2.56M558.5 313.42v1.54M557.5 318.55v3.08M557.5 323.68v1.03M558.5 327.78v2.05M558.5 359.59v7.18M558.5 407.29v6.67M562.5 263.15v8.21M562.5 275.46v1.54M562.5 277v.51M562.5 277.51v2.05M566.5 295.47v2.05M562.5 311.37v1.54M562.5 312.91v2.56M562.5 333.43v2.05M562.5 335.48v1.54M562.5 351.89v2.56M562.5 354.46v4.1M562.5 411.91v5.64M562.5 417.55v4.1M562.5 460.13v8.72M566.5 131.83v.51M567.5 147.22v61.04M567.5 220.57v11.8M567.5 246.22v7.69M566.5 270.33v1.03M566.5 277.51v2.05M567.5 285.21v4.62M567.5 302.14v3.08M566.5 310.34v2.56M566.5 346.25v8.21M566.5 420.63v4.1M566.5 452.43v22.57M571.5 149.79v37.45M571.5 201.08v12.31M571.5 213.39v14.36M571.5 227.76v17.44M567.5 342.15v4.1M567.5 351.89v3.08M567.5 360.61v8.72M567.5 372.92v9.23M567.5 390.36v12.31M567.5 405.24v9.23M575.5 213.91v12.82M571.5 328.81v.51M571.5 340.61v4.1M571.5 344.71v2.05M571.5 363.69v7.18M571.5 370.87v14.36M571.5 385.24v10.26M571.5 412.42v5.64M571.5 418.06v4.1M576.5 141.06v7.18M576.5 187.74v15.9M576.5 235.45v15.39M576.5 257.51v7.69M576.5 270.84v5.64M575.5 289.31v7.18M576.5 316.5v4.62M575.5 339.07v4.62M571.5 357.54v7.18M575.5 375.49v2.05M575.5 385.75v4.1M575.5 420.63v5.64M575.5 449.36v15.39M580.5 143.63v7.18M580.5 150.81v33.86M580.5 184.67v21.03M580.5 205.7v5.13M580.5 227.24v5.13M580.5 232.37v5.13M580.5 247.76v3.08M580.5 250.84v3.59M580.5 254.43v5.13M580.5 259.56v3.08M580.5 267.25v6.16M580.5 273.41v3.59M580.5 314.96v3.59M576.5 349.84v3.59M576.5 378.57v3.08M576.5 398.57v15.39M584.5 155.94v26.16M584.5 207.75v7.18M584.5 221.09v7.18M584.5 249.81v.51M584.5 256.99v3.08M584.5 268.28v5.13M580.5 288.29v9.75M580.5 345.74v4.62M580.5 350.35v4.1M580.5 390.36v1.54M580.5 391.9v2.05M580.5 397.55v4.62M580.5 402.16v3.59M580.5 410.88v6.67M580.5 417.55v5.64M585.5 135.42v6.67M585.5 235.96v6.67M585.5 278.03v2.56M584.5 286.75v13.34M585.5 309.32v5.64M584.5 346.76v7.69M584.5 356v1.54M584.5 422.17v35.91M589.5 137.99v7.18M589.5 145.17v6.67M589.5 198.52v5.13M589.5 219.55v10.77M589.5 230.32v10.26M589.5 240.58v5.64M589.5 246.22v4.62M589.5 250.84v2.05M589.5 272.9v3.08M589.5 275.97v3.08M585.5 363.18v5.13M585.5 377.54v18.98M585.5 403.7v1.54M593.5 147.73v25.14M593.5 200.57v20.01M593.5 239.55v3.08M593.5 249.81v3.08M593.5 268.79v10.77M589.5 361.64v2.56M589.5 364.2v2.56M589.5 388.31v13.85M589.5 409.34v1.03M589.5 410.37v23.08M589.5 441.15v8.72M594.5 131.83v4.62M594.5 243.66v.51M594.5 281.62v1.54M594.5 294.95v4.1M594.5 305.21v1.54M593.5 319.58v5.64M593.5 331.37v5.13M594.5 341.12v2.56M594.5 345.74v1.03M594.5 354.46v2.05M593.5 362.66v2.05M593.5 416.01v7.18M593.5 433.45v23.08M594.5 471.93v3.08M598.5 132.34v6.67M598.5 139.01v6.67M598.5 220.57v9.75M598.5 238.01v1.03M598.5 239.04v3.59M598.5 242.63v4.62M598.5 272.9v1.54M598.5 274.44v2.56M598.5 286.23v8.72M598.5 294.95v6.16M598.5 301.62v1.03M598.5 302.65v1.54M598.5 350.87v6.67M594.5 370.36v3.08M594.5 386.26v6.16M594.5 410.37v2.05M594.5 418.06v1.03M602.5 141.58v6.67M602.5 220.57v5.64M602.5 234.42v1.03M602.5 241.61v13.85M602.5 265.71v1.54M602.5 289.31v10.26M598.5 322.65v4.62M598.5 327.27v4.62M598.5 331.89v3.08M598.5 368.82v2.56M598.5 371.39v3.08M598.5 389.85v6.16M598.5 396.01v3.08M598.5 412.94v2.56M598.5 415.5v2.05M598.5 425.76v8.72M598.5 434.48v17.44M603.5 300.6v.51M603.5 312.39v4.1M602.5 323.17v3.59M602.5 329.84v7.69M602.5 342.66v2.05M603.5 349.84v14.36M602.5 370.87v3.08M602.5 394.47v2.56M602.5 403.7v2.05M602.5 450.38v5.64M603.5 467.31v6.16M607.5 131.83v2.05M607.5 133.88v6.67M607.5 254.94v2.05M607.5 256.99v5.64M607.5 262.64v2.56M607.5 288.8v2.05M607.5 290.85v3.08M607.5 299.06v3.08M607.5 302.14v11.8M607.5 313.93v4.62M603.5 335.48v1.54M603.5 337.53v4.1M607.5 360.61v2.05M603.5 399.09v2.05M603.5 403.7v33.86M607.5 469.87v5.13M611.5 136.45v6.16M612.5 212.88v8.21M612.5 227.24v.51M611.5 248.79v2.05M611.5 261.61v3.59M611.5 278.03v2.56M611.5 290.34v1.54M611.5 292.39v4.1M611.5 305.73v16.93M607.5 329.84v1.03M607.5 330.86v2.56M607.5 340.61v5.64M607.5 346.25v3.08M607.5 389.34v2.56M607.5 391.9v1.03M607.5 402.16v4.62M607.5 406.78v5.13M607.5 411.91v8.21M607.5 439.61v9.75M607.5 449.36v3.59M616.5 215.96v3.08M616.5 219.04v5.13M616.5 224.16v1.54M612.5 248.27v6.16M616.5 272.9v2.05M612.5 288.8v2.05M612.5 298.03v2.56M612.5 323.68v2.05M611.5 330.35v4.62M611.5 351.89v2.56M612.5 360.61v5.13M612.5 380.11v3.08M611.5 386.26v1.03M611.5 452.43v3.59M612.5 464.23v4.62M616.5 131.83v3.59M620.5 219.55v1.03M616.5 275.97v5.13M616.5 281.1v4.1M616.5 299.57v4.1M616.5 303.67v3.08M616.5 320.6v5.64M616.5 326.24v4.1M612.5 341.12v9.23M616.5 364.72v3.08M616.5 367.79v3.08M616.5 376v2.56M616.5 378.57v1.03M612.5 386.26v9.23M612.5 421.14v5.13M612.5 441.66v7.18M616.5 466.28v5.13M616.5 471.41v3.59M620.5 131.83v6.16M621.5 149.79v36.42M621.5 210.31v4.1M621.5 220.06v4.62M621.5 235.45v1.54M620.5 241.09v4.1M620.5 253.92v5.13M620.5 265.71v1.54M620.5 271.87v3.59M621.5 279.05v2.56M620.5 288.8v2.56M620.5 304.7v2.56M620.5 326.76v3.08M616.5 340.09v2.05M616.5 342.15v2.56M616.5 350.35v3.08M616.5 353.43v2.56M620.5 368.31v3.59M616.5 384.72v5.13M616.5 389.85v8.72M616.5 398.57v9.75M616.5 419.6v1.54M616.5 421.14v2.56M616.5 448.33v3.08M616.5 451.41v2.56M620.5 473.46v1.54M625.5 152.35v23.08M625.5 213.39v3.08M625.5 223.65v3.08M625.5 226.73v11.29M625.5 238.01v4.62M621.5 335.48v2.05M620.5 341.63v2.05M620.5 356v2.56M621.5 362.15v2.56M621.5 367.79v1.03M620.5 386.26v3.08M620.5 400.62v10.77M620.5 417.04v1.54M620.5 452.95v3.08M621.5 462.18v3.59M629.5 232.37v8.72M625.5 263.15v2.56M625.5 280.08v6.67M625.5 286.75v4.1M625.5 303.16v4.62M625.5 307.78v3.08M625.5 334.45v3.08M625.5 337.53v2.05M621.5 418.06v7.69M621.5 446.79v3.59M625.5 463.72v4.1M625.5 467.82v4.62M629.5 131.83v1.03M630.5 145.17v6.67M630.5 196.98v5.64M630.5 206.21v5.64M629.5 212.88v4.1M630.5 224.16v4.1M630.5 249.81v3.08M629.5 260.59v14.36M629.5 290.85v2.05M629.5 320.09v2.05M630.5 327.27v6.16M629.5 340.61v3.08M625.5 360.1v1.03M625.5 361.13v5.64M625.5 366.77v3.08M625.5 414.47v.51M625.5 414.99v8.21M625.5 449.87v2.05M625.5 451.92v2.56M629.5 469.87v5.13M634.5 148.25v27.7M634.5 175.95v20.52M634.5 196.46v9.75M634.5 228.78v3.08M634.5 231.86v3.08M634.5 247.25v2.56M634.5 249.81v2.56M630.5 301.11v3.08M629.5 310.86v6.67M630.5 325.22v2.05M630.5 348.3v1.54M629.5 353.43v1.03M629.5 369.33v8.21M629.5 411.4v1.03M629.5 453.46v2.56M630.5 461.15v3.08M638.5 182.61v13.34M638.5 199.54v2.05M638.5 234.94v3.08M638.5 246.74v2.56M634.5 267.25v1.54M634.5 298.03v2.56M634.5 300.6v2.56M634.5 328.81v2.05M634.5 330.86v2.05M634.5 343.69v3.08M634.5 346.76v2.56M630.5 420.63v4.1M630.5 448.33v2.56M634.5 462.18v3.59M634.5 465.77v3.59M639.5 140.55v6.67M639.5 203.13v1.54M639.5 228.27v4.1M639.5 252.89v2.56M638.5 263.66v7.69M639.5 279.05v3.08M639.5 291.36v2.56M638.5 298.03v2.56M638.5 329.32v1.54M639.5 335.48v7.18M638.5 349.33v2.05M634.5 362.15v4.1M634.5 366.26v3.08M634.5 369.33v5.13M634.5 408.83v2.05M634.5 410.88v4.62M634.5 415.5v.51M634.5 416.01v5.13M634.5 450.38v2.05M634.5 452.43v2.05M638.5 466.8v4.1M643.5 143.12v6.67M643.5 149.79v36.42M643.5 200.06v2.56M643.5 208.78v2.56M643.5 211.34v2.56M643.5 232.89v4.62M643.5 237.5v5.64M643.5 246.22v5.13M643.5 251.35v3.59M643.5 279.56v3.59M643.5 283.16v7.18M643.5 290.34v3.08M639.5 305.21v2.56M638.5 314.96v6.16M639.5 325.73v1.54M639.5 355.48v2.05M638.5 362.15v3.59M638.5 370.36v4.1M639.5 384.21v12.82M639.5 400.11v3.08M638.5 406.27v.51M638.5 453.97v2.05M639.5 460.13v2.56M647.5 184.15v8.72M647.5 198v2.56M647.5 208.78v1.54M647.5 214.42v2.56M643.5 303.16v2.56M643.5 305.73v3.08M643.5 326.24v2.05M643.5 328.3v1.54M643.5 351.38v3.08M643.5 354.46v2.56M643.5 385.24v4.1M639.5 419.6v6.67M639.5 448.84v2.56M643.5 461.15v2.56M643.5 463.72v3.08M648.5 135.42v6.67M648.5 223.14v4.62M648.5 240.58v6.67M648.5 263.66v23.08M648.5 287.77v8.72M647.5 304.19v3.59M647.5 329.84v4.62M647.5 345.22v5.64M643.5 403.7v11.29M643.5 414.99v8.72M643.5 450.89v2.05M643.5 452.95v1.54M647.5 465.26v3.08M652.5 138.5v6.67M652.5 145.17v6.16M652.5 167.23v22.57M652.5 196.98v.51M652.5 217.5v5.13M652.5 222.63v3.08M652.5 248.27v4.62M652.5 252.89v14.36M652.5 267.25v6.67M648.5 357.02v12.82M648.5 396.01v1.03M647.5 400.11v1.03M647.5 407.29v2.05M647.5 453.97v1.54M648.5 459.1v2.05M656.5 147.73v26.67M656.5 188.26v4.1M656.5 195.44v3.08M657.5 206.72v3.59M657.5 210.83v2.56M657.5 218.52v1.54M656.5 223.65v1.54M656.5 251.35v3.59M656.5 264.18v3.08M652.5 320.6v4.1M652.5 324.71v8.21M652.5 350.35v13.34M652.5 363.69v8.72M652.5 378.05v13.85M652.5 391.9v1.54M648.5 425.25v4.62M648.5 448.84v3.08M652.5 460.13v2.05M652.5 462.18v2.56M657.5 131.83v5.13M661.5 208.78v7.69M657.5 230.83v3.08M657.5 236.99v4.62M657.5 271.87v2.05M656.5 282.13v8.21M657.5 301.11v4.62M657.5 312.91v3.59M656.5 321.11v2.56M656.5 362.66v6.16M656.5 377.03v11.29M652.5 418.06v5.64M652.5 423.71v4.1M652.5 450.89v2.05M652.5 452.95v1.54M656.5 463.21v2.56M657.5 472.95v2.05M661.5 132.86v7.18M661.5 140.04v7.18M661.5 175.95v9.75M661.5 188.26v1.54M661.5 189.8v1.03M661.5 190.82v5.13M661.5 219.04v2.05M661.5 221.09v2.05M661.5 253.4v6.67M661.5 260.07v3.59M661.5 270.33v2.05M661.5 272.38v1.54M661.5 297.52v4.1M661.5 301.62v4.62M661.5 310.34v4.1M661.5 314.45v2.56M657.5 327.27v3.08M657.5 339.07v7.69M657.5 387.29v1.54M657.5 402.16v3.08M656.5 416.53v5.64M656.5 453.46v1.54M657.5 458.08v2.05M665.5 143.63v7.18M665.5 170.3v17.95M665.5 193.39v5.64M665.5 221.09v2.56M665.5 256.48v5.13M665.5 299.57v2.56M665.5 313.42v1.54M661.5 324.19v2.05M661.5 326.24v3.08M661.5 349.84v2.56M661.5 352.41v3.08M661.5 382.67v.51M661.5 383.18v1.54M661.5 394.98v7.18M657.5 427.81v3.59M657.5 447.3v3.59M661.5 459.1v2.05M661.5 461.15v1.54M666.5 266.74v1.54M665.5 271.36v2.05M665.5 278.03v3.08M665.5 289.82v1.03M665.5 293.93v3.08M666.5 302.65v2.05M666.5 318.55v1.54M665.5 325.22v3.08M665.5 371.39v6.67M665.5 378.57v1.03M665.5 393.96v4.1M661.5 422.68v3.08M661.5 425.76v3.59M661.5 448.84v3.59M661.5 452.43v1.03M665.5 461.67v2.05M666.5 469.36v4.62M670.5 131.83v3.08M670.5 134.91v7.69M670.5 185.69v2.05M670.5 261.1v4.1M670.5 265.2v2.56M670.5 299.06v16.93M670.5 315.99v1.03M670.5 317.01v3.59M666.5 337.02v4.1M666.5 365.74v4.1M666.5 382.16v3.08M666.5 397.55v2.56M666.5 409.34v4.62M665.5 421.14v3.08M665.5 452.95v1.54M666.5 457.05v2.05M670.5 470.9v4.1M674.5 137.99v8.72M674.5 193.39v11.29M674.5 208.78v10.26M674.5 252.38v6.16M670.5 320.6v2.56M670.5 323.17v4.62M670.5 330.35v4.1M670.5 334.45v6.16M670.5 360.61v3.59M670.5 364.2v3.59M670.5 381.13v1.03M670.5 382.16v3.08M670.5 392.42v5.64M670.5 405.24v4.1M670.5 409.34v3.59M666.5 429.35v6.16M666.5 441.66v6.16M670.5 458.08v1.54M670.5 459.61v2.05M675.5 262.12v6.67M675.5 282.64v10.26M675.5 305.21v4.62M674.5 314.45v2.05M674.5 329.84v4.62M675.5 346.76v4.1M674.5 357.54v2.56M674.5 392.93v1.54M674.5 405.24v3.59M670.5 424.22v4.1M670.5 428.32v5.13M670.5 443.71v5.13M670.5 448.84v3.59M674.5 460.13v2.05M675.5 466.8v3.59M679.5 131.83v5.13M679.5 199.03v17.44M679.5 251.35v4.1M679.5 255.46v8.21M679.5 271.87v27.7M679.5 342.15v8.72M675.5 373.95v5.13M675.5 385.75v2.05M675.5 414.47v2.56M674.5 423.19v4.1M674.5 449.87v3.59M675.5 456.02v1.54M679.5 467.82v4.1M679.5 471.93v3.08M683.5 131.83v9.75M683.5 196.98v6.16M683.5 211.85v6.67M684.5 232.37v4.62M683.5 246.74v3.59M683.5 278.03v7.18M679.5 363.69v2.56M679.5 366.26v2.05M679.5 383.7v2.05M679.5 385.75v2.56M679.5 410.37v3.08M679.5 413.45v2.56M679.5 456.54v1.54M679.5 458.08v1.54M683.5 473.98v1.03M684.5 292.39v3.08M683.5 305.73v11.8M684.5 330.86v5.64M684.5 355.48v1.54M683.5 359.59v1.03M683.5 385.24v4.1M683.5 408.32v3.59M679.5 430.89v16.41M683.5 458.59v2.05M684.5 464.23v3.08M688.5 243.14v5.13M688.5 248.27v4.62M688.5 252.89v7.18M688.5 287.77v1.54M688.5 289.31v2.56M688.5 329.84v4.1M688.5 333.94v5.64M688.5 346.25v5.13M688.5 351.38v2.05M684.5 418.58v3.59M683.5 430.89v17.44M684.5 455v1.03M688.5 465.26v3.08M688.5 468.34v4.62M692.5 131.83v2.05M692.5 176.97v5.13M693.5 186.21v9.75M692.5 235.45v5.64M692.5 254.43v4.62M693.5 268.79v4.1M693.5 277v1.54M692.5 288.29v1.03M692.5 325.22v9.75M688.5 413.96v4.1M688.5 418.06v4.1M688.5 455v1.54M688.5 456.54v1.54M692.5 469.87v5.13M697.5 194.93v6.67M697.5 264.69v4.1M697.5 268.79v3.08M697.5 271.87v1.54M693.5 292.9v2.05M693.5 305.73v2.56M693.5 329.32v2.56M692.5 337.02v5.64M692.5 348.81v4.62M693.5 359.59v15.39M692.5 412.42v5.64M692.5 457.05v1.54M693.5 462.18v2.05M697.5 234.94v6.67M697.5 241.61v5.13M697.5 246.74v5.13M697.5 283.16v1.54M697.5 284.69v1.54M697.5 293.93v4.1M697.5 302.14v4.1M697.5 360.61v6.16M697.5 366.77v5.13M697.5 371.9v6.67M693.5 426.27v4.1M693.5 450.89v3.59M697.5 462.69v2.56M697.5 465.26v3.08M702.5 213.91v15.9M701.5 281.62v3.08M701.5 312.39v14.36M701.5 366.26v8.21M697.5 422.17v4.1M697.5 426.27v4.1M697.5 450.89v3.59M697.5 454.49v1.54M701.5 466.28v3.59M702.5 290.34v3.59M702.5 303.16v2.05M702.5 333.43v2.56M701.5 340.61v2.05M701.5 347.28v2.56M702.5 357.02v3.08M702.5 382.67v4.62M701.5 422.17v4.1M701.5 455v1.54M702.5 459.61v2.05M706.5 229.81v28.73M706.5 287.77v6.16M706.5 293.93v2.56M706.5 296.49v9.75M706.5 324.71v1.54M706.5 326.24v2.05M706.5 358.56v3.59M706.5 362.15v4.62M706.5 376v5.13M706.5 381.13v5.64M702.5 435.51v10.77M706.5 460.13v2.05M706.5 462.18v2.56M711.5 150.3v6.67M710.5 258.53v23.6M710.5 315.47v1.54M710.5 366.77v11.8M706.5 429.86v5.64M706.5 435.51v10.77M706.5 446.28v5.64M710.5 462.69v3.08M711.5 310.86v8.21M711.5 336.5v22.57M711.5 413.45v6.67M710.5 429.86v6.16M710.5 446.28v5.64M711.5 457.05v2.05M715.5 261.61v14.36M715.5 291.88v10.77M715.5 302.65v13.85M715.5 316.5v26.67M715.5 343.17v23.6M715.5 366.77v45.65M715.5 412.42v7.18M715.5 457.56v1.54M715.5 459.1v2.56M720.5 131.83v67.2M720.5 227.24v20.52M719.5 258.53v6.16M719.5 271.36v6.67M719.5 297.01v3.59M719.5 324.19v23.08M719.5 375.49v34.88M719.5 459.61v2.05M720.5 470.39v4.62M724.5 237.5v2.05M720.5 424.22v6.16M720.5 451.41v4.62M724.5 307.26v15.9M724.5 354.97v18.47M724.5 417.55v6.67M724.5 424.22v6.16M724.5 450.89v5.13M724.5 456.02v2.05M729.5 132.86v117.98M728.5 304.7v20.52M728.5 353.94v21.54M728.5 416.53v7.69M728.5 456.02v2.05M729.5 464.23v6.67M733.5 131.83v57.45M733.5 464.74v10.26M733.5 431.4v18.98M738.5 167.74v103.62M738.5 383.18v30.78M737.5 431.91v17.95M738.5 458.59v3.59M742.5 131.83v8.72M742.5 140.55v87.2M742.5 250.33v13.85M742.5 388.83v23.6M742.5 459.1v4.1M742.5 463.21v11.8M746.5 464.74v9.75M747.5 236.99v10.77M747.5 266.23v96.44M747.5 422.68v10.26M747.5 448.33v7.18M751.5 134.91v14.88M751.5 149.79v169.79M751.5 337.02v34.88M751.5 371.9v50.27M751.5 422.17v10.77M751.5 447.82v7.69M751.5 455.51v5.13M755.5 131.83v10.77M755.5 378.05v43.09M755.5 456.02v5.64M755.5 472.44v2.56M760.5 144.14v215.44M760.5 433.45v13.85M764.5 138.5v223.14M764.5 434.99v9.75M774.5 461.15v9.23" fill="none" stroke="#0000ff" stroke-width="1" stroke-opacity="0.417"/><path d="M465.19 135.5h192.38M760.5 135.5h20.25M465.19 142.5h7.31M561.94 142.5h76.5M773.44 142.5h7.31M479.25 156.5h111.38M631.12 155.5h29.25M697.5 154.5h64.12M768.94 155.5h7.88M492.75 160.5h82.12M471.94 163.5h139.5M653.06 162.5h30.94M766.69 162.5h7.31M472.5 173.5h69.75M567.56 173.5h72.56M465.19 176.5h17.44M638.44 176.5h15.19M676.12 176.5h6.75M690.75 176.5h2.25M702 175.5h66.38M776.81 176.5h3.94M465.19 180.5h48.38M637.88 180.5h9.56M666.56 180.5h3.94M682.31 180.5h1.69M685.69 179.5h5.06M698.62 179.5h35.44M762.75 179.5h8.44M779.06 180.5h1.69M465.19 183.5h9.56M645.19 183.5h16.88M672.75 183.5h1.69M676.12 182.5h11.81M691.88 183.5h6.75M723.38 182.5h41.62M773.44 183.5h7.31M465.19 193.5h17.44M568.12 194.5h8.44M593.44 194.5h14.06M618.19 194.5h10.12M642.38 194.5h4.5M651.38 194.5h2.25M654.75 193.5h8.44M682.88 193.5h10.69M695.25 193.5h2.81M699.75 193.5h8.44M745.88 192.5h17.44M772.88 193.5h7.88M692.44 196.5h5.06M705.94 196.5h30.94M766.12 196.5h9.56M553.5 201.5h20.25M580.5 201.5h17.44M616.5 201.5h6.75M636.75 201.5h3.38M642.38 201.5h1.69M646.31 200.5h1.12M649.69 201.5h2.25M656.44 202.5h7.31M669.38 201.5h4.5M680.06 200.5h20.25M707.06 200.5h22.5M768.94 200.5h9.56M561.38 212.5h5.06M603.56 212.5h4.5M617.06 212.5h3.94M649.12 212.5h.56M652.5 213.5h3.94M662.62 212.5h5.62M542.81 214.5h6.19M554.06 215.5h18M575.44 214.5h3.94M582.75 213.5h10.12M596.25 214.5h2.81M601.88 215.5h3.38M625.5 215.5h1.12M627.19 214.5h.56M628.88 213.5h3.94M636.19 214.5h5.06M648.56 215.5h5.06M657.56 215.5h2.25M662.06 215.5h7.31M672.75 214.5h5.62M693 214.5h26.44M739.69 213.5h30.38M556.88 219.5h12.38M604.12 219.5h4.5M614.25 220.5h6.75M622.12 219.5h.56M656.44 219.5h3.94M465.19 221.5h6.19M518.06 221.5h9.56M537.75 221.5h10.69M555.19 222.5h15.19M576.56 221.5h5.06M592.88 221.5h5.06M603 222.5h5.62M618.75 222.5h2.25M622.69 222.5h4.5M646.31 222.5h5.06M660.38 221.5h15.19M682.31 222.5h15.19M705.38 221.5h28.12M758.81 220.5h2.81M777.94 221.5h2.81M580.5 232.5h3.38M589.5 233.5h12.94M604.69 232.5h1.69M624.94 232.5h2.81M630 233.5h2.25M635.06 234.5h7.31M644.62 233.5h2.25M648.56 232.5h1.12M676.69 232.5h2.25M681.19 233.5h2.81M693.56 233.5h2.81M699.19 232.5h3.38M465.19 234.5h15.75M513.56 234.5h16.88M546.75 234.5h6.75M560.81 233.5h7.31M572.62 234.5h2.81M577.69 235.5h2.25M601.31 235.5h1.12M604.12 234.5h2.81M614.25 234.5h8.44M625.5 235.5h2.81M649.69 235.5h2.25M655.31 234.5h2.25M658.69 233.5h3.38M668.25 234.5h3.38M674.44 235.5h2.25M701.44 235.5h2.81M709.31 234.5h15.75M740.25 234.5h40.5M578.25 239.5h2.25M582.75 240.5h2.25M587.25 241.5h2.25M594 241.5h1.12M596.25 240.5h1.12M599.62 239.5h3.94M628.88 239.5h2.25M633.94 240.5h3.38M645.75 240.5h2.81M650.25 239.5h2.81M672.75 239.5h3.38M679.5 240.5h3.38M690.75 240.5h3.94M698.62 239.5h4.5M469.12 241.5h14.06M507.94 241.5h24.75M550.12 241.5h6.19M563.06 240.5h5.62M572.62 241.5h2.81M577.69 242.5h1.69M606.94 242.5h5.06M616.5 241.5h7.88M628.88 242.5h3.94M657.56 242.5h1.12M698.62 242.5h27.56M752.06 241.5h23.62M553.5 252.5h3.38M562.5 252.5h2.25M576.56 252.5h6.19M590.06 252.5h3.94M602.44 253.5h6.75M610.31 252.5h5.62M621 252.5h7.88M642.94 252.5h3.94M649.69 253.5h2.81M656.44 254.5h3.94M660.94 255.5h10.69M673.88 254.5h2.25M677.81 253.5h1.69M681.19 252.5h2.25M702 252.5h4.5M709.88 253.5h12.94M727.88 252.5h6.19M476.44 254.5h43.31M537.19 254.5h6.19M549 255.5h3.94M559.69 255.5h3.94M569.25 255.5h1.69M578.81 255.5h.56M581.06 254.5h5.62M592.88 255.5h7.31M632.25 255.5h13.5M660.94 259.5h10.12M681.75 255.5h2.25M686.81 254.5h10.69M700.88 255.5h2.81M732.94 255.5h18.56M550.12 259.5h2.25M556.31 259.5h6.75M570.38 260.5h4.5M575.44 259.5h.56M601.88 259.5h2.81M605.81 259.5h2.81M611.44 260.5h3.94M626.62 260.5h5.06M636.19 259.5h11.25M651.38 260.5h3.94M659.25 261.5h1.69M661.5 262.5h9.56M673.88 261.5h1.69M677.81 260.5h1.69M681.75 259.5h2.25M700.88 259.5h3.38M707.06 260.5h2.81M721.12 260.5h5.62M732.38 259.5h10.12M465.19 262.5h3.38M478.69 261.5h44.44M531 261.5h11.81M547.31 262.5h3.38M554.06 262.5h5.62M573.19 262.5h12.94M591.19 261.5h7.88M602.44 262.5h1.12M606.94 262.5h2.25M686.81 262.5h11.81M740.81 262.5h39.94M620.44 271.5h2.25M626.06 272.5h4.5M635.62 271.5h3.38M694.69 271.5h3.38M465.19 272.5h3.38M478.12 271.5h20.25M516.94 271.5h9M536.06 272.5h10.69M547.31 271.5h.56M556.88 271.5h3.94M563.06 272.5h.56M569.81 272.5h2.25M577.12 273.5h7.31M588.94 272.5h3.94M599.62 271.5h1.12M603.56 271.5h3.94M610.31 272.5h2.25M614.81 273.5h2.25M619.88 274.5h1.12M622.69 275.5h13.5M640.12 274.5h2.81M646.31 273.5h3.38M654.19 272.5h10.12M667.69 273.5h6.75M679.5 274.5h6.75M690.75 275.5h4.5M696.94 274.5h1.69M700.31 274.5h5.62M709.88 273.5h5.62M752.06 272.5h28.69M465.19 275.5h9.56M483.75 274.5h36M525.94 275.5h9.56M541.69 275.5h2.81M545.06 274.5h1.69M557.44 274.5h2.81M563.62 274.5h3.38M568.69 275.5h2.81M596.81 275.5h1.12M605.25 275.5h2.81M619.31 278.5h1.69M622.12 279.5h3.94M637.88 278.5h4.5M660.94 275.5h2.81M680.62 278.5h4.5M687.94 279.5h2.81M691.31 279.5h2.25M695.25 278.5h2.81M702.56 278.5h2.81M765.56 275.5h15.19M465.19 279.5h6.75M480.38 278.5h21.94M511.88 278.5h9M527.06 279.5h16.88M543.94 278.5h2.25M558.56 278.5h2.25M565.88 278.5h2.25M570.38 279.5h3.38M578.25 280.5h9.56M590.62 280.5h2.81M596.25 279.5h1.12M599.62 279.5h6.19M611.44 280.5h3.38M615.94 280.5h1.12M621.56 281.5h1.69M635.06 281.5h7.88M648.56 280.5h6.75M665.44 280.5h7.31M677.81 281.5h4.5M691.31 282.5h1.69M698.06 282.5h3.94M705.94 281.5h6.19M713.81 280.5h2.25M734.06 280.5h12.94M761.06 279.5h19.69M468.56 282.5h9M487.12 281.5h27.56M522.56 282.5h9M533.81 282.5h9.56M543.94 281.5h14.62M559.69 280.5h1.12M563.62 281.5h2.25M568.69 282.5h3.38M603.56 291.5h6.19M612 291.5h1.69M650.25 291.5h1.69M654.75 292.5h3.38M663.75 292.5h.56M673.31 291.5h5.62M695.25 291.5h2.25M701.44 291.5h6.75M469.12 292.5h8.44M484.88 291.5h22.5M529.31 291.5h10.12M553.5 291.5h2.81M559.12 292.5h3.94M575.44 292.5h9.56M591.75 292.5h1.69M595.69 293.5h2.25M600.19 294.5h2.81M612.56 294.5h4.5M621 293.5h2.25M625.5 292.5h5.06M637.88 292.5h3.94M644.06 293.5h2.25M648 294.5h1.69M677.25 294.5h3.94M696.94 294.5h.56M705.94 294.5h14.62M741.94 293.5h19.12M529.31 294.5h9.56M545.06 294.5h3.94M599.62 298.5h1.69M603 298.5h5.06M646.31 298.5h1.69M650.25 299.5h1.69M654.75 300.5h13.5M670.5 299.5h2.81M675.56 298.5h2.81M698.62 298.5h14.06M714.94 298.5h7.31M471.94 299.5h7.88M524.81 298.5h5.06M542.25 298.5h.56M551.81 299.5h3.38M558.56 300.5h4.5M569.25 300.5h3.38M575.44 299.5h3.94M586.69 299.5h4.5M593.44 300.5h2.25M597.38 301.5h3.38M605.25 301.5h3.38M611.44 301.5h3.94M618.19 300.5h3.38M624.38 299.5h10.69M637.88 300.5h2.25M642.38 301.5h1.69M676.12 301.5h3.38M699.19 301.5h2.25M714.94 301.5h22.5M750.94 300.5h16.31M526.5 301.5h8.44M542.25 301.5h1.69M627.19 311.5h2.25M632.25 312.5h2.25M637.31 313.5h5.06M646.31 313.5h6.19M656.44 312.5h2.81M662.62 311.5h2.25M678.38 311.5h2.81M685.69 312.5h15.75M711.56 311.5h.56M712.69 311.5h9.56M731.81 311.5h11.25M465.19 313.5h3.94M477.56 312.5h7.88M520.88 311.5h8.44M536.06 312.5h4.5M551.25 313.5h.56M556.31 313.5h2.81M563.62 312.5h5.06M577.69 312.5h2.81M582.75 313.5h2.81M586.12 313.5h.56M590.06 313.5h2.25M595.12 314.5h5.62M606.38 313.5h4.5M616.5 313.5h5.06M624.94 313.5h2.25M659.81 314.5h2.25M664.88 313.5h3.38M669.38 313.5h1.69M672.75 314.5h4.5M711.56 314.5h3.38M740.25 314.5h10.12M765 313.5h15.75M627.75 318.5h.56M628.88 319.5h.56M630.56 320.5h2.81M642.94 320.5h3.94M649.69 319.5h2.81M654.75 318.5h2.81M674.44 318.5h1.69M678.38 319.5h2.81M684.56 320.5h11.81M703.69 319.5h5.06M709.31 318.5h6.19M736.31 318.5h10.69M465.19 320.5h7.31M480.38 319.5h25.31M531 319.5h5.06M540.56 320.5h5.06M547.88 320.5h3.94M559.12 319.5h2.81M568.12 318.5h1.12M574.31 319.5h6.75M582.75 319.5h1.69M586.12 320.5h1.69M590.06 321.5h10.12M615.94 320.5h.56M619.31 320.5h2.81M624.94 321.5h2.81M653.06 321.5h2.81M659.25 320.5h7.31M669.94 321.5h2.25M743.06 321.5h16.31M772.31 320.5h8.44M601.31 331.5h3.94M605.81 331.5h.56M610.31 331.5h2.81M615.38 332.5h5.06M635.62 332.5h2.81M640.69 331.5h2.25M657 331.5h2.25M661.5 332.5h2.25M669.38 333.5h1.69M673.31 334.5h11.25M688.5 333.5h3.94M693 332.5h1.69M701.44 332.5h2.25M709.88 332.5h8.44M723.38 332.5h9.56M743.62 331.5h19.69M469.69 333.5h8.44M487.69 332.5h19.69M533.81 332.5h24.75M559.69 332.5h1.69M562.5 332.5h2.25M565.31 332.5h3.38M571.5 333.5h6.19M599.62 334.5h6.19M606.94 334.5h2.25M644.06 334.5h2.81M650.25 334.5h2.25M667.69 338.5h4.5M679.5 338.5h3.94M761.62 334.5h9M607.5 338.5h1.69M612 339.5h3.38M633.38 339.5h1.12M635.62 338.5h.56M654.75 338.5h1.69M657.56 339.5h.56M658.69 340.5h.56M662.06 341.5h3.94M681.19 341.5h2.81M687.38 340.5h2.81M694.12 338.5h1.12M705.94 339.5h5.06M729 339.5h9M759.38 338.5h8.44M473.06 340.5h7.88M535.5 339.5h9.56M554.62 339.5h9M564.19 340.5h.56M569.81 341.5h5.62M586.12 341.5h11.81M599.62 340.5h1.12M601.88 340.5h2.81M606.38 341.5h2.25M636.19 341.5h2.25M641.25 340.5h3.38M648.56 340.5h2.25M652.5 341.5h1.12M765.56 341.5h10.12M569.25 351.5h5.62M579.38 352.5h3.94M588.94 352.5h.56M590.06 351.5h9M619.31 351.5h4.5M626.62 352.5h2.81M630.56 352.5h4.5M640.12 353.5h5.06M666 353.5h5.06M677.81 352.5h4.5M689.06 352.5h2.25M694.12 353.5h5.06M711 353.5h9M748.12 352.5h13.5M767.81 351.5h9.56M465.19 354.5h5.06M479.25 353.5h19.69M527.62 353.5h23.06M567.56 353.5h1.12M569.25 354.5h4.5M599.62 354.5h3.94M610.88 353.5h1.12M619.31 354.5h3.38M637.31 357.5h3.94M645.19 358.5h11.81M661.5 357.5h3.94M693 357.5h3.94M712.12 357.5h5.62M774 354.5h6.75M465.19 358.5h1.69M476.44 357.5h7.88M530.44 357.5h23.06M568.69 357.5h.56M576 358.5h8.44M588.94 358.5h3.94M596.81 358.5h8.44M620.44 358.5h2.81M630 359.5h2.25M634.5 360.5h2.81M640.69 361.5h3.94M657 361.5h3.94M663.75 360.5h2.25M668.81 359.5h3.38M678.94 359.5h6.19M686.25 359.5h2.25M690.75 360.5h2.25M696.94 361.5h15.19M717.19 360.5h7.88M756 359.5h8.44M771.19 358.5h9.56M465.19 361.5h8.44M481.5 360.5h25.31M525.94 360.5h7.88M555.75 360.5h14.62M579.94 361.5h5.62M586.69 361.5h6.75M777.94 361.5h2.81M613.69 370.5h3.94M620.44 370.5h.56M648.56 370.5h6.19M666 370.5h5.06M686.25 370.5h6.75M700.31 371.5h12.94M722.81 370.5h19.12M465.19 371.5h8.44M481.5 370.5h68.62M555.75 371.5h12.94M574.88 370.5h3.38M592.88 370.5h2.81M597.94 371.5h2.25M602.44 372.5h2.25M606.94 373.5h2.81M612.56 374.5h3.38M617.62 374.5h1.12M620.44 373.5h5.62M628.88 372.5h2.81M644.06 372.5h5.06M653.06 373.5h4.5M665.44 374.5h10.69M677.25 373.5h5.06M696.94 374.5h23.06M738.56 373.5h19.69M765.56 372.5h5.62M779.06 371.5h1.69M470.25 374.5h8.44M495 373.5h19.12M525.94 373.5h23.06M553.5 374.5h4.5M569.81 374.5h3.94M577.69 373.5h2.81M584.44 372.5h3.94M592.31 373.5h2.25M596.81 374.5h1.69M606.94 377.5h2.25M610.88 378.5h2.25M617.06 378.5h.56M624.38 377.5h2.25M657.56 377.5h2.25M661.5 378.5h2.81M665.44 378.5h7.31M673.88 378.5h2.81M735.75 377.5h18.56M467.44 378.5h8.44M483.19 377.5h51.75M547.88 377.5h4.5M556.31 378.5h4.5M569.81 378.5h3.94M578.81 377.5h2.25M592.31 377.5h2.81M597.38 378.5h1.69M601.31 379.5h1.69M605.25 380.5h2.25M626.06 380.5h1.69M630 379.5h2.81M636.75 378.5h9.56M650.81 379.5h3.38M657 380.5h1.69M750.94 380.5h12.38M768.38 379.5h6.19M531 380.5h20.25M582.75 380.5h8.44M642.38 390.5h6.19M654.19 390.5h1.69M661.5 390.5h2.81M667.12 391.5h5.06M675 391.5h3.94M695.81 391.5h9M722.81 391.5h17.44M759.94 390.5h5.62M473.06 391.5h7.31M524.81 390.5h31.5M578.81 391.5h1.69M582.19 392.5h18.56M605.25 392.5h1.69M608.06 391.5h1.12M614.25 391.5h9M627.75 392.5h3.38M633.94 393.5h3.38M653.06 393.5h7.31M669.94 393.5h4.5M764.44 393.5h4.5M774 392.5h5.62M633.94 397.5h2.25M638.44 398.5h2.25M642.38 399.5h4.5M648.56 398.5h.56M653.06 397.5h.56M665.44 397.5h.56M673.31 397.5h3.38M681.19 398.5h4.5M702.56 398.5h48.94M763.88 397.5h3.94M465.19 399.5h2.25M475.31 398.5h6.75M516.94 397.5h18M556.88 397.5h16.88M581.06 398.5h1.12M583.31 399.5h1.69M603 399.5h.56M604.69 398.5h1.12M609.19 397.5h12.38M624.94 398.5h2.25M628.88 399.5h2.25M632.81 400.5h1.69M662.62 400.5h1.12M670.5 400.5h5.62M767.25 400.5h3.94M776.25 399.5h4.5M562.5 400.5h10.12M613.12 400.5h6.19M639.56 410.5h3.94M646.88 410.5h25.88M684.56 411.5h15.75M750.38 411.5h13.5M767.81 410.5h4.5M465.19 412.5h7.31M478.69 411.5h5.62M511.88 410.5h53.44M577.12 410.5h7.88M587.81 410.5h2.25M591.19 411.5h7.88M600.19 410.5h2.25M612 411.5h6.19M620.44 412.5h2.25M627.75 412.5h1.12M633.38 412.5h3.38M650.81 413.5h11.81M771.19 413.5h3.94M780.19 412.5h.56M522 413.5h61.88M590.62 413.5h1.69M599.06 413.5h4.5M660.94 417.5h5.06M678.38 418.5h25.88M762.19 418.5h3.94M770.06 417.5h3.94M467.44 419.5h6.75M480.38 418.5h5.06M507.38 417.5h21.38M594 417.5h.56M604.12 417.5h4.5M612.56 418.5h13.5M639.56 418.5h5.06M651.94 419.5h4.5M659.81 420.5h3.94M772.88 420.5h3.94M514.69 420.5h18.56M558 419.5h31.5M594.56 419.5h7.31M605.25 420.5h3.94M667.69 430.5h10.69M693.56 431.5h12.94M731.81 432.5h27M765 431.5h3.94M772.88 430.5h4.5M471.94 432.5h5.62M482.62 431.5h4.5M502.31 430.5h13.5M631.69 430.5h10.12M647.44 431.5h5.06M657 432.5h5.06M668.25 433.5h9.56M775.69 433.5h4.5M508.5 433.5h11.81M531.56 432.5h10.69M552.94 431.5h16.31M584.44 431.5h23.06M615.38 432.5h9M632.81 433.5h6.75M677.25 437.5h8.44M695.25 438.5h12.94M727.88 439.5h34.31M766.69 438.5h3.94M774.56 437.5h4.5M465.19 440.5h2.25M473.62 439.5h5.62M483.75 438.5h5.62M502.88 437.5h11.25M637.88 437.5h5.06M648 438.5h5.62M660.38 439.5h7.88M675.56 440.5h7.88M777.38 440.5h3.38M509.62 440.5h10.12M529.88 439.5h9.56M549 438.5h10.69M606.94 438.5h11.25M625.5 439.5h5.62M636.19 440.5h5.06M465.19 450.5h2.25M681.75 450.5h7.31M698.06 451.5h10.69M723.94 452.5h41.62M769.5 451.5h3.94M777.94 450.5h2.81M465.19 453.5h6.75M477 452.5h5.06M486 451.5h12.94M510.19 450.5h10.12M638.44 450.5h5.62M650.25 451.5h6.19M663.75 452.5h6.75M677.81 453.5h7.31M732.38 456.5h32.06M780.19 453.5h.56M465.19 457.5h4.5M475.88 456.5h4.5M532.69 453.5h12.38M559.12 452.5h51.75M622.12 453.5h9.56M663.19 456.5h8.44M680.62 457.5h9M700.88 458.5h13.5M735.19 459.5h32.06M771.19 458.5h3.94M779.06 457.5h1.69M468 460.5h6.19M480.94 459.5h21.38M520.31 458.5h16.31M554.06 457.5h60.75M628.88 458.5h11.25M650.81 459.5h10.69M672.19 460.5h11.25M468.56 470.5h98.44M603 470.5h65.81M741.94 471.5h36M485.5 148.25v159.02M485.5 417.04v5.13M486.5 422.17v4.62M486.5 449.36v4.1M485.5 453.46v3.08M494.5 139.53v9.23M495.5 148.76v133.88M494.5 282.64v50.27M494.5 413.96v4.62M495.5 418.58v4.1M495.5 452.95v3.08M494.5 456.02v4.1M503.5 131.83v9.23M504.5 141.06v8.72M504.5 266.74v47.19M503.5 313.93v33.86M503.5 410.88v4.62M504.5 415.5v4.1M504.5 455.51v3.59M503.5 459.1v6.67M503.5 473.46v1.54M512.5 431.4v13.34M512.5 131.83v1.54M513.5 133.37v8.72M513.5 310.86v8.21M512.5 319.06v43.09M512.5 407.81v5.13M513.5 412.94v4.1M513.5 458.08v5.13M512.5 463.21v11.8M521.5 427.81v5.13M522.5 432.94v9.75M521.5 442.69v5.64M522.5 131.83v3.59M522.5 320.6v15.9M521.5 336.5v28.73M521.5 403.7v7.18M522.5 410.88v4.1M522.5 461.67v13.34M530.5 425.25v4.1M531.5 429.35v16.41M530.5 445.76v4.62M531.5 291.36v6.16M530.5 297.52v2.56M531.5 300.08v7.69M531.5 338.04v4.62M530.5 342.66v7.18M530.5 359.07v25.14M530.5 400.62v7.69M531.5 408.32v4.62M539.5 151.32v81.05M539.5 261.1v8.21M540.5 269.31v13.85M539.5 283.16v3.08M539.5 423.71v3.59M540.5 427.3v6.16M540.5 440.64v6.67M539.5 447.3v4.1M540.5 293.41v2.05M540.5 339.58v4.62M539.5 344.2v17.95M540.5 362.15v16.41M539.5 378.57v8.72M539.5 400.11v6.67M540.5 406.78v4.62M548.5 144.66v7.69M549.5 152.35v58.48M548.5 210.83v9.75M548.5 231.86v10.26M549.5 242.12v12.82M548.5 254.94v6.67M549.5 261.61v7.69M548.5 269.31v1.03M548.5 286.75v2.05M548.5 422.68v4.1M549.5 426.79v6.16M549.5 440.64v6.67M548.5 447.3v4.62M549.5 323.68v.51M549.5 370.36v7.69M548.5 378.05v11.8M548.5 393.44v10.77M549.5 404.21v5.13M557.5 138.5v7.18M558.5 145.68v37.96M558.5 210.83v6.67M557.5 217.5v13.34M558.5 230.83v4.62M558.5 256.99v.51M557.5 257.51v1.03M557.5 277v2.05M558.5 279.05v3.59M557.5 282.64v2.56M558.5 285.21v2.05M558.5 304.19v2.56M557.5 306.75v2.05M557.5 423.19v4.62M558.5 427.81v18.98M557.5 446.79v5.64M558.5 314.96v1.54M557.5 316.5v2.05M557.5 324.71v1.03M558.5 325.73v2.05M558.5 366.77v40.52M566.5 132.34v7.18M567.5 139.53v7.69M567.5 253.92v5.13M566.5 259.05v11.29M566.5 279.56v2.05M567.5 281.62v3.59M567.5 305.21v2.56M566.5 307.78v2.56M566.5 424.73v5.64M567.5 430.38v13.85M566.5 444.23v8.21M567.5 346.25v5.64M567.5 369.33v3.59M567.5 402.68v2.56M575.5 131.83v2.05M576.5 133.88v7.18M576.5 276.49v5.13M575.5 281.62v7.69M575.5 296.49v12.31M576.5 308.8v7.69M576.5 321.11v2.56M575.5 323.68v5.13M576.5 328.81v3.08M575.5 331.89v7.18M575.5 377.54v8.21M575.5 426.27v23.08M575.5 464.74v10.26M576.5 353.43v5.13M575.5 358.56v16.41M576.5 374.98v3.59M584.5 214.93v6.16M584.5 260.07v8.21M585.5 131.83v3.59M585.5 280.59v2.56M584.5 283.16v3.59M584.5 300.08v6.16M585.5 306.24v3.08M585.5 314.96v1.03M584.5 315.99v3.08M585.5 319.06v17.95M584.5 337.02v9.75M584.5 354.46v1.54M584.5 458.08v11.29M585.5 469.36v5.64M585.5 368.31v9.23M585.5 396.52v7.18M593.5 172.87v27.7M593.5 252.89v15.9M594.5 283.16v2.56M593.5 285.72v5.13M594.5 290.85v4.1M594.5 306.75v2.05M593.5 308.8v10.77M593.5 336.5v2.56M594.5 339.07v2.05M594.5 346.76v.51M593.5 347.28v.51M594.5 347.79v6.67M594.5 356.51v3.59M593.5 360.1v2.56M593.5 456.54v7.69M594.5 464.23v7.69M594.5 373.44v12.82M594.5 412.42v4.1M593.5 416.53v.51M594.5 417.04v1.03M602.5 148.25v31.29M603.5 179.54v25.65M602.5 205.19v15.39M602.5 226.22v8.21M602.5 255.46v3.59M603.5 259.05v4.62M602.5 263.66v2.05M603.5 316.5v3.08M602.5 319.58v3.59M602.5 344.71v2.05M603.5 346.76v3.08M603.5 364.2v3.59M602.5 367.79v3.08M602.5 397.03v6.67M602.5 456.02v5.13M603.5 461.15v6.16M603.5 337.02v.51M603.5 401.14v2.56M611.5 142.6v6.67M612.5 149.27v63.61M612.5 227.76v2.05M611.5 229.81v18.98M611.5 265.2v12.82M611.5 291.88v.51M612.5 290.85v7.18M612.5 325.73v1.54M611.5 327.27v3.08M611.5 354.46v2.56M612.5 357.02v3.59M612.5 383.18v2.05M611.5 385.24v1.03M611.5 456.02v3.59M612.5 459.61v4.62M612.5 426.27v15.39M620.5 137.99v6.16M621.5 144.14v5.64M621.5 186.21v24.11M621.5 236.99v2.05M620.5 239.04v2.05M620.5 259.05v6.67M620.5 275.46v1.54M621.5 277v2.05M621.5 281.62v4.1M620.5 285.72v3.08M620.5 307.26v2.05M621.5 309.32v5.64M620.5 314.96v11.8M621.5 337.53v2.05M620.5 339.58v2.05M620.5 358.56v2.05M621.5 360.61v1.54M621.5 368.82v3.08M620.5 371.9v4.1M621.5 376v6.67M620.5 382.67v3.59M620.5 411.4v5.64M620.5 456.02v3.08M621.5 459.1v3.08M621.5 425.76v3.59M620.5 429.35v11.8M621.5 441.15v5.64M629.5 132.86v6.16M630.5 139.01v6.16M630.5 202.62v3.59M630.5 211.85v.51M629.5 212.37v.51M629.5 216.98v3.59M630.5 220.57v3.59M630.5 252.89v3.08M629.5 255.97v4.62M629.5 274.95v6.16M630.5 281.1v6.16M629.5 287.26v3.59M629.5 322.14v2.05M630.5 324.19v3.08M630.5 333.43v3.59M629.5 337.02v3.59M630.5 304.19v3.08M629.5 307.26v3.59M629.5 317.52v5.13M630.5 322.65v2.56M630.5 349.84v2.05M629.5 351.89v1.54M629.5 377.54v32.32M630.5 409.86v.51M629.5 410.37v1.03M629.5 456.02v2.05M630.5 458.08v3.08M638.5 238.01v8.72M630.5 424.73v4.62M629.5 429.35v13.34M630.5 442.69v5.64M638.5 131.83v2.05M639.5 133.88v6.67M639.5 204.67v11.29M638.5 215.96v5.64M639.5 221.6v6.67M639.5 255.46v3.08M638.5 258.53v5.13M638.5 271.36v4.62M639.5 275.97v3.08M639.5 293.93v2.05M638.5 295.98v2.05M638.5 330.86v1.54M639.5 332.4v3.08M639.5 342.66v4.1M638.5 346.76v2.56M638.5 470.9v4.1M639.5 307.78v3.08M638.5 310.86v4.1M638.5 321.11v2.56M639.5 323.68v2.05M639.5 357.54v2.05M638.5 359.59v2.56M638.5 374.46v4.1M639.5 378.57v5.64M639.5 397.03v3.08M639.5 403.19v2.56M638.5 405.75v.51M638.5 456.02v2.05M639.5 458.08v2.05M647.5 192.87v5.13M647.5 210.31v4.1M639.5 426.27v7.69M638.5 433.97v8.21M639.5 442.17v6.67M648.5 131.83v3.59M648.5 227.76v12.82M648.5 296.49v4.1M647.5 300.6v3.59M647.5 334.45v10.77M647.5 468.34v3.59M648.5 471.93v3.08M648.5 397.03v1.54M647.5 398.57v1.54M647.5 455.51v2.05M648.5 457.56v1.54M656.5 198.52v3.59M657.5 202.11v4.62M657.5 213.39v1.54M656.5 214.93v.51M657.5 215.44v3.08M657.5 220.06v2.05M656.5 222.11v1.54M656.5 254.94v9.23M648.5 429.86v6.16M647.5 436.02v7.18M648.5 443.2v5.64M657.5 233.91v3.08M657.5 273.92v3.08M656.5 277v5.13M656.5 290.34v6.16M657.5 296.49v4.62M657.5 316.5v2.56M656.5 319.06v2.05M656.5 368.82v8.21M656.5 465.77v3.08M657.5 468.85v4.1M657.5 330.35v5.64M656.5 335.99v.51M657.5 336.5v2.56M657.5 388.83v2.56M656.5 391.39v4.1M657.5 395.49v6.67M657.5 405.24v2.56M656.5 407.81v8.72M656.5 455v1.54M657.5 456.54v1.54M665.5 150.81v19.49M665.5 199.03v6.67M666.5 205.7v.51M665.5 206.21v9.23M666.5 215.44v.51M665.5 215.96v5.13M665.5 302.14v2.56M666.5 304.7v6.67M665.5 311.37v2.05M657.5 431.4v6.67M656.5 438.07v2.56M657.5 440.64v6.67M666.5 268.28v1.03M665.5 269.31v2.05M665.5 281.1v8.72M665.5 297.01v2.56M666.5 299.57v3.08M666.5 320.09v2.56M665.5 322.65v2.56M665.5 378.05v.51M665.5 463.72v2.56M666.5 466.28v3.08M666.5 369.85v12.31M666.5 413.96v3.59M665.5 417.55v3.59M665.5 454.49v1.03M666.5 455.51v1.54M674.5 146.71v30.26M675.5 176.97v5.13M674.5 182.1v11.29M674.5 219.04v9.75M675.5 228.78v12.31M674.5 241.09v11.29M666.5 435.51v6.16M675.5 268.79v13.85M675.5 309.83v2.56M674.5 312.39v2.05M674.5 334.45v6.16M675.5 340.61v6.16M675.5 350.87v4.1M674.5 354.97v2.56M674.5 394.47v10.77M674.5 462.18v2.05M675.5 464.23v2.56M675.5 379.08v2.05M674.5 381.13v2.05M675.5 383.18v2.56M675.5 417.04v3.08M674.5 420.12v3.08M674.5 453.46v1.03M675.5 454.49v1.54M683.5 141.58v22.57M684.5 164.15v26.16M683.5 190.31v6.67M683.5 218.52v5.64M684.5 224.16v8.21M684.5 236.99v6.16M683.5 243.14v3.59M684.5 295.47v4.1M683.5 299.57v6.16M683.5 317.52v7.69M684.5 325.22v5.64M684.5 357.02v1.54M683.5 358.56v1.03M683.5 389.34v4.62M684.5 393.96v10.26M683.5 404.21v4.1M683.5 460.64v1.54M684.5 462.18v2.05M684.5 422.17v4.1M683.5 426.27v4.62M683.5 448.33v4.1M684.5 452.43v2.56M692.5 133.88v12.82M693.5 146.71v27.19M692.5 173.89v3.08M692.5 182.1v2.56M693.5 184.67v1.54M693.5 195.95v4.1M692.5 200.06v13.85M693.5 213.91v12.82M692.5 226.73v8.72M692.5 259.05v5.13M693.5 264.18v4.62M693.5 278.54v3.59M692.5 282.13v1.03M693.5 283.16v3.08M692.5 286.23v2.05M693.5 294.95v2.05M692.5 297.01v5.64M693.5 302.65v3.08M693.5 331.89v2.56M692.5 334.45v2.56M692.5 353.43v2.05M693.5 355.48v4.1M693.5 374.98v8.72M692.5 383.7v28.73M692.5 458.59v1.54M693.5 460.13v2.05M693.5 430.38v5.64M692.5 436.02v9.23M693.5 445.25v5.64M701.5 131.83v6.16M702.5 137.99v55.4M701.5 193.39v13.34M702.5 206.72v7.18M702.5 229.81v6.16M701.5 235.96v14.36M702.5 250.33v10.77M701.5 261.1v20.52M701.5 469.87v5.13M702.5 293.93v9.23M702.5 335.99v3.08M701.5 339.07v1.54M701.5 349.84v4.1M702.5 353.94v3.08M702.5 387.29v29.75M701.5 417.04v5.13M701.5 456.54v1.54M702.5 458.08v1.54M711.5 131.83v18.47M711.5 156.97v88.23M710.5 245.2v13.34M710.5 282.13v4.1M711.5 286.23v6.16M710.5 292.39v12.82M711.5 305.21v8.21M710.5 313.42v2.05M710.5 465.77v4.62M711.5 470.39v4.62M711.5 420.12v5.13M710.5 425.25v4.62M710.5 451.92v3.59M711.5 455.51v1.54M720.5 199.03v28.21M720.5 247.76v6.16M719.5 253.92v4.62M719.5 278.03v6.67M720.5 284.69v8.72M719.5 293.41v3.59M719.5 461.67v3.08M720.5 464.74v5.64M720.5 430.38v8.21M719.5 438.58v4.62M720.5 443.2v8.21M729.5 250.84v10.77M728.5 261.61v17.95M729.5 279.56v16.93M728.5 296.49v8.21M728.5 325.22v7.69M729.5 332.91v12.31M728.5 345.22v8.72M728.5 375.49v14.36M729.5 389.85v12.31M728.5 402.16v14.36M728.5 458.08v2.56M729.5 460.64v3.59M738.5 271.36v42.06M737.5 313.42v12.82M738.5 326.24v56.94M738.5 413.96v9.75M737.5 423.71v8.21M737.5 449.87v5.64M738.5 455.51v3.08M747.5 432.94v15.39M755.5 461.67v10.77M764.5 131.83v6.67M764.5 361.64v34.37M765.5 396.01v17.44M764.5 413.45v21.54M764.5 444.74v12.82M765.5 457.56v13.85M764.5 471.41v3.59M774.5 131.83v4.1M773.5 135.94v182.61M774.5 318.55v142.6M774.5 470.39v4.62" fill="none" stroke="#0000ff" stroke-width="1" stroke-opacity="0.500"/><path d="M492.75 146.5h44.44M614.81 145.5h51.19M768.38 145.5h8.44M465.19 149.5h138.38M779.62 149.5h1.12M465.19 152.5h6.75M597.38 152.5h38.81M666 151.5h45.56M747.56 151.5h18.56M774 152.5h6.75M465.19 166.5h15.19M604.12 166.5h44.44M678.94 165.5h45M761.62 165.5h7.31M776.81 166.5h3.94M500.62 170.5h85.5M643.5 169.5h32.06M714.38 168.5h49.5M771.19 169.5h8.44M672.19 172.5h35.44M766.12 172.5h7.88M569.25 184.5h28.69M614.81 184.5h21.94M665.44 184.5h4.5M495.56 187.5h77.62M596.81 187.5h24.19M634.5 187.5h9.56M657 187.5h4.5M663.19 187.5h2.81M666.56 186.5h1.69M673.88 186.5h5.62M688.5 186.5h5.62M699.75 186.5h15.75M767.25 186.5h9M465.19 190.5h57.94M550.12 190.5h15.19M574.88 191.5h20.81M642.38 190.5h6.75M654.19 191.5h2.81M659.81 190.5h1.12M662.62 189.5h3.94M670.5 190.5h18M695.25 190.5h4.5M711 189.5h59.06M779.06 190.5h1.69M505.69 204.5h48.38M581.06 204.5h12.94M601.31 205.5h16.88M622.69 204.5h3.94M632.81 204.5h5.62M639.56 203.5h.56M644.62 204.5h.56M646.31 205.5h6.75M658.69 206.5h5.06M666.56 205.5h3.38M672.75 204.5h3.94M698.06 203.5h2.25M701.44 204.5h6.19M725.62 203.5h46.12M465.19 207.5h78.75M554.06 208.5h21.38M581.06 207.5h12.94M598.5 208.5h3.94M607.5 209.5h7.88M619.31 208.5h3.38M626.62 207.5h2.25M633.94 207.5h1.69M638.44 206.5h1.12M642.94 207.5h2.25M646.31 208.5h1.12M649.69 209.5h4.5M657 210.5h6.19M664.88 209.5h2.25M669.38 208.5h2.81M675 207.5h4.5M694.12 207.5h29.81M753.19 206.5h9.56M775.12 207.5h5.62M475.31 210.5h23.06M547.31 211.5h6.19M573.19 211.5h3.94M581.62 210.5h12.38M597.38 211.5h2.81M629.44 211.5h1.69M631.69 210.5h1.12M637.31 210.5h3.38M646.31 211.5h2.25M671.06 211.5h2.81M678.38 210.5h17.44M722.25 210.5h23.06M766.12 210.5h12.38M612 223.5h5.62M465.19 224.5h77.06M556.31 225.5h12.94M595.69 225.5h10.69M609.75 226.5h4.5M615.38 225.5h.56M619.88 225.5h2.81M625.5 226.5h5.06M642.94 226.5h3.38M649.69 225.5h3.38M658.12 224.5h1.69M668.81 224.5h4.5M676.69 225.5h2.81M683.44 226.5h11.81M699.75 225.5h3.94M710.44 224.5h41.62M767.25 224.5h13.5M574.88 228.5h7.88M604.12 229.5h6.19M610.88 228.5h1.12M619.31 228.5h2.25M624.94 229.5h2.81M630.56 230.5h3.38M641.25 230.5h2.81M646.88 229.5h1.69M650.81 228.5h2.25M674.44 228.5h2.25M678.94 229.5h2.81M684.56 230.5h8.44M696.94 229.5h2.81M703.12 228.5h3.38M465.19 231.5h4.5M524.81 231.5h26.44M573.19 231.5h3.94M606.94 231.5h.56M608.62 230.5h6.75M618.75 231.5h3.38M651.94 231.5h2.81M657.56 230.5h1.12M665.44 230.5h3.94M672.19 231.5h2.81M704.81 231.5h6.19M721.69 231.5h22.5M776.81 231.5h3.94M581.62 243.5h2.25M585.56 244.5h1.69M591.19 244.5h1.12M601.31 243.5h2.81M636.19 243.5h4.5M646.88 243.5h5.06M672.19 243.5h9M684.56 243.5h7.31M477.56 244.5h52.88M558.56 244.5h14.62M576.56 245.5h2.81M581.06 246.5h2.25M604.69 246.5h7.31M613.12 245.5h2.81M627.19 245.5h6.75M639.56 246.5h7.31M681.75 246.5h4.5M693 245.5h9.56M727.31 245.5h15.75M465.19 248.5h7.88M540.56 248.5h24.19M573.19 248.5h4.5M580.5 249.5h2.25M585 249.5h3.38M589.5 249.5h2.25M595.12 250.5h7.31M606.94 250.5h1.69M611.44 249.5h.56M624.94 248.5h9.56M642.94 249.5h3.94M650.81 250.5h5.06M659.81 251.5h12.94M676.12 250.5h2.81M681.19 249.5h2.81M686.81 248.5h14.06M704.81 249.5h5.62M721.12 249.5h6.75M736.31 248.5h44.44M469.12 251.5h11.25M539.44 251.5h6.75M585 251.5h2.25M685.69 251.5h3.94M694.69 251.5h4.5M760.5 251.5h12.94M563.62 263.5h5.62M570.94 263.5h1.12M610.88 263.5h2.81M615.94 264.5h3.38M621 264.5h4.5M626.06 264.5h6.19M636.19 263.5h5.06M649.69 263.5h6.19M660.94 264.5h1.12M673.31 264.5h3.38M679.5 263.5h2.81M704.25 263.5h2.81M723.94 263.5h6.75M465.19 265.5h10.12M484.88 264.5h43.31M543.38 265.5h4.5M551.81 265.5h.56M556.31 265.5h2.25M563.06 266.5h2.81M568.69 266.5h2.81M576 266.5h5.62M586.69 265.5h3.94M596.25 264.5h1.12M603.56 264.5h1.12M606.94 265.5h2.25M611.44 266.5h2.25M615.38 267.5h2.25M622.69 268.5h9.56M636.19 267.5h3.94M645.19 266.5h15.75M663.19 267.5h16.88M688.5 266.5h7.31M700.88 266.5h1.69M709.31 267.5h5.62M726.19 266.5h12.94M759.38 265.5h21.38M471.94 268.5h9.56M526.5 268.5h15.19M549.56 268.5h.56M552.38 267.5h.56M556.31 268.5h3.38M562.5 269.5h5.62M570.94 269.5h4.5M583.31 269.5h5.06M591.75 268.5h8.44M601.31 267.5h2.25M606.38 268.5h2.81M611.44 269.5h2.25M615.38 270.5h2.25M642.38 270.5h3.94M651.38 269.5h11.25M664.88 270.5h12.94M699.75 270.5h15.19M736.31 269.5h18.56M549.56 270.5h1.69M576.56 283.5h15.75M592.88 283.5h1.12M600.19 283.5h5.06M609.75 283.5h.56M613.69 284.5h1.69M618.19 284.5h15.75M666.56 284.5h13.5M685.69 285.5h7.88M699.75 285.5h3.94M708.19 284.5h4.5M716.06 283.5h41.62M465.19 286.5h.56M474.75 285.5h7.88M516.38 285.5h9.56M533.25 285.5h9M543.94 284.5h5.62M555.75 284.5h1.12M559.12 284.5h2.81M564.75 285.5h3.94M574.31 286.5h14.62M592.88 286.5h4.5M601.31 287.5h3.94M609.19 287.5h2.25M614.81 287.5h10.12M631.69 286.5h10.69M647.44 287.5h3.38M654.75 288.5h6.75M664.88 288.5h1.69M686.81 288.5h9M700.88 288.5h4.5M709.31 287.5h7.88M754.31 286.5h16.88M780.19 286.5h.56M465.19 289.5h6.75M480.38 288.5h38.81M531 288.5h9.56M543.38 287.5h3.38M549.56 287.5h6.75M559.12 288.5h2.81M566.44 289.5h21.38M591.19 289.5h3.38M597.38 290.5h2.81M620.44 290.5h3.38M627.19 289.5h5.62M638.44 289.5h5.06M645.75 290.5h2.25M718.88 290.5h30.38M764.44 289.5h16.31M646.31 302.5h2.25M650.81 303.5h3.94M662.06 303.5h6.75M671.06 302.5h2.25M465.19 303.5h3.94M477.56 302.5h7.31M505.12 302.5h14.06M545.06 302.5h1.12M553.5 303.5h4.5M570.38 303.5h2.81M577.12 302.5h10.12M590.06 303.5h2.25M594.56 304.5h1.69M603 304.5h3.38M609.75 304.5h5.06M618.19 303.5h3.94M628.31 303.5h5.06M635.62 304.5h2.81M640.69 305.5h2.25M670.5 305.5h2.25M676.12 304.5h13.5M692.44 305.5h4.5M697.5 305.5h.56M698.62 304.5h5.62M709.31 305.5h5.06M736.31 304.5h11.25M762.75 303.5h18M482.62 305.5h39.94M545.06 305.5h1.12M560.25 307.5h1.69M590.62 307.5h2.81M599.62 307.5h4.5M605.81 307.5h6.75M628.31 307.5h2.81M633.94 308.5h2.25M638.44 309.5h3.38M649.12 310.5h1.69M658.69 309.5h3.94M664.88 308.5h6.19M675.56 307.5h.56M683.44 308.5h9.56M694.12 308.5h1.12M700.88 308.5h12.38M717.75 308.5h17.44M745.31 307.5h12.94M472.5 309.5h7.88M513 308.5h24.75M547.88 309.5h1.12M549.56 310.5h2.81M552.94 310.5h7.88M566.44 309.5h5.62M581.06 309.5h2.81M585.56 310.5h4.5M595.12 310.5h2.25M605.25 310.5h5.62M621 310.5h4.5M626.06 310.5h.56M667.69 310.5h1.69M753.75 310.5h15.75M628.88 322.5h.56M630 323.5h.56M641.25 323.5h3.38M647.44 322.5h2.81M674.44 322.5h2.25M679.5 323.5h3.38M694.69 323.5h4.5M707.06 322.5h1.12M717.19 322.5h13.5M469.69 323.5h8.44M487.12 322.5h45M537.75 323.5h5.62M550.12 323.5h2.81M556.31 323.5h1.69M560.81 322.5h3.94M565.31 322.5h6.19M574.31 322.5h2.25M580.5 322.5h1.69M583.88 323.5h1.69M588.94 324.5h20.25M610.88 324.5h1.12M618.19 324.5h2.25M623.81 325.5h5.06M644.62 325.5h2.81M650.81 324.5h3.94M662.62 324.5h3.94M668.81 325.5h2.81M681.19 327.5h11.25M706.5 325.5h11.25M726.19 325.5h12.38M754.31 324.5h14.06M465.19 327.5h1.12M571.5 325.5h2.81M576 325.5h2.25M587.25 327.5h14.62M605.25 328.5h2.25M610.88 327.5h2.81M615.94 328.5h3.94M624.94 329.5h6.19M635.62 329.5h3.38M641.81 328.5h2.81M648 327.5h11.25M662.06 328.5h2.81M667.12 329.5h2.81M672.75 330.5h3.94M686.25 330.5h6.19M694.12 329.5h1.69M703.69 329.5h.56M705.38 328.5h3.94M717.75 329.5h6.75M735.19 328.5h13.5M765.56 327.5h15.19M465.19 330.5h7.88M480.94 329.5h74.25M559.12 329.5h1.12M566.44 329.5h.56M568.12 328.5h2.25M573.75 329.5h2.81M582.75 330.5h14.06M645.75 330.5h9M774 330.5h6.75M671.06 342.5h5.62M612 342.5h3.94M632.81 342.5h1.69M654.75 342.5h2.25M658.12 343.5h.56M659.25 344.5h2.81M668.25 345.5h8.44M681.19 344.5h3.38M687.94 343.5h2.25M691.31 342.5h1.12M695.25 342.5h10.69M712.12 343.5h12.94M735.75 342.5h20.25M465.19 344.5h5.06M478.69 343.5h15.19M511.88 343.5h21.38M542.81 342.5h18.56M564.19 343.5h.56M566.44 344.5h3.94M574.88 345.5h20.81M596.25 344.5h.56M597.38 343.5h5.62M606.38 344.5h3.94M613.69 345.5h5.06M632.81 345.5h11.25M646.31 345.5h4.5M654.19 346.5h3.94M659.81 347.5h1.12M678.38 347.5h4.5M687.94 346.5h2.25M696.94 345.5h4.5M704.25 346.5h27.56M753.19 345.5h10.69M772.31 344.5h8.44M466.88 347.5h9M483.75 346.5h60.19M564.19 346.5h1.69M566.44 347.5h1.12M571.5 348.5h4.5M585.56 349.5h6.19M592.88 348.5h.56M594 347.5h2.81M598.5 347.5h5.06M607.5 347.5h5.06M617.06 348.5h6.19M638.44 349.5h10.12M653.62 350.5h7.88M670.5 350.5h7.88M689.06 349.5h12.38M725.06 349.5h25.88M762.75 348.5h6.75M473.06 350.5h8.44M510.19 349.5h11.25M547.31 349.5h19.12M567 350.5h.56M603 350.5h11.81M621 362.5h3.94M628.31 362.5h2.25M633.38 363.5h3.38M640.12 364.5h3.94M659.25 364.5h3.38M665.44 363.5h2.25M670.5 362.5h8.44M680.62 362.5h1.12M683.44 362.5h2.81M688.5 363.5h2.25M694.12 364.5h3.94M711.56 364.5h5.06M723.94 363.5h28.69M763.31 362.5h6.19M470.25 364.5h9M498.38 363.5h30.94M541.12 364.5h20.81M572.06 364.5h1.12M589.5 364.5h6.75M601.31 365.5h6.19M617.62 366.5h5.06M623.25 365.5h5.06M633.38 366.5h5.06M642.94 367.5h5.06M660.94 367.5h3.94M668.25 366.5h3.38M683.44 366.5h3.94M691.31 367.5h4.5M702.56 368.5h6.75M716.06 367.5h7.31M747.56 366.5h14.62M767.81 365.5h7.31M465.19 368.5h2.25M476.44 367.5h7.31M538.31 367.5h14.62M566.44 367.5h9.56M581.62 366.5h5.06M592.88 367.5h3.38M599.06 368.5h3.38M605.25 369.5h3.38M621.56 369.5h7.88M637.31 369.5h6.19M680.62 369.5h.56M761.62 369.5h5.06M772.88 368.5h7.88M581.62 369.5h7.88M609.19 381.5h2.25M614.25 381.5h8.44M660.38 381.5h2.81M666.56 381.5h2.25M671.06 382.5h2.81M687.38 381.5h12.94M713.25 381.5h19.12M473.06 381.5h7.88M555.75 381.5h3.94M573.75 381.5h6.19M594.56 381.5h2.81M599.62 382.5h2.25M604.69 383.5h1.69M608.62 384.5h2.81M612.56 384.5h1.12M618.19 384.5h3.94M626.06 383.5h2.81M632.81 382.5h5.62M645.19 382.5h6.19M654.19 383.5h2.25M658.69 384.5h1.12M664.88 384.5h1.69M669.38 385.5h19.12M696.94 384.5h51.19M762.75 383.5h4.5M772.88 382.5h6.75M465.19 385.5h5.06M478.69 384.5h12.94M513.56 384.5h11.81M537.75 383.5h10.12M554.62 384.5h5.06M582.19 384.5h10.12M596.25 385.5h3.94M604.12 386.5h2.25M612 386.5h5.62M622.69 386.5h9M646.31 386.5h5.06M654.75 387.5h2.25M659.81 386.5h1.12M663.19 387.5h2.81M668.81 388.5h3.94M673.31 388.5h5.62M687.94 388.5h8.44M708.19 387.5h5.06M744.75 387.5h17.44M766.69 386.5h4.5M777.38 385.5h3.38M467.44 388.5h8.44M482.62 387.5h52.31M550.69 387.5h9M578.81 388.5h13.5M601.31 389.5h5.62M608.06 389.5h1.12M611.44 388.5h2.25M624.94 389.5h9.56M770.06 389.5h5.62M635.62 401.5h1.69M638.44 402.5h1.69M643.5 402.5h1.12M646.31 401.5h15.19M681.19 401.5h3.94M745.88 401.5h16.88M465.19 402.5h7.31M479.81 401.5h15.19M547.88 401.5h1.12M579.94 401.5h3.94M584.44 402.5h.56M587.81 403.5h2.25M603.56 401.5h3.38M623.25 401.5h2.25M627.75 402.5h2.25M631.12 403.5h1.69M633.94 404.5h1.12M640.69 404.5h3.94M654.19 404.5h3.94M660.94 403.5h1.69M664.88 403.5h6.75M678.94 404.5h5.06M762.19 404.5h3.94M770.06 403.5h4.5M779.62 402.5h1.12M483.19 404.5h32.06M538.31 404.5h19.12M579.94 404.5h5.06M604.12 404.5h8.44M618.19 404.5h4.5M629.44 406.5h1.12M632.25 407.5h5.06M639.56 407.5h3.38M653.62 407.5h2.81M658.69 406.5h3.94M673.31 407.5h7.88M689.06 408.5h68.62M765 407.5h3.94M773.44 406.5h4.5M465.19 409.5h2.25M474.75 408.5h6.19M497.81 407.5h63.56M577.69 407.5h9.56M587.81 408.5h1.69M593.44 408.5h7.31M621 408.5h3.38M626.06 409.5h1.69M632.81 409.5h4.5M776.81 409.5h3.94M669.38 421.5h29.25M712.12 422.5h43.31M765 421.5h3.94M471.94 422.5h6.19M483.19 421.5h12.94M613.12 421.5h5.06M620.44 421.5h2.25M633.94 421.5h13.5M652.5 422.5h3.38M659.25 423.5h3.38M667.69 424.5h23.62M767.25 424.5h4.5M775.69 423.5h4.5M465.19 426.5h4.5M486 424.5h18M520.31 423.5h15.75M552.38 422.5h38.25M599.06 422.5h3.38M606.94 423.5h3.94M614.81 424.5h6.75M628.88 424.5h18M658.69 426.5h3.94M667.12 427.5h14.06M699.19 428.5h15.19M762.19 428.5h3.94M770.06 427.5h4.5M778.5 426.5h2.25M467.44 429.5h6.75M479.25 428.5h5.06M495 427.5h15.19M524.25 426.5h13.5M594.56 424.5h3.38M608.62 426.5h5.06M619.88 427.5h24.75M649.69 428.5h4.5M657.56 429.5h4.5M527.62 429.5h12.38M551.81 428.5h53.44M611.44 429.5h7.31M691.31 441.5h10.69M716.62 442.5h29.81M760.5 442.5h4.5M769.5 441.5h3.94M465.19 443.5h6.75M477 442.5h5.06M486.56 441.5h11.25M646.31 441.5h5.62M658.69 442.5h7.88M673.88 443.5h7.31M688.5 444.5h8.44M708.75 445.5h16.88M763.88 445.5h3.94M772.31 444.5h3.94M780.19 443.5h.56M469.69 446.5h5.62M480.38 445.5h4.5M493.31 444.5h11.81M515.81 443.5h10.12M534.94 442.5h9.56M554.62 441.5h12.94M601.31 441.5h12.94M622.69 442.5h6.19M634.5 443.5h4.5M644.06 444.5h5.62M656.44 445.5h7.31M671.06 446.5h7.31M685.12 447.5h7.88M703.12 448.5h12.94M736.88 449.5h25.88M766.69 448.5h3.94M775.12 447.5h3.94M473.62 449.5h5.06M483.19 448.5h5.62M501.75 447.5h10.69M522.56 446.5h9.56M541.69 445.5h9.56M563.06 444.5h43.88M617.62 445.5h7.31M631.12 446.5h5.62M641.81 447.5h5.62M653.62 448.5h6.75M667.69 449.5h7.31M530.44 449.5h9.56M550.12 448.5h11.81M608.62 448.5h9.56M626.06 449.5h6.19M696.38 461.5h15.75M737.44 462.5h32.62M774 461.5h3.94M472.5 463.5h19.12M518.62 462.5h23.62M578.25 461.5h18M623.81 462.5h17.44M656.44 463.5h15.19M687.38 464.5h20.25M739.12 465.5h33.75M776.81 464.5h3.94M465.19 467.5h5.06M510.75 466.5h40.5M616.5 466.5h29.81M670.5 467.5h26.44M741.38 468.5h33.75M779.06 467.5h1.69M469.5 426.27v25.65M471.5 466.28v6.16M475.5 135.94v226.73M475.5 410.88v12.31M475.5 453.97v8.21M478.5 131.83v8.72M478.5 340.61v73.87M478.5 460.13v14.88M482.5 144.66v178.51M482.5 416.53v5.64M482.5 453.97v4.1M484.5 131.83v6.16M484.5 350.87v31.29M484.5 401.65v9.75M487.5 433.45v9.75M484.5 461.15v13.85M487.5 364.72v43.09M489.5 423.71v5.13M489.5 447.82v4.62M487.5 465.77v7.18M491.5 135.42v10.26M491.5 307.78v41.04M491.5 411.4v5.13M493.5 430.38v15.39M491.5 457.56v4.62M493.5 362.15v45.65M496.5 427.3v5.64M496.5 443.71v5.64M498.5 152.35v86.69M496.5 375.49v28.21M498.5 420.12v4.1M500.5 437.04v2.56M498.5 451.92v3.08M500.5 131.83v5.64M500.5 327.78v33.34M500.5 408.32v5.13M502.5 425.76v4.62M502.5 445.76v4.62M500.5 461.15v13.85M502.5 372.41v31.8M505.5 423.71v3.59M505.5 448.84v3.59M507.5 144.14v8.72M507.5 216.98v89.77M505.5 384.72v11.29M507.5 417.55v3.59M509.5 429.35v17.95M507.5 453.97v3.59M509.5 326.24v15.39M509.5 353.43v16.41M509.5 404.21v6.67M511.5 422.68v4.1M511.5 449.36v3.59M514.5 150.81v96.44M511.5 378.57v18.47M514.5 420.63v3.59M514.5 451.41v3.08M516.5 136.96v8.72M516.5 262.64v27.19M516.5 306.24v9.23M516.5 414.99v4.1M518.5 425.76v4.62M518.5 445.76v4.1M516.5 456.54v4.1M520.5 148.76v100.54M518.5 360.1v14.88M518.5 396.01v11.8M520.5 420.63v3.59M520.5 451.92v3.08M523.5 143.63v8.21M523.5 240.07v44.63M523.5 418.58v3.59M523.5 453.46v3.59M525.5 131.83v6.67M525.5 290.85v21.03M525.5 323.17v11.29M525.5 412.94v4.1M527.5 423.71v3.59M527.5 448.33v3.59M525.5 459.1v15.9M529.5 141.58v8.21M529.5 240.58v26.67M529.5 279.56v6.67M529.5 316.5v10.77M527.5 348.3v56.43M529.5 418.58v3.59M529.5 453.46v3.59M532.5 136.96v8.21M532.5 244.68v13.34M532.5 284.18v3.59M532.5 312.39v5.13M532.5 329.32v4.62M532.5 417.04v3.08M534.5 432.43v10.26M532.5 455v4.62M536.5 148.25v91.82M536.5 259.56v7.69M536.5 278.03v4.62M534.5 288.29v3.08M534.5 306.75v4.1M536.5 319.06v10.26M534.5 336.5v3.59M534.5 410.88v4.1M536.5 421.66v3.59M536.5 449.87v3.08M534.5 463.72v10.26M538.5 135.42v7.69M538.5 288.8v3.08M538.5 313.42v4.1M538.5 331.89v3.08M536.5 346.25v13.85M536.5 383.7v19.49M538.5 417.04v3.08M538.5 455v5.13M541.5 131.83v6.67M543.5 269.82v5.13M543.5 277v4.62M541.5 288.8v2.56M541.5 312.91v4.1M541.5 332.91v3.08M541.5 414.99v3.59M543.5 430.38v13.34M541.5 457.05v8.72M541.5 470.9v4.1M545.5 141.58v7.69M545.5 216.47v27.19M545.5 274.44v1.03M543.5 285.72v5.13M543.5 300.08v2.05M543.5 337.53v5.13M543.5 363.69v9.23M543.5 409.34v4.1M545.5 420.63v3.59M545.5 450.38v4.1M547.5 131.83v5.13M547.5 271.36v8.21M547.5 294.95v3.59M547.5 307.26v1.54M547.5 311.37v5.64M545.5 383.7v17.44M547.5 415.5v3.59M547.5 457.05v17.95M552.5 188.26v19.49M552.5 241.09v13.85M552.5 256.48v5.64M550.5 267.25v3.08M550.5 271.36v3.59M552.5 283.67v3.59M552.5 287.77v2.56M550.5 304.19v2.05M550.5 310.86v1.54M550.5 316.5v3.08M550.5 413.96v3.59M552.5 430.38v12.82M550.5 460.64v13.85M554.5 135.42v7.69M554.5 219.55v10.26M554.5 262.12v1.03M552.5 264.69v6.16M554.5 276.49v2.05M554.5 305.21v2.05M552.5 310.34v2.56M552.5 315.47v1.03M552.5 321.11v4.62M552.5 330.35v5.64M552.5 364.2v8.21M552.5 406.78v5.13M554.5 420.12v4.1M554.5 450.89v5.64M559.5 240.58v13.85M556.5 259.56v2.05M556.5 272.38v2.56M559.5 289.82v11.29M556.5 310.34v1.54M554.5 316.5v2.05M556.5 338.56v20.52M556.5 414.99v4.1M556.5 460.64v11.29M561.5 148.76v44.11M561.5 206.72v9.75M561.5 230.83v5.13M561.5 250.33v2.56M559.5 261.1v7.18M559.5 268.79v4.1M561.5 284.69v2.05M561.5 304.19v2.05M559.5 311.88v1.54M556.5 321.63v2.05M559.5 329.84v3.08M559.5 352.92v6.67M559.5 413.96v4.62M561.5 433.97v6.67M563.5 131.83v5.13M565.5 239.55v6.16M563.5 258.02v5.13M563.5 271.36v4.1M563.5 279.56v2.05M565.5 288.8v6.67M565.5 297.52v5.13M563.5 309.32v2.05M561.5 315.47v3.08M561.5 331.89v1.54M563.5 337.02v2.05M563.5 348.3v3.59M561.5 358.56v9.23M561.5 380.11v31.8M563.5 421.66v4.1M563.5 450.38v9.75M563.5 468.85v6.16M568.5 208.26v12.31M568.5 232.37v13.85M565.5 271.36v2.56M565.5 274.95v2.56M568.5 289.82v12.31M565.5 312.91v3.08M565.5 325.73v5.64M565.5 344.2v2.05M565.5 354.46v3.08M565.5 416.01v4.62M570.5 142.6v7.18M570.5 187.23v13.85M570.5 245.2v20.01M570.5 286.75v17.95M568.5 327.78v7.69M568.5 338.04v4.1M568.5 354.97v5.64M568.5 382.16v8.21M568.5 414.47v5.13M574.5 152.35v28.73M574.5 207.24v6.67M574.5 226.73v7.18M574.5 255.97v4.62M572.5 324.71v4.1M572.5 329.32v11.29M570.5 346.76v2.05M570.5 361.64v2.05M570.5 395.49v16.93M572.5 422.17v5.64M572.5 446.79v25.65M577.5 148.25v15.9M577.5 175.95v11.8M577.5 203.65v5.64M577.5 230.83v4.62M577.5 250.84v4.1M577.5 256.48v1.03M577.5 265.2v5.64M574.5 343.69v3.59M572.5 354.46v3.08M572.5 364.72v3.59M574.5 373.44v2.05M574.5 389.85v3.08M574.5 416.01v4.62M579.5 136.45v7.18M581.5 210.83v16.41M579.5 237.5v10.26M581.5 262.64v4.62M579.5 277v3.08M579.5 311.37v3.59M579.5 318.55v2.05M579.5 325.22v6.16M577.5 346.25v3.59M577.5 381.64v2.05M577.5 395.49v3.08M577.5 413.96v5.13M583.5 146.71v9.23M583.5 182.1v11.8M583.5 200.57v7.18M583.5 228.27v5.64M583.5 247.25v2.56M583.5 250.33v6.67M583.5 273.41v3.08M581.5 284.69v3.59M581.5 298.03v5.64M581.5 341.12v4.62M579.5 354.46v5.64M579.5 366.77v23.6M581.5 393.96v3.59M579.5 405.75v5.13M581.5 423.19v41.04M586.5 142.09v7.18M586.5 193.9v7.69M586.5 228.78v7.18M586.5 242.63v4.1M586.5 248.27v5.13M586.5 274.95v3.08M583.5 357.54v2.05M583.5 400.62v8.72M583.5 415.5v6.67M588.5 131.83v6.16M590.5 151.84v46.68M590.5 203.65v15.9M590.5 252.89v2.05M590.5 268.28v4.62M588.5 279.05v6.67M588.5 287.77v5.64M588.5 305.21v6.67M588.5 347.79v5.64M586.5 359.07v4.1M586.5 405.24v1.54M586.5 413.45v7.69M588.5 472.95v2.05M592.5 140.55v7.18M592.5 220.57v18.98M592.5 242.63v1.03M592.5 247.76v2.05M592.5 279.56v8.21M590.5 291.88v1.03M590.5 312.39v3.08M590.5 320.09v15.39M590.5 351.38v10.26M588.5 366.77v4.62M588.5 380.11v8.21M588.5 402.16v7.18M590.5 433.45v7.69M590.5 449.87v10.26M595.5 136.45v6.67M595.5 228.27v2.05M595.5 240.58v3.08M595.5 244.17v2.56M595.5 280.59v1.03M595.5 299.06v6.16M592.5 325.22v6.16M595.5 343.69v2.05M592.5 364.72v2.05M592.5 394.47v10.77M592.5 414.99v1.03M592.5 423.19v10.26M597.5 131.83v.51M599.5 145.68v27.19M599.5 207.75v12.82M599.5 230.32v7.69M599.5 247.25v11.8M599.5 271.36v1.54M597.5 277v9.23M599.5 301.11v.51M597.5 304.19v2.56M597.5 308.29v3.59M595.5 324.71v8.21M597.5 340.09v2.56M597.5 347.79v3.08M597.5 357.54v3.59M595.5 367.79v2.56M595.5 392.42v7.18M595.5 408.83v1.54M595.5 419.09v2.05M595.5 423.71v10.26M597.5 467.82v7.18M601.5 134.91v6.67M601.5 235.45v6.16M601.5 267.25v3.08M601.5 276.49v12.82M601.5 299.57v1.54M599.5 319.06v3.59M599.5 334.96v2.56M599.5 339.58v4.62M599.5 366.77v2.05M597.5 374.46v15.39M599.5 399.09v4.62M599.5 407.29v5.64M597.5 417.55v2.05M597.5 422.68v3.08M599.5 451.92v6.16M604.5 131.83v6.16M606.5 187.23v10.77M606.5 228.78v1.03M604.5 261.61v7.18M604.5 297.52v3.08M604.5 301.11v11.29M601.5 326.76v3.08M601.5 337.53v2.05M601.5 340.61v2.05M601.5 373.95v3.59M601.5 391.39v3.08M601.5 405.75v1.54M601.5 436.02v14.36M604.5 473.46v1.54M608.5 140.55v6.16M608.5 230.83v24.11M608.5 265.2v7.18M608.5 286.23v2.56M606.5 293.93v5.13M606.5 318.55v4.1M604.5 333.94v1.54M604.5 341.63v1.54M606.5 352.92v7.69M606.5 362.66v7.18M604.5 380.11v10.26M604.5 397.03v2.05M604.5 437.56v12.31M606.5 464.23v5.64M610.5 131.83v4.62M613.5 221.09v4.62M613.5 226.73v.51M610.5 250.84v1.03M610.5 259.56v2.05M610.5 280.59v2.05M610.5 288.8v1.54M610.5 296.49v9.23M610.5 322.65v3.08M608.5 329.32v.51M606.5 333.43v7.18M608.5 349.33v3.08M608.5 380.11v9.23M606.5 392.93v1.03M606.5 398.06v4.1M606.5 420.12v19.49M608.5 452.95v4.1M610.5 472.44v2.56M613.5 131.83v.51M615.5 151.32v24.11M615.5 206.21v9.75M615.5 225.7v15.39M613.5 246.74v1.54M613.5 254.43v3.59M615.5 268.79v4.1M615.5 274.95v6.16M613.5 286.75v2.05M613.5 300.6v3.59M613.5 323.17v.51M610.5 334.96v3.08M610.5 348.81v3.08M613.5 365.74v14.36M610.5 387.29v1.03M610.5 399.6v17.95M610.5 448.84v3.59M613.5 468.85v6.16M617.5 135.42v6.16M619.5 215.96v3.59M619.5 220.57v1.54M617.5 273.92v2.05M615.5 285.21v6.16M615.5 294.95v4.62M617.5 306.75v2.56M617.5 319.06v1.54M615.5 330.35v2.56M613.5 338.56v2.56M613.5 350.35v2.56M615.5 361.13v3.59M617.5 370.87v5.13M615.5 379.59v1.03M613.5 384.21v2.05M613.5 395.49v7.69M613.5 416.01v5.13M613.5 448.84v2.56M615.5 461.67v4.62M622.5 214.42v5.64M622.5 224.68v10.77M619.5 245.2v8.72M619.5 267.25v4.62M619.5 291.36v4.1M619.5 301.11v3.59M619.5 329.84v2.56M617.5 338.04v2.05M615.5 344.71v5.64M617.5 356v3.08M619.5 365.23v3.08M619.5 371.9v1.54M617.5 380.62v4.1M617.5 408.32v11.29M615.5 423.71v3.59M615.5 442.17v6.16M617.5 453.97v3.08M619.5 468.34v5.13M624.5 146.19v6.16M624.5 175.43v25.65M624.5 208.78v4.62M624.5 216.47v1.03M624.5 220.57v3.08M624.5 242.63v2.56M622.5 254.94v13.34M624.5 315.99v6.67M622.5 333.43v2.05M619.5 343.69v3.59M619.5 351.89v4.1M622.5 364.72v3.08M619.5 389.34v11.29M619.5 418.58v3.08M619.5 450.89v2.05M622.5 465.77v4.62M626.5 131.83v4.62M628.5 227.24v5.13M628.5 241.09v4.1M626.5 257.51v5.64M626.5 265.71v14.36M624.5 290.85v5.13M624.5 296.49v6.67M626.5 310.86v2.05M626.5 331.89v2.56M624.5 339.58v2.56M624.5 361.64v1.54M622.5 417.04v1.03M622.5 450.38v2.05M624.5 460.64v3.08M626.5 472.44v2.56M631.5 151.84v45.14M631.5 228.27v3.59M631.5 246.74v3.08M628.5 292.9v2.05M628.5 318.04v2.05M628.5 343.69v3.08M626.5 358.05v2.05M626.5 369.85v3.08M626.5 387.29v19.49M626.5 413.96v.51M624.5 423.19v3.59M624.5 445.76v4.1M626.5 454.49v2.05M628.5 465.77v4.1M633.5 141.58v6.67M633.5 206.21v2.56M633.5 224.68v4.1M635.5 234.94v3.59M635.5 243.66v3.59M633.5 252.38v2.56M633.5 281.62v8.21M631.5 298.03v3.08M631.5 327.27v2.05M633.5 334.96v5.13M631.5 346.25v2.05M628.5 354.46v2.05M628.5 365.23v4.1M628.5 412.42v6.67M628.5 451.41v2.05M631.5 464.23v3.08M637.5 150.81v31.8M637.5 195.95v3.59M637.5 201.59v3.59M635.5 208.78v8.21M637.5 231.86v3.08M637.5 249.3v2.05M635.5 260.07v7.18M635.5 268.79v6.67M635.5 295.98v2.05M633.5 303.16v3.08M633.5 326.76v2.05M635.5 332.91v1.54M635.5 341.12v2.56M633.5 349.33v2.05M631.5 362.66v8.72M631.5 411.4v9.23M631.5 450.89v2.05M633.5 459.61v2.56M635.5 469.36v4.62M640.5 147.22v27.7M640.5 202.62v.51M640.5 232.37v3.08M640.5 250.33v2.56M640.5 282.13v9.23M637.5 300.6v2.05M635.5 311.37v10.26M637.5 327.78v1.54M637.5 351.38v2.05M635.5 359.59v2.56M635.5 374.46v4.1M635.5 407.81v1.03M633.5 421.14v5.13M633.5 446.79v3.59M635.5 454.49v2.05M637.5 463.72v3.08M642.5 136.96v6.16M644.5 186.21v10.26M644.5 199.03v1.03M644.5 202.62v6.16M642.5 213.91v4.62M642.5 225.7v7.18M644.5 243.14v3.08M642.5 254.94v3.59M642.5 275.97v3.59M642.5 293.41v2.56M640.5 302.65v2.56M640.5 327.27v1.54M642.5 334.45v10.77M640.5 352.92v2.56M637.5 365.74v4.62M637.5 406.78v10.26M637.5 451.92v2.05M640.5 462.69v2.56M646.5 146.19v37.96M646.5 200.57v8.21M646.5 216.98v2.56M646.5 241.61v11.8M646.5 282.13v9.23M644.5 300.6v2.56M642.5 308.8v3.08M642.5 324.19v2.05M644.5 329.84v2.05M644.5 348.3v3.08M642.5 357.02v3.08M642.5 377.54v7.69M642.5 389.34v13.85M640.5 406.27v13.34M640.5 451.41v2.05M642.5 459.1v2.05M644.5 466.8v3.59M649.5 142.09v6.67M649.5 211.85v2.05M649.5 219.55v3.59M649.5 247.25v16.41M649.5 286.75v1.03M646.5 307.78v3.08M646.5 327.27v2.56M646.5 350.87v4.62M644.5 402.16v1.54M642.5 423.71v6.16M642.5 447.3v3.59M644.5 454.49v1.54M646.5 462.18v3.08M651.5 131.83v6.67M653.5 151.32v15.9M653.5 189.8v7.18M653.5 197.49v3.08M653.5 215.44v2.05M651.5 225.7v3.08M651.5 244.17v4.1M651.5 273.92v24.62M649.5 316.5v19.49M649.5 342.66v14.36M649.5 369.85v26.16M646.5 401.14v6.16M646.5 409.34v12.31M646.5 452.43v1.54M649.5 461.15v2.56M651.5 473.98v1.03M655.5 141.06v6.67M655.5 174.41v13.85M655.5 192.36v3.08M658.5 210.31v.51M655.5 225.19v2.05M655.5 247.76v3.59M655.5 267.25v3.59M653.5 317.01v3.59M651.5 332.91v17.44M653.5 372.41v5.64M651.5 393.44v1.54M649.5 419.6v5.64M649.5 451.92v1.54M651.5 458.08v2.05M653.5 464.74v2.56M658.5 136.96v7.18M658.5 180.05v4.62M658.5 192.87v1.54M660.5 204.67v4.1M660.5 216.47v3.08M658.5 227.76v3.08M658.5 241.61v6.16M660.5 255.46v9.75M658.5 270.84v1.03M658.5 305.73v7.18M655.5 323.68v3.08M655.5 357.54v5.13M655.5 388.31v1.54M653.5 393.44v24.62M651.5 427.81v4.1M651.5 447.3v3.59M653.5 454.49v1.03M655.5 461.15v2.05M660.5 131.83v1.03M662.5 147.22v28.73M662.5 185.69v2.56M662.5 195.95v4.1M662.5 214.93v4.1M660.5 223.14v2.05M660.5 249.81v3.59M662.5 263.66v6.67M660.5 273.92v1.54M660.5 294.44v3.08M662.5 306.24v4.1M660.5 317.01v2.05M658.5 325.22v2.05M658.5 346.76v5.64M658.5 386.26v1.03M655.5 422.17v3.59M655.5 452.43v1.03M658.5 460.13v2.05M660.5 470.39v4.62M664.5 135.94v7.69M664.5 188.26v5.13M664.5 223.65v2.56M664.5 250.33v6.16M664.5 261.61v3.59M662.5 282.13v5.64M664.5 298.03v1.54M664.5 314.96v1.54M662.5 322.14v2.05M660.5 329.32v3.08M660.5 348.3v1.54M662.5 355.48v3.08M662.5 381.64v1.03M660.5 384.72v10.26M660.5 402.16v1.03M658.5 424.22v3.59M658.5 450.89v2.05M660.5 457.56v1.54M662.5 462.69v2.56M667.5 131.83v7.18M667.5 231.35v10.77M667.5 265.2v1.54M664.5 273.41v4.62M664.5 290.85v3.08M667.5 304.7v1.54M667.5 316.5v2.05M664.5 328.3v2.56M664.5 361.64v5.13M664.5 367.79v3.59M664.5 379.59v.51M664.5 389.85v4.1M664.5 398.06v1.03M662.5 419.09v3.59M660.5 429.35v4.1M660.5 444.74v4.1M662.5 453.46v1.54M664.5 459.61v2.05M667.5 473.98v1.03M671.5 142.6v8.72M671.5 184.15v1.54M671.5 187.74v73.35M669.5 267.77v2.05M667.5 275.97v11.8M669.5 295.47v3.59M669.5 320.6v3.08M667.5 332.4v4.62M667.5 341.12v6.16M667.5 361.64v4.1M667.5 385.24v2.05M667.5 395.49v2.05M667.5 400.11v9.23M664.5 424.22v3.08M664.5 450.38v2.56M667.5 459.1v1.54M669.5 467.31v3.59M673.5 131.83v6.16M673.5 204.67v4.1M673.5 258.53v4.62M673.5 297.52v10.26M671.5 318.04v2.56M669.5 327.78v2.56M671.5 340.61v6.16M671.5 356v4.62M669.5 367.79v3.59M669.5 379.59v1.54M671.5 385.24v7.18M671.5 398.06v7.18M669.5 412.94v3.59M667.5 425.76v3.59M667.5 447.82v3.59M669.5 456.54v1.54M671.5 461.67v1.54M673.5 472.95v2.05M676.5 131.83v1.54M678.5 179.54v1.54M676.5 204.16v7.18M678.5 229.81v11.29M676.5 256.99v5.13M676.5 292.9v12.31M673.5 316.5v13.34M673.5 360.1v3.08M673.5 379.08v7.18M673.5 390.88v2.05M673.5 408.83v3.59M671.5 421.14v3.08M669.5 433.45v10.26M671.5 452.43v1.54M673.5 458.59v1.54M676.5 470.39v4.62M680.5 136.96v9.75M680.5 193.9v5.13M680.5 216.47v5.13M680.5 247.25v4.1M678.5 263.66v8.21M678.5 299.57v6.16M678.5 337.02v5.13M678.5 350.87v3.08M676.5 364.72v9.23M676.5 387.8v1.54M676.5 411.4v3.08M673.5 427.3v4.62M673.5 445.25v4.62M676.5 457.56v1.54M678.5 465.26v2.56M682.5 203.13v8.72M682.5 250.33v5.13M682.5 265.71v12.31M682.5 285.21v7.18M680.5 307.78v17.44M682.5 340.61v8.72M680.5 361.13v2.56M678.5 368.31v2.05M678.5 382.16v1.54M680.5 388.31v2.56M680.5 406.78v3.59M678.5 416.01v3.59M676.5 431.4v14.88M678.5 455v1.54M680.5 459.61v2.05M682.5 469.36v4.62M687.5 174.41v3.59M685.5 248.79v13.85M685.5 288.8v3.59M685.5 336.5v5.64M685.5 351.38v4.1M682.5 360.61v.51M682.5 381.13v4.1M682.5 411.91v3.59M680.5 426.27v4.62M680.5 447.3v4.1M682.5 457.05v1.54M685.5 467.31v3.59M689.5 131.83v8.72M689.5 200.57v12.31M689.5 238.53v4.62M689.5 260.07v6.16M689.5 286.23v1.54M687.5 291.88v2.56M687.5 324.19v5.64M689.5 339.58v6.67M687.5 353.43v1.03M685.5 414.47v4.1M685.5 456.02v1.54M687.5 463.21v2.05M689.5 472.95v2.05M691.5 241.09v13.34M694.5 272.9v4.1M691.5 289.31v1.54M689.5 298.54v7.18M691.5 319.06v6.16M691.5 334.96v6.67M689.5 350.87v5.64M689.5 377.54v9.75M689.5 407.81v6.16M687.5 422.17v4.1M687.5 452.95v2.05M689.5 458.08v1.54M691.5 466.28v3.59M696.5 192.36v2.56M696.5 201.59v7.69M694.5 239.55v11.29M696.5 261.61v3.08M696.5 273.41v2.05M694.5 284.18v2.56M694.5 290.85v2.05M694.5 308.29v4.62M694.5 325.22v4.1M691.5 342.66v6.16M691.5 418.06v4.1M689.5 437.04v7.69M691.5 455.51v1.54M694.5 464.23v3.08M698.5 187.74v9.75M700.5 203.13v13.85M698.5 231.35v3.59M698.5 251.86v2.05M700.5 262.64v4.62M698.5 279.56v3.59M696.5 286.23v2.56M696.5 290.34v3.59M696.5 298.03v4.1M696.5 306.24v1.03M696.5 313.42v13.85M694.5 337.53v5.13M696.5 356.51v4.1M696.5 378.57v5.13M694.5 422.68v3.59M694.5 454.49v1.54M696.5 460.64v2.05M698.5 468.34v5.64M700.5 284.69v2.05M698.5 292.39v4.1M700.5 309.83v2.56M700.5 326.76v3.08M698.5 348.81v1.54M700.5 361.64v4.62M700.5 374.46v4.62M698.5 417.55v4.62M696.5 430.38v5.64M696.5 445.76v5.13M698.5 456.02v1.54M700.5 463.21v3.08M705.5 147.73v20.52M705.5 190.82v7.69M703.5 254.43v4.62M703.5 285.72v4.62M703.5 305.21v2.56M703.5 331.37v2.05M700.5 342.66v4.62M703.5 360.1v3.59M703.5 378.57v4.1M700.5 426.27v4.1M700.5 451.41v3.59M703.5 461.67v2.56M707.5 222.11v7.69M707.5 258.53v25.65M707.5 284.69v3.08M707.5 306.24v3.08M707.5 322.65v2.05M705.5 328.3v1.54M703.5 338.04v6.16M705.5 354.97v3.59M707.5 366.77v9.23M705.5 386.77v29.24M703.5 429.86v5.64M703.5 446.28v5.13M705.5 458.59v1.54M707.5 464.74v3.59M709.5 317.01v2.05M709.5 361.13v5.64M709.5 378.57v7.69M707.5 425.25v4.62M707.5 451.92v3.59M709.5 460.64v2.05M714.5 131.83v74.89M714.5 228.78v15.9M712.5 282.64v5.64M714.5 297.01v3.59M712.5 309.32v1.54M712.5 319.06v17.44M712.5 359.07v7.69M712.5 384.72v28.73M709.5 436.02v10.26M712.5 459.1v2.05M714.5 473.98v1.03M716.5 255.97v5.64M716.5 275.97v15.9M714.5 419.6v5.13M714.5 455.51v2.05M716.5 461.67v2.56M718.5 264.69v6.67M718.5 300.6v23.6M718.5 347.28v28.21M718.5 410.37v8.21M716.5 437.56v7.18M718.5 457.56v2.05M723.5 131.83v82.07M723.5 218.01v19.49M723.5 239.55v11.29M721.5 311.37v8.21M721.5 356v14.36M721.5 418.06v6.16M721.5 456.02v1.54M723.5 466.28v8.72M725.5 261.61v13.85M725.5 301.11v6.16M725.5 323.17v6.16M725.5 347.79v7.18M725.5 373.44v10.77M725.5 406.27v11.29M723.5 430.38v20.52M725.5 458.08v2.05M730.5 131.83v1.03M727.5 424.22v6.67M727.5 450.89v5.13M730.5 470.9v4.1M732.5 189.28v70.79M730.5 430.89v19.49M732.5 461.15v3.59M736.5 131.83v6.67M734.5 423.71v7.69M734.5 450.38v5.13M736.5 466.8v8.21M739.5 131.83v35.91M739.5 462.18v12.82M741.5 227.76v22.57M741.5 264.18v44.63M741.5 339.58v49.24M741.5 412.42v10.77M741.5 455.51v3.59M745.5 131.83v18.47M745.5 394.98v14.36M745.5 459.1v5.64M745.5 474.49v.51M748.5 141.58v95.41M748.5 247.76v18.47M748.5 362.66v60.02M748.5 455.51v4.62M752.5 131.83v3.08M750.5 319.58v17.44M750.5 432.94v14.88M752.5 460.64v14.36M754.5 142.6v129.27M754.5 344.2v33.86M754.5 421.14v12.31M754.5 447.3v8.72M757.5 149.79v28.21M757.5 222.11v129.78M757.5 433.45v13.85M761.5 131.83v12.31M761.5 359.59v28.21M761.5 418.58v14.88M761.5 447.3v9.23M761.5 474.49v.51M768.5 460.13v7.69M770.5 140.04v43.6M777.5 363.69v110.8" fill="none" stroke="#0000ff" stroke-width="1" stroke-opacity="0.583"/><path d="M645.19 148.5h44.44M762.75 148.5h8.44M477 227.5h37.69M613.12 227.5h3.38M657 227.5h2.25M668.25 227.5h3.38M747.56 227.5h24.75M585 247.5h3.38M595.12 247.5h5.62M659.25 247.5h15.75M485.44 247.5h6.19M522.56 247.5h6.19M645.75 306.5h4.5M661.5 306.5h3.38M466.31 306.5h8.44M547.31 306.5h1.69M569.25 306.5h3.94M585.56 306.5h2.25M617.06 306.5h9M630.56 326.5h.56M637.88 326.5h3.94M673.88 326.5h2.81M695.25 326.5h4.5M475.31 326.5h7.88M534.38 326.5h8.44M550.12 326.5h3.94M559.69 326.5h10.12M580.5 326.5h2.81M636.75 405.5h2.81M690.75 405.5h43.31M470.25 405.5h6.75M586.12 405.5h1.12M601.31 405.5h1.12M626.06 405.5h1.69M705.38 425.5h57.94M475.88 425.5h5.62M651.38 425.5h3.94M551.25 425.5h39.94M599.62 425.5h3.94M465.5 131.83v343.17M479.5 422.68v8.72M479.5 446.28v7.69M483.5 428.32v20.01M488.5 142.09v9.75M488.5 275.46v58.48M488.5 414.47v4.62M488.5 455.51v3.59M492.5 421.14v4.1M492.5 450.89v3.08M497.5 133.37v9.75M497.5 310.86v36.42M497.5 411.4v4.62M497.5 458.59v5.13M501.5 146.71v139.53M501.5 418.06v4.1M501.5 453.46v3.59M506.5 432.94v10.26M506.5 131.83v3.59M506.5 320.6v41.55M506.5 408.32v5.13M506.5 462.18v12.82M510.5 139.01v8.72M510.5 265.2v49.24M510.5 415.5v3.59M510.5 456.02v4.1M515.5 428.32v5.64M515.5 441.66v6.16M515.5 324.71v18.98M515.5 353.94v13.85M515.5 404.21v6.67M519.5 131.83v8.72M519.5 311.37v10.26M519.5 412.94v4.1M519.5 458.59v6.67M519.5 473.46v1.54M524.5 425.76v4.1M524.5 445.76v4.62M524.5 346.25v30.78M524.5 397.03v10.77M528.5 432.43v10.77M528.5 131.83v1.54M528.5 291.36v16.93M528.5 334.45v5.64M528.5 410.88v4.1M528.5 462.18v12.82M533.5 152.86v35.91M533.5 216.47v18.47M533.5 266.74v12.82M533.5 423.71v3.59M533.5 447.82v3.59M533.5 297.01v4.1M533.5 344.2v22.57M533.5 377.54v28.21M537.5 429.35v15.9M537.5 296.49v3.59M537.5 305.73v4.1M537.5 338.04v3.59M537.5 408.83v4.1M542.5 146.19v99.51M542.5 250.33v14.36M542.5 283.67v2.56M542.5 323.17v4.1M542.5 422.17v3.59M542.5 448.84v3.59M546.5 266.23v7.18M542.5 381.13v23.6M546.5 428.32v17.44M546.5 301.62v2.56M546.5 341.63v34.37M546.5 407.29v4.1M551.5 140.04v7.69M551.5 215.44v18.98M551.5 265.71v1.03M551.5 277.51v3.59M551.5 297.01v4.62M551.5 421.14v4.1M551.5 449.36v4.62M555.5 150.3v43.6M555.5 204.16v8.72M555.5 234.94v5.64M555.5 259.05v1.54M555.5 280.59v5.64M555.5 288.8v2.56M555.5 297.52v4.62M551.5 381.64v17.44M555.5 428.84v16.41M555.5 265.2v.51M555.5 312.91v1.54M555.5 321.11v10.26M555.5 366.26v8.21M555.5 402.16v8.21M560.5 133.88v7.18M560.5 254.94v2.05M560.5 274.95v5.13M560.5 281.1v1.54M560.5 308.29v1.54M560.5 338.56v6.16M560.5 422.68v4.1M560.5 448.33v6.67M564.5 144.14v7.18M564.5 216.47v14.36M564.5 251.35v2.56M564.5 283.16v2.05M564.5 305.21v2.05M560.5 321.63v9.23M564.5 431.91v10.77M564.5 333.43v5.13M564.5 360.1v21.54M564.5 393.44v16.41M569.5 131.83v3.59M569.5 266.74v1.03M569.5 275.46v4.62M569.5 308.8v4.62M569.5 324.19v2.56M569.5 423.71v5.64M569.5 445.76v11.8M569.5 466.8v8.21M573.5 137.99v7.69M573.5 244.17v7.69M573.5 261.61v1.03M573.5 272.38v1.54M573.5 321.63v1.54M569.5 350.87v8.21M578.5 214.93v9.75M573.5 350.35v2.05M573.5 369.85v2.05M573.5 399.09v10.77M578.5 283.16v4.62M578.5 299.57v6.16M578.5 337.53v4.62M578.5 386.26v6.16M578.5 424.73v46.17M582.5 132.34v7.18M582.5 240.58v3.08M582.5 279.05v2.56M582.5 309.32v2.56M582.5 317.52v1.03M582.5 319.58v15.39M587.5 211.85v8.72M587.5 255.46v3.08M587.5 266.23v5.13M582.5 362.15v12.82M582.5 384.72v8.72M582.5 396.52v2.05M587.5 312.39v6.16M587.5 354.46v1.03M587.5 452.95v11.29M591.5 131.83v2.05M591.5 288.8v1.54M591.5 296.49v6.67M591.5 308.29v1.03M591.5 341.63v2.56M591.5 349.84v1.03M591.5 468.34v6.67M596.5 150.3v31.29M596.5 200.06v11.29M596.5 236.99v1.54M596.5 250.33v15.9M596.5 273.41v4.62M591.5 369.85v5.64M591.5 379.08v8.72M591.5 407.81v6.16M600.5 186.72v10.77M600.5 263.15v5.13M596.5 316.5v3.59M596.5 335.99v2.05M596.5 363.18v2.56M596.5 453.46v7.18M600.5 312.39v3.59M600.5 346.25v2.56M600.5 360.61v3.59M600.5 464.23v6.16M605.5 144.14v7.18M605.5 163.64v4.62M605.5 232.89v1.03M605.5 251.86v4.62M605.5 257.51v3.08M605.5 274.95v12.31M605.5 293.93v2.56M600.5 409.34v3.59M600.5 422.68v2.56M609.5 180.56v43.6M609.5 229.81v.51M609.5 278.54v4.1M605.5 329.84v2.56M605.5 346.25v3.08M605.5 373.44v3.59M605.5 453.97v5.13M609.5 255.46v1.03M609.5 327.27v1.03M609.5 355.48v4.62M609.5 371.9v4.1M609.5 461.67v5.13M614.5 139.01v6.16M614.5 243.14v1.54M614.5 263.15v2.56M614.5 283.16v2.05M614.5 308.29v4.62M614.5 321.63v.51M609.5 343.17v1.54M609.5 388.83v7.18M609.5 423.71v17.44M618.5 147.73v65.15M618.5 235.45v12.82M618.5 262.12v9.75M618.5 311.37v6.67M614.5 334.96v1.54M614.5 355.48v2.56M614.5 381.64v1.03M614.5 455v3.08M618.5 334.45v1.54M618.5 361.64v2.05M618.5 374.98v2.05M618.5 460.13v4.1M623.5 133.88v6.16M623.5 247.76v3.08M623.5 271.36v7.18M623.5 286.75v6.67M623.5 302.14v6.67M623.5 310.86v1.03M623.5 313.93v1.03M623.5 326.76v3.59M618.5 424.73v3.59M618.5 442.17v5.64M627.5 142.6v6.16M627.5 197.49v13.85M627.5 212.37v2.56M627.5 220.57v2.56M627.5 248.79v4.1M627.5 316.5v12.82M623.5 344.2v3.08M623.5 355.48v3.08M623.5 364.2v2.05M623.5 369.85v4.1M623.5 384.21v4.62M623.5 403.19v9.23M623.5 413.45v2.05M623.5 455v2.56M632.5 235.45v7.69M627.5 297.52v3.08M627.5 313.42v2.56M627.5 349.84v4.62M623.5 431.4v8.21M627.5 459.61v2.56M632.5 131.83v3.59M632.5 209.8v2.05M632.5 215.44v4.1M632.5 258.02v4.62M632.5 273.41v4.62M632.5 292.9v2.56M632.5 331.37v1.54M632.5 342.15v2.05M627.5 423.71v4.1M627.5 444.74v4.62M632.5 471.93v3.08M636.5 137.99v6.16M636.5 205.7v1.03M636.5 224.68v4.1M636.5 253.92v2.56M636.5 278.54v3.08M636.5 290.85v2.56M632.5 310.34v4.62M632.5 321.11v3.08M636.5 335.99v3.08M632.5 353.94v3.08M632.5 376.51v5.64M632.5 408.83v1.54M632.5 455v2.56M641.5 194.93v7.18M641.5 239.55v7.69M636.5 305.21v2.56M636.5 324.71v1.54M636.5 355.48v2.05M636.5 383.18v23.08M632.5 434.99v3.08M636.5 458.59v2.56M641.5 265.2v4.1M641.5 298.54v2.05M641.5 330.35v1.54M641.5 348.3v2.56M636.5 423.19v6.16M636.5 444.74v5.13M641.5 468.85v4.1M645.5 132.86v6.67M645.5 222.63v11.8M645.5 259.56v16.93M645.5 295.47v2.56M641.5 316.5v4.62M645.5 335.48v8.21M641.5 363.18v9.75M641.5 403.7v.51M641.5 455v2.05M650.5 191.34v5.13M650.5 199.54v7.18M645.5 315.47v8.21M645.5 359.59v6.16M645.5 368.31v6.67M645.5 399.6v1.03M645.5 458.08v2.05M654.5 205.19v9.23M650.5 306.24v5.13M645.5 427.3v5.64M645.5 445.76v4.62M650.5 466.28v3.08M654.5 131.83v2.56M654.5 230.32v13.34M654.5 274.44v4.62M654.5 296.49v15.9M650.5 396.01v1.54M650.5 455v1.54M654.5 470.9v4.1M659.5 150.81v17.44M659.5 196.98v3.59M659.5 222.11v2.56M659.5 250.84v2.05M659.5 267.77v1.54M654.5 329.84v7.18M654.5 338.56v3.08M654.5 343.17v8.72M654.5 391.39v1.03M654.5 457.56v1.54M663.5 205.7v1.03M659.5 227.76v3.59M659.5 241.09v5.13M659.5 277.51v2.56M659.5 289.82v2.05M659.5 321.11v2.05M659.5 356.51v4.62M659.5 376v4.1M659.5 381.64v3.08M654.5 429.35v4.62M654.5 445.25v4.1M659.5 464.23v2.56M663.5 231.35v11.8M663.5 267.77v9.75M663.5 291.88v4.1M663.5 318.04v2.05M659.5 334.45v1.54M659.5 343.69v2.56M663.5 362.15v14.88M659.5 415.5v5.13M659.5 454.49v1.54M663.5 468.34v3.59M668.5 147.22v37.96M668.5 197.49v11.8M668.5 219.04v5.64M668.5 251.86v10.77M668.5 308.29v1.54M668.5 312.91v2.05M663.5 333.43v4.1M663.5 349.84v4.62M663.5 382.67v2.05M663.5 400.11v14.36M663.5 456.54v1.54M668.5 271.87v1.54M668.5 290.85v2.05M668.5 326.76v3.59M668.5 352.92v4.1M668.5 390.36v4.62M663.5 431.4v14.88M668.5 462.69v2.05M672.5 267.25v4.1M672.5 289.31v3.59M672.5 309.83v2.05M668.5 377.03v1.54M668.5 419.6v3.08M668.5 453.46v1.54M672.5 465.77v3.08M677.5 142.09v18.98M677.5 182.1v3.59M677.5 187.74v8.72M677.5 218.01v5.64M677.5 247.25v5.13M672.5 367.79v5.64M672.5 415.5v2.56M672.5 455.51v1.54M681.5 173.38v8.21M681.5 226.22v17.44M677.5 311.37v6.67M677.5 320.6v11.29M677.5 356v3.59M677.5 390.88v2.56M677.5 404.73v3.59M677.5 461.15v1.54M681.5 297.01v4.62M681.5 330.86v4.62M681.5 354.46v4.1M677.5 372.41v7.18M681.5 394.98v7.18M677.5 422.68v3.59M677.5 450.89v3.08M681.5 463.72v2.56M686.5 135.94v10.77M686.5 193.9v8.21M686.5 212.88v8.21M686.5 241.09v4.1M686.5 270.33v14.88M681.5 363.18v5.64M681.5 370.87v5.64M681.5 418.58v3.59M681.5 454.49v1.03M690.5 170.82v9.23M690.5 188.77v3.59M690.5 272.9v5.13M690.5 282.13v2.05M686.5 298.03v18.98M686.5 355.48v1.54M686.5 385.75v6.67M686.5 405.24v5.13M686.5 459.1v2.05M690.5 292.39v2.05M690.5 309.32v5.13M690.5 344.2v2.56M686.5 430.89v6.67M686.5 442.69v6.67M690.5 461.67v2.05M695.5 131.83v7.69M695.5 179.02v6.16M695.5 187.74v3.08M695.5 227.76v6.67M695.5 255.46v3.59M695.5 277.51v2.56M690.5 426.27v4.62M690.5 449.87v4.1M695.5 470.9v4.1M699.5 146.71v33.34M699.5 199.03v1.54M699.5 223.65v4.1M699.5 256.48v2.05M699.5 269.82v2.56M695.5 330.35v3.08M695.5 344.2v1.54M695.5 346.25v6.16M695.5 391.39v11.29M695.5 410.37v7.69M695.5 457.56v1.54M699.5 288.29v2.05M699.5 298.03v1.54M699.5 302.65v1.03M699.5 304.7v3.08M699.5 332.91v4.62M699.5 354.97v3.59M699.5 383.18v5.13M699.5 459.61v1.54M704.5 203.65v13.85M704.5 265.2v7.18M704.5 275.46v5.64M704.5 311.88v4.62M704.5 325.73v3.08M704.5 369.33v3.08M699.5 435.51v10.77M704.5 467.31v4.62M708.5 135.94v78.48M708.5 312.39v7.69M704.5 331.37v3.08M704.5 347.79v3.08M704.5 421.66v4.1M704.5 455v1.54M708.5 325.22v8.21M708.5 350.35v5.64M708.5 414.99v6.16M708.5 457.05v1.54M713.5 253.4v6.16M713.5 291.36v2.05M713.5 305.73v2.05M713.5 463.72v3.08M717.5 131.83v102.08M717.5 242.12v8.72M713.5 429.86v6.67M713.5 445.76v6.16M717.5 467.82v7.18M717.5 424.73v5.13M717.5 451.41v4.1M722.5 256.48v6.16M722.5 273.92v6.16M722.5 299.06v5.64M722.5 327.27v21.03M722.5 380.62v28.21M722.5 460.13v2.56M726.5 195.44v35.91M726.5 245.71v8.72M726.5 284.69v9.23M726.5 463.21v4.62M731.5 301.11v27.19M731.5 352.41v24.62M731.5 416.01v8.21M731.5 455.51v2.56M735.5 226.22v21.03M735.5 252.89v34.88M735.5 335.99v11.8M735.5 379.59v35.39M735.5 458.59v3.08M740.5 431.91v17.44M744.5 275.97v75.41M744.5 423.19v9.23M744.5 448.84v6.67M758.5 131.83v5.13M758.5 383.18v36.93M758.5 456.02v9.23M758.5 466.28v8.72M767.5 133.88v11.29M767.5 146.19v221.6M767.5 432.94v12.82M771.5 381.13v44.11M771.5 450.38v22.57M780.5 131.83v343.17" fill="none" stroke="#0000ff" stroke-width="1" stroke-opacity="0.667"/><defs><filter id="bl" x="-20%" y="-20%" width="140%" height="140%"><feGaussianBlur stdDeviation="7"/></filter></defs><path d="M718.2 172.2l-34.1 1l-29.2 8.8l-39 11.3l-26 8.2l-17.9 9.7l-6.4 16.2l-11.4 26l-16.2 32.5l-13 19.1l-11.4 27.5l-3.3 32.5l1.7 22.7l13 22.7l19.4 11.4l29.3 4.2l32.5 3.3l35.7 -2.6l29.2 -6.5l16.3 -13l16.2 -26l13 -26l6.5 -22.7l4.9 -22.8l4.8 -30.3l3.2 -19.4l4 -32.6l1.9 -27.6l-12.3 -13Z" fill="#fff" fill-opacity=".16" filter="url(#bl)"/><path d="M554 287l21 -27l23.7 -22l18.7 -14l25.8 -23.5l28.2 -16.5l18.8 -5.8M617.4 239.7l-14.1 24.2l-12.9 28.1M618.2 239.5l2.8 24.4l-3.6 10.5l-6.4 21.6M643.2 200.5l7.1 16.5l11.7 -6M662 211l-4.7 24.7l4.7 28.2l4.7 23.4l-3.6 7.1l8.6 23.1l-2.9 13M690.2 178.2l11.7 27l2.3 30.5v16.3l-4.7 18.9l-7 9.4M549 309l13 24.4l10 33.2l11.6 34.7l13 20.2M562 333.4l20.2 -15.9l23.1 -20.2l5.7 -17.3M622.6 280l2.9 28.9l8.7 28.9l-4.3 14.4l-13 26l-11.6 17.3l-8.7 26M634.2 337.8h23.1l4.3 14.4l4.4 26l-20.3 23.1l-25.7 16.7M700.7 302.1l-5.9 6.8v17.3l-5.8 26l-8.6 11.6l-8.7 27.4l-11.7 12.8M692.2 280.7l8.5 21.4M711 284.6l5 15.4l-8 22l-8 23M549 309l-9 -13l5 -21l15 -20M586.7 356.2l13.3 -16.2l12 -15l13.5 -16.1" fill="none" stroke="#0000f0" stroke-width=".600" stroke-opacity=".4" stroke-linejoin="round"/><path d="M718.2 172.2l-34.1 1l-29.2 8.8l-39 11.3l-26 8.2l-17.9 9.7l-6.4 16.2l-11.4 26l-16.2 32.5l-13 19.1l-11.4 27.5l-3.3 32.5l1.7 22.7l13 22.7l19.4 11.4l29.3 4.2l32.5 3.3l35.7 -2.6l29.2 -6.5l16.3 -13l16.2 -26l13 -26l6.5 -22.7l4.9 -22.8l4.8 -30.3l3.2 -19.4l4 -32.6l1.9 -27.6l-12.3 -13Z" fill="none" stroke="#ff98ee" stroke-width=".950" stroke-linejoin="round"/><path d="M713.5 222l-4 11M703 268.5l8 -5.5M716.6 297.3l17.8 22.2M722 274.2l24 -0.6" fill="none" stroke="#222" stroke-width=".7"/><g font-family="Liberation Sans,sans-serif" font-size="5.200" fill="#2e2e2e"><circle cx="662.3" cy="211.2" r="2.100" fill="#f41818" stroke="#8c2a2a" stroke-width=".7"/><text x="667.3" y="213.1">C3</text><circle cx="618.2" cy="239.5" r="2.100" fill="#f41818" stroke="#8c2a2a" stroke-width=".7"/><text x="623.2" y="241.4">C2</text><circle cx="574.3" cy="259.9" r="2.100" fill="#f41818" stroke="#8c2a2a" stroke-width=".7"/><text x="579.3" y="261.8">C1</text><circle cx="618.2" cy="274.9" r="2.100" fill="#f41818" stroke="#8c2a2a" stroke-width=".7"/><text x="623.2" y="276.8">C4</text><circle cx="704.2" cy="252.4" r="2.100" fill="#f41818" stroke="#8c2a2a" stroke-width=".7"/><text x="709.2" y="254.3">B5</text><circle cx="692.2" cy="280.7" r="2.100" fill="#f41818" stroke="#8c2a2a" stroke-width=".7"/><text x="697.2" y="282.6">A1</text><circle cx="711" cy="284.6" r="2.100" fill="#f41818" stroke="#8c2a2a" stroke-width=".7"/><text x="716.0" y="286.5">A2</text><circle cx="676" cy="291.4" r="2.100" fill="#f41818" stroke="#8c2a2a" stroke-width=".7"/><text x="681.0" y="293.3">A3</text><circle cx="700.7" cy="302.1" r="2.100" fill="#f41818" stroke="#8c2a2a" stroke-width=".7"/><text x="705.7" y="304.0">B4</text><circle cx="548.3" cy="309.1" r="2.100" fill="#f41818" stroke="#8c2a2a" stroke-width=".7"/><text x="553.3" y="311.0">C7</text><circle cx="669.5" cy="330.9" r="2.100" fill="#f41818" stroke="#8c2a2a" stroke-width=".7"/><text x="674.5" y="332.8">A10</text><circle cx="586.7" cy="356.2" r="2.100" fill="#f41818" stroke="#8c2a2a" stroke-width=".7"/><text x="591.7" y="358.1">C5</text><circle cx="682.5" cy="363.3" r="2.100" fill="#f41818" stroke="#8c2a2a" stroke-width=".7"/><text x="687.5" y="365.2">A9</text><circle cx="531.5" cy="387" r="2.100" fill="#f41818" stroke="#8c2a2a" stroke-width=".7"/><text x="536.5" y="388.9">C8</text><circle cx="673.4" cy="392.2" r="2.100" fill="#f41818" stroke="#8c2a2a" stroke-width=".7"/><text x="678.4" y="394.1">A8</text></g></svg>
<svg class="a" style="left:1054px;top:68px" width="26" height="84" viewBox="1054 68 26 84"><rect x="1059" y="72" width="12" height="12" fill="#f5f5f5"/><path d="M1060.200 79.2l4.800-4.600 4.800 4.600M1061.400 78v2.800M1068.600 78v2.800" fill="none" stroke="#7d7d7d" stroke-width=".8"/><path d="M1061 81.4h8.200" stroke="#666" stroke-width=".9" stroke-dasharray="1.200 .8"/><rect x="1059" y="90.8" width="12" height="12" fill="#f5f5f5"/><path d="M1060.200 98.0l4.800-4.600 4.800 4.600M1061.400 96.8v2.800M1068.600 96.8v2.800" fill="none" stroke="#7d7d7d" stroke-width=".8"/><path d="M1061 100.2h8.200" stroke="#666" stroke-width=".9" stroke-dasharray="1.200 .8"/><path d="M1067 91.600l2.400 1.600v3" fill="none" stroke="#7d7d7d" stroke-width=".8"/><path d="M1059.500 108.600h11" stroke="#dcdcdc" stroke-width=".7"/><rect x="1059" y="113" width="12" height="12.500" fill="#f4f4f4"/><rect x="1059" y="130.500" width="12" height="12.500" fill="#f4f4f4"/><path d="M1060 124.500v-8c0-1.600 1.400-2.400 3-2.400h2.200c1.400 0 2 .8 2.400 2.400l1 4.600c.4 1.600 1 2.800 2.200 3.200" fill="none" stroke="#d2d2d2" stroke-width=".8"/><path d="M1061.600 132.400l8.200 1.400.6 6.200-10.200 1.400z" fill="none" stroke="#d2d2d2" stroke-width=".8"/></svg>
</body></html>
